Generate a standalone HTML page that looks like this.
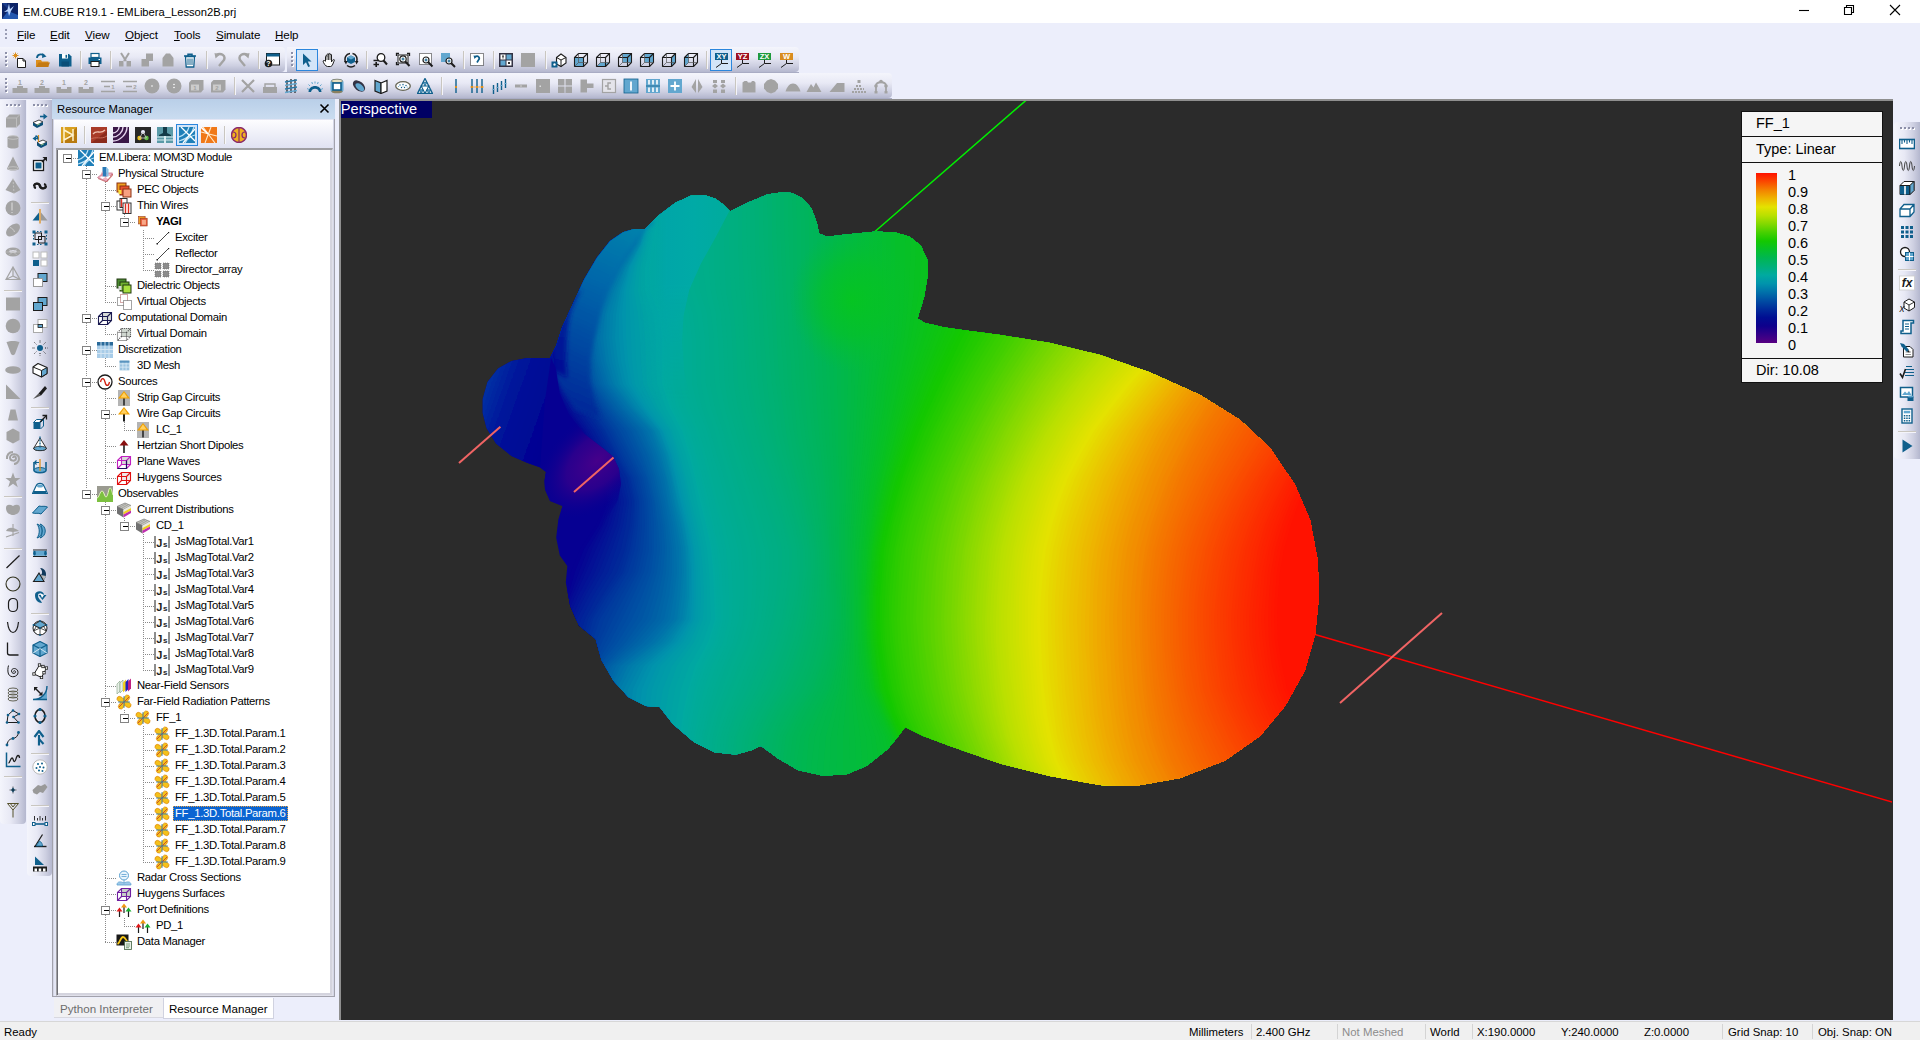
<!DOCTYPE html><html><head><meta charset="utf-8"><title>EM.CUBE</title><style>
html,body{margin:0;padding:0;}
body{width:1920px;height:1040px;overflow:hidden;background:#eceefb;font-family:"Liberation Sans",sans-serif;font-size:11px;color:#000;position:relative;}
.abs{position:absolute;}
.t{position:absolute;white-space:nowrap;line-height:1;}
#title{left:0;top:0;width:1920px;height:23px;background:#fff;}
#menubar{left:0;top:23px;width:1920px;height:23px;background:#eceefb;}
.tb{position:absolute;background:linear-gradient(#f4f5fc 0%,#e8e9f5 40%,#cdcfe1 75%,#b4b7ce 100%);border-radius:0 4px 4px 0;}
.vtb{position:absolute;background:linear-gradient(90deg,#f4f5fc 0%,#e8e9f5 40%,#cdcfe1 75%,#b4b7ce 100%);border-radius:0 0 4px 4px;}
#viewport{left:339px;top:99px;width:1554px;height:921px;background:#2b2b2b;border-top:2px solid #8f8f8f;border-left:2px solid #8f8f8f;box-sizing:border-box;}
#status{left:0;top:1021px;width:1920px;height:19px;background:#f0f0f0;border-top:1px solid #d7d7d7;box-sizing:border-box;}
</style></head><body>
<div id="title" class="abs"></div>
<div class="t " style="left:23px;top:6.6px;font-size:11.2px;color:#000;">EM.CUBE R19.1 - EMLibera_Lesson2B.prj</div>
<div id="menubar" class="abs"></div>
<div id="status" class="abs"></div>
<div id="viewport" class="abs"></div>
<svg class="abs" style="left:341px;top:101px" width="1551" height="919" viewBox="341 101 1551 919">
<line x1="874.7" y1="231.7" x2="1027" y2="99.5" stroke="#00f000" stroke-width="1.5"/>
<line x1="1315" y1="634.5" x2="1893" y2="802.3" stroke="#ff0000" stroke-width="1.5"/>
<defs><clipPath id="cl"><path d="M550.0 358.0L527.0 358.0L511.5 361.0L498.0 368.5L487.5 382.0L482.7 399.0L482.7 413.0L486.5 428.0L496.0 443.5L511.5 456.0L527.0 462.7L540.4 467.5L546.0 472.0L544.5 481.0L545.0 489.6L550.0 501.0L562.5 506.0L558.3 519.8L556.2 537.7L559.8 555.6L567.3 566.0L565.8 582.4L570.2 606.0L579.0 625.6L595.6 639.0L601.5 660.0L613.5 680.8L628.4 697.0L646.0 706.0L659.7 707.0L673.0 724.0L694.0 742.0L714.8 752.3L735.7 754.4L752.0 750.0L761.0 745.7L777.4 758.0L798.0 770.0L822.0 775.5L846.0 774.6L866.8 765.7L887.7 749.0L899.6 734.4L905.0 727.0L923.4 736.0L950.0 746.0L1000.0 763.5L1050.0 776.0L1100.0 785.0L1135.0 786.0L1180.0 778.0L1225.0 760.5L1260.0 736.0L1285.0 706.0L1305.0 670.0L1315.0 635.0L1319.0 595.0L1317.5 560.0L1310.0 520.0L1295.0 485.0L1270.0 448.0L1240.0 420.0L1200.0 395.0L1150.0 372.5L1100.0 355.0L1050.0 343.0L1000.0 335.0L960.0 329.7L944.7 327.5L925.0 323.0L917.4 318.8L924.0 296.9L927.7 275.0L927.2 259.7L920.6 245.5L909.7 236.7L894.4 232.3L874.7 231.7L846.3 234.5L826.6 236.7L819.0 233.4L816.7 222.5L811.3 208.3L802.5 198.4L791.6 193.0L780.6 192.5L767.5 194.5L750.0 201.7L730.0 211.5L723.8 205.0L715.0 198.4L704.0 195.0L691.0 195.8L675.6 202.8L658.0 216.0L645.0 229.0L634.0 229.0L623.0 232.3L610.0 241.0L597.0 257.5L584.0 279.4L573.0 303.5L562.0 327.5L556.4 345.0Z"/></clipPath>
<linearGradient id="gbl" gradientUnits="userSpaceOnUse" x1="642" y1="228" x2="566" y2="395"><stop offset="0" stop-color="#0082ac"/><stop offset="0.35" stop-color="#0068aa"/><stop offset="0.7" stop-color="#004aa2"/><stop offset="1" stop-color="#002c9a"/></linearGradient>
<linearGradient id="gbb" gradientUnits="userSpaceOnUse" x1="578" y1="295" x2="560" y2="375"><stop offset="0" stop-color="#002a9c"/><stop offset="1" stop-color="#000c94"/></linearGradient>
<linearGradient id="gsl" gradientUnits="userSpaceOnUse" x1="482" y1="400" x2="552" y2="425"><stop offset="0" stop-color="#0030a4"/><stop offset="0.35" stop-color="#00149a"/><stop offset="1" stop-color="#040092"/></linearGradient>
<radialGradient id="gpu" gradientUnits="userSpaceOnUse" cx="0" cy="0" r="1" gradientTransform="translate(597 461) rotate(-42) scale(72 44)"><stop offset="0" stop-color="#46008a"/><stop offset="0.5" stop-color="#30008c" stop-opacity="0.85"/><stop offset="1" stop-color="#0a0090" stop-opacity="0"/></radialGradient>
<linearGradient id="gfd" x1="0" y1="0" x2="0" y2="1"><stop offset="0" stop-color="#060092"/><stop offset="0.68" stop-color="#060092"/><stop offset="0.93" stop-color="#060092" stop-opacity="0"/></linearGradient>
<linearGradient id="gl2" gradientUnits="userSpaceOnUse" x1="640" y1="0" x2="730" y2="0"><stop offset="0" stop-color="#00a2aa" stop-opacity="0"/><stop offset="0.3" stop-color="#00a6a8"/><stop offset="0.6" stop-color="#00aaa6"/><stop offset="1" stop-color="#00ac9c"/></linearGradient>
<linearGradient id="gl2m" gradientUnits="userSpaceOnUse" x1="0" y1="190" x2="0" y2="400"><stop offset="0" stop-color="#fff"/><stop offset="0.45" stop-color="#fff"/><stop offset="1" stop-color="#000"/></linearGradient>
<mask id="ml2" maskUnits="userSpaceOnUse" x="600" y="180" width="160" height="240"><rect x="600" y="180" width="160" height="240" fill="url(#gl2m)"/></mask>
<radialGradient id="ghs" gradientUnits="userSpaceOnUse" cx="0" cy="0" r="1" gradientTransform="translate(852 300) scale(62 72)"><stop offset="0" stop-color="#06c61c" stop-opacity="0.85"/><stop offset="0.5" stop-color="#06c420" stop-opacity="0.55"/><stop offset="1" stop-color="#06c030" stop-opacity="0"/></radialGradient>
<filter id="bl" x="-20%" y="-20%" width="140%" height="140%"><feGaussianBlur stdDeviation="2"/></filter>
<filter id="bl4" x="-20%" y="-20%" width="140%" height="140%"><feGaussianBlur stdDeviation="5"/></filter>
</defs>
<g clip-path="url(#cl)">
<rect x="470" y="180" width="870" height="620" fill="#060092"/>
<path d="M520 150L520 173L520 197L520 220L520 244L520 267L520 291L523 314L526 338L533 361L542 384L560 408L580 431L592 455L602 478L606 502L596 525L580 549L571 572L566 596L560 619L552 642L543 666L539 689L537 713L535 736L533 760L531 783L530 807L530 830L1400 830L1400 150Z" fill="#060092"/>
<path d="M529 150L529 173L529 197L529 220L529 244L527 267L526 291L527 314L530 338L536 361L545 384L562 408L581 431L593 455L604 478L608 502L599 525L584 549L575 572L568 596L561 619L553 642L546 666L542 689L540 713L538 736L537 760L535 783L533 807L533 830L1400 830L1400 150Z" fill="#050493"/>
<path d="M537 150L537 173L537 197L537 220L537 244L534 267L532 291L531 314L533 338L539 361L548 384L564 408L582 431L595 455L606 478L610 502L602 525L588 549L579 572L570 596L562 619L555 642L549 666L545 689L543 713L542 736L540 760L538 783L536 807L536 830L1400 830L1400 150Z" fill="#050893"/>
<path d="M545 150L545 173L545 197L546 220L545 244L541 267L537 291L535 314L537 338L542 361L550 384L566 408L584 431L596 455L608 478L612 502L604 525L592 549L583 572L572 596L563 619L557 642L551 666L548 689L546 713L545 736L543 760L541 783L540 807L540 830L1400 830L1400 150Z" fill="#040c94"/>
<path d="M553 150L553 173L553 197L554 220L553 244L547 267L542 291L539 314L540 338L545 361L553 384L568 408L585 431L598 455L610 478L614 502L607 525L596 549L586 572L575 596L565 619L559 642L554 666L552 689L550 713L548 736L546 760L544 783L543 807L543 830L1400 830L1400 150Z" fill="#041095"/>
<path d="M560 150L560 173L561 197L562 220L561 244L553 267L547 291L543 314L544 338L548 361L556 384L570 408L587 431L600 455L612 478L617 502L610 525L600 549L591 572L578 596L568 619L561 642L557 666L555 689L553 713L551 736L549 760L547 783L546 807L546 830L1400 830L1400 150Z" fill="#031496"/>
<path d="M568 150L568 173L568 197L569 220L568 244L559 267L552 291L547 314L547 338L552 361L559 384L573 408L589 431L602 455L614 478L619 502L613 525L604 549L595 572L582 596L571 619L564 642L560 666L558 689L556 713L554 736L552 760L551 783L549 807L549 830L1400 830L1400 150Z" fill="#031896"/>
<path d="M575 150L575 173L575 197L576 220L575 244L565 267L557 291L551 314L550 338L555 361L562 384L575 408L591 431L604 455L617 478L621 502L617 525L608 549L599 572L585 596L574 619L568 642L564 666L561 689L559 713L558 736L556 760L554 783L552 807L552 830L1400 830L1400 150Z" fill="#021c97"/>
<path d="M582 150L582 173L582 197L583 220L581 244L570 267L562 291L555 314L554 338L558 361L565 384L578 408L594 431L607 455L619 478L624 502L620 525L612 549L603 572L589 596L577 619L571 642L567 666L564 689L562 713L561 736L559 760L557 783L555 807L555 830L1400 830L1400 150Z" fill="#022098"/>
<path d="M588 150L588 173L588 197L589 220L587 244L575 267L566 291L558 314L557 338L561 361L568 384L580 408L596 431L609 455L621 478L627 502L623 525L616 549L608 572L593 596L581 619L574 642L570 666L568 689L566 713L564 736L562 760L560 783L559 807L559 830L1400 830L1400 150Z" fill="#012499"/>
<path d="M594 150L594 173L594 197L595 220L592 244L580 267L570 291L562 314L560 338L564 361L570 384L583 408L599 431L611 455L624 478L629 502L626 525L621 549L612 572L597 596L585 619L578 642L574 666L571 689L569 713L567 736L565 760L563 783L562 807L562 830L1400 830L1400 150Z" fill="#012899"/>
<path d="M600 150L600 173L600 197L600 220L597 244L584 267L574 291L565 314L563 338L567 361L573 384L586 408L601 431L614 455L627 478L632 502L630 525L625 549L617 572L602 596L588 619L582 642L577 666L574 689L572 713L570 736L568 760L566 783L565 807L565 830L1400 830L1400 150Z" fill="#002c9a"/>
<path d="M603 150L603 173L603 197L603 220L599 244L586 267L576 291L567 314L565 338L569 361L575 384L588 408L603 431L616 455L628 478L634 502L632 525L627 549L620 572L604 596L591 619L584 642L579 666L576 689L574 713L572 736L570 760L568 783L567 807L567 830L1400 830L1400 150Z" fill="#002f9b"/>
<path d="M606 150L606 173L606 197L606 220L602 244L588 267L578 291L569 314L567 338L570 361L577 384L589 408L605 431L617 455L630 478L635 502L634 525L630 549L623 572L607 596L593 619L587 642L581 666L577 689L575 713L574 736L572 760L570 783L568 807L568 830L1400 830L1400 150Z" fill="#00339c"/>
<path d="M609 150L609 173L609 197L608 220L604 244L590 267L580 291L571 314L568 338L572 361L578 384L591 408L606 431L619 455L631 478L637 502L636 525L632 549L625 572L610 596L597 619L589 642L583 666L579 689L577 713L575 736L573 760L571 783L570 807L570 830L1400 830L1400 150Z" fill="#00369d"/>
<path d="M612 150L612 173L612 197L611 220L606 244L592 267L581 291L572 314L570 338L574 361L580 384L593 408L609 431L621 455L633 478L639 502L638 525L635 549L628 572L614 596L600 619L592 642L585 666L581 689L579 713L577 736L575 760L573 783L572 807L572 830L1400 830L1400 150Z" fill="#003a9e"/>
<path d="M615 150L615 173L615 197L614 220L608 244L594 267L583 291L574 314L571 338L575 361L581 384L595 408L611 431L623 455L635 478L640 502L640 525L638 549L632 572L617 596L604 619L596 642L587 666L582 689L580 713L578 736L576 760L575 783L573 807L573 830L1400 830L1400 150Z" fill="#003d9e"/>
<path d="M618 150L618 173L618 197L616 220L611 244L596 267L585 291L575 314L573 338L577 361L583 384L597 408L613 431L625 455L637 478L642 502L642 525L640 549L635 572L621 596L609 619L599 642L589 666L584 689L582 713L580 736L578 760L576 783L575 807L575 830L1400 830L1400 150Z" fill="#00409f"/>
<path d="M621 150L621 173L621 197L619 220L613 244L598 267L587 291L577 314L575 338L578 361L585 384L599 408L615 431L628 455L639 478L644 502L645 525L643 549L638 572L625 596L613 619L602 642L591 666L586 689L583 713L582 736L580 760L578 783L576 807L576 830L1400 830L1400 150Z" fill="#0044a0"/>
<path d="M624 150L624 173L623 197L621 220L615 244L600 267L588 291L579 314L576 338L580 361L586 384L601 408L618 431L630 455L641 478L646 502L647 525L646 549L641 572L629 596L618 619L606 642L593 666L587 689L585 713L583 736L581 760L579 783L578 807L578 830L1400 830L1400 150Z" fill="#0047a1"/>
<path d="M626 150L626 173L626 197L623 220L617 244L601 267L590 291L580 314L578 338L581 361L588 384L603 408L620 431L632 455L643 478L648 502L649 525L649 549L644 572L633 596L622 619L610 642L595 666L589 689L586 713L585 736L583 760L581 783L579 807L579 830L1400 830L1400 150Z" fill="#004ba2"/>
<path d="M629 150L629 173L629 197L626 220L618 244L603 267L591 291L582 314L579 338L583 361L589 384L605 408L623 431L635 455L645 478L650 502L651 525L652 549L648 572L637 596L627 619L614 642L597 666L590 689L588 713L586 736L584 760L582 783L581 807L581 830L1400 830L1400 150Z" fill="#004ea3"/>
<path d="M632 150L632 173L631 197L628 220L620 244L605 267L593 291L583 314L581 338L584 361L591 384L607 408L626 431L637 455L647 478L652 502L654 525L654 549L651 572L642 596L632 619L618 642L599 666L592 689L590 713L588 736L586 760L584 783L582 807L582 830L1400 830L1400 150Z" fill="#0052a4"/>
<path d="M634 150L634 173L634 197L630 220L622 244L606 267L594 291L585 314L582 338L586 361L593 384L609 408L628 431L640 455L648 478L654 502L656 525L657 549L654 572L646 596L637 619L622 642L601 666L594 689L591 713L590 736L587 760L585 783L584 807L584 830L1400 830L1400 150Z" fill="#0055a4"/>
<path d="M637 150L637 173L636 197L632 220L624 244L608 267L596 291L586 314L584 338L588 361L594 384L611 408L631 431L642 455L650 478L655 502L658 525L660 549L657 572L650 596L642 619L626 642L604 666L596 689L593 713L591 736L589 760L587 783L586 807L586 830L1400 830L1400 150Z" fill="#0059a5"/>
<path d="M639 150L639 173L638 197L634 220L625 244L609 267L597 291L588 314L586 338L589 361L596 384L613 408L633 431L644 455L652 478L657 502L661 525L662 549L660 572L654 596L647 619L629 642L606 666L597 689L595 713L593 736L591 760L589 783L588 807L588 830L1400 830L1400 150Z" fill="#005ca6"/>
<path d="M641 150L641 173L640 197L636 220L627 244L611 267L599 291L590 314L587 338L591 361L598 384L615 408L636 431L647 455L654 478L659 502L663 525L665 549L663 572L658 596L651 619L633 642L608 666L599 689L597 713L595 736L593 760L591 783L589 807L589 830L1400 830L1400 150Z" fill="#0060a6"/>
<path d="M643 150L643 173L642 197L637 220L628 244L612 267L601 291L591 314L589 338L593 361L600 384L618 408L638 431L649 455L656 478L661 502L665 525L667 549L666 572L662 596L656 619L637 642L611 666L601 689L599 713L597 736L595 760L593 783L591 807L591 830L1400 830L1400 150Z" fill="#0064a7"/>
<path d="M645 150L645 173L644 197L639 220L630 244L614 267L602 291L593 314L591 338L595 361L602 384L620 408L641 431L651 455L658 478L663 502L667 525L670 549L669 572L665 596L660 619L641 642L613 666L603 689L601 713L599 736L597 760L595 783L593 807L593 830L1400 830L1400 150Z" fill="#0067a8"/>
<path d="M647 150L647 173L646 197L640 220L631 244L615 267L604 291L595 314L593 338L597 361L604 384L622 408L643 431L653 455L660 478L665 502L669 525L672 549L672 572L669 596L664 619L644 642L616 666L606 689L603 713L601 736L599 760L597 783L595 807L595 830L1400 830L1400 150Z" fill="#006ba9"/>
<path d="M648 150L648 173L647 197L642 220L632 244L617 267L606 291L597 314L595 338L599 361L606 384L624 408L645 431L655 455L662 478L667 502L671 525L674 549L674 572L672 596L667 619L648 642L619 666L608 689L605 713L603 736L601 760L599 783L598 807L598 830L1400 830L1400 150Z" fill="#006ea9"/>
<path d="M650 150L650 173L648 197L643 220L634 244L619 267L608 291L599 314L597 338L601 361L608 384L626 408L647 431L657 455L664 478L668 502L673 525L676 549L677 572L674 596L670 619L651 642L621 666L610 689L607 713L605 736L603 760L601 783L600 807L600 830L1400 830L1400 150Z" fill="#0072aa"/>
<path d="M652 150L652 173L650 197L644 220L635 244L620 267L610 291L602 314L600 338L604 361L610 384L629 408L650 431L659 455L666 478L670 502L675 525L679 549L679 572L677 596L674 619L655 642L625 666L613 689L611 713L608 736L606 760L604 783L603 807L603 830L1400 830L1400 150Z" fill="#0076aa"/>
<path d="M653 150L653 173L651 197L645 220L636 244L622 267L612 291L605 314L603 338L606 361L613 384L631 408L652 431L661 455L667 478L672 502L677 525L681 549L682 572L680 596L677 619L658 642L628 666L617 689L614 713L612 736L610 760L608 783L607 807L607 830L1400 830L1400 150Z" fill="#007baa"/>
<path d="M654 150L654 173L652 197L646 220L637 244L624 267L614 291L607 314L606 338L609 361L615 384L633 408L654 431L663 455L669 478L674 502L679 525L683 549L684 572L682 596L679 619L662 642L632 666L620 689L617 713L615 736L613 760L612 783L610 807L610 830L1400 830L1400 150Z" fill="#007fab"/>
<path d="M655 150L655 173L653 197L647 220L638 244L625 267L616 291L610 314L609 338L612 361L618 384L635 408L655 431L665 455L671 478L675 502L681 525L685 549L686 572L685 596L682 619L665 642L636 666L624 689L621 713L619 736L617 760L615 783L614 807L614 830L1400 830L1400 150Z" fill="#0083ab"/>
<path d="M656 150L656 173L653 197L647 220L639 244L626 267L618 291L613 314L612 338L615 361L620 384L637 408L657 431L666 455L672 478L677 502L682 525L686 549L687 572L687 596L684 619L668 642L640 666L628 689L625 713L623 736L621 760L620 783L619 807L619 830L1400 830L1400 150Z" fill="#0087ab"/>
<path d="M657 150L657 173L654 197L648 220L640 244L628 267L620 291L616 314L615 338L618 361L623 384L640 408L659 431L668 455L673 478L678 502L684 525L688 549L689 572L689 596L686 619L671 642L644 666L633 689L630 713L628 736L626 760L624 783L623 807L623 830L1400 830L1400 150Z" fill="#008cac"/>
<path d="M658 150L658 173L655 197L648 220L641 244L629 267L622 291L619 314L619 338L621 361L626 384L642 408L660 431L669 455L675 478L680 502L685 525L689 549L691 572L690 596L689 619L674 642L648 666L637 689L634 713L632 736L630 760L629 783L628 807L628 830L1400 830L1400 150Z" fill="#0090ac"/>
<path d="M659 150L659 173L655 197L649 220L641 244L630 267L624 291L622 314L623 338L625 361L629 384L644 408L662 431L671 455L676 478L681 502L687 525L691 549L692 572L692 596L691 619L677 642L652 666L642 689L639 713L637 736L635 760L634 783L633 807L633 830L1400 830L1400 150Z" fill="#0094ac"/>
<path d="M660 150L660 173L656 197L650 220L642 244L632 267L626 291L626 314L626 338L628 361L632 384L646 408L663 431L672 455L678 478L683 502L688 525L693 549L694 572L694 596L693 619L680 642L657 666L647 689L644 713L642 736L640 760L639 783L638 807L638 830L1400 830L1400 150Z" fill="#0097aa"/>
<path d="M660 150L660 173L656 197L650 220L643 244L634 267L629 291L630 314L631 338L632 361L635 384L649 408L665 431L674 455L680 478L685 502L690 525L694 549L696 572L696 596L695 619L683 642L661 666L652 689L649 713L647 736L645 760L644 783L643 807L643 830L1400 830L1400 150Z" fill="#009aa9"/>
<path d="M662 150L662 173L657 197L651 220L644 244L635 267L631 291L634 314L635 338L636 361L639 384L652 408L667 431L676 455L682 478L687 502L692 525L696 549L698 572L698 596L698 619L686 642L666 666L657 689L654 713L652 736L650 760L649 783L649 807L649 830L1400 830L1400 150Z" fill="#009ca8"/>
<path d="M663 150L663 173L658 197L652 220L645 244L637 267L634 291L638 314L640 338L641 361L643 384L655 408L670 431L678 455L684 478L689 502L694 525L699 549L700 572L701 596L700 619L690 642L672 666L663 689L659 713L657 736L656 760L655 783L654 807L654 830L1400 830L1400 150Z" fill="#009fa6"/>
<path d="M664 150L664 173L659 197L653 220L647 244L640 267L638 291L643 314L645 338L646 361L647 384L658 408L672 431L680 455L686 478L691 502L697 525L701 549L703 572L704 596L703 619L694 642L677 666L669 689L665 713L663 736L661 760L661 783L660 807L660 830L1400 830L1400 150Z" fill="#00a2a4"/>
<path d="M666 150L666 173L661 197L654 220L648 244L642 267L641 291L647 314L650 338L651 361L652 384L662 408L675 431L683 455L689 478L694 502L699 525L704 549L706 572L707 596L707 619L698 642L683 666L675 689L671 713L668 736L667 760L666 783L666 807L666 830L1400 830L1400 150Z" fill="#00a4a3"/>
<path d="M668 150L668 173L662 197L655 220L650 244L645 267L645 291L653 314L656 338L656 361L657 384L666 408L678 431L686 455L692 478L697 502L702 525L707 549L709 572L710 596L711 619L703 642L689 666L681 689L677 713L674 736L673 760L672 783L672 807L672 830L1400 830L1400 150Z" fill="#00a7a2"/>
<path d="M670 150L670 173L664 197L657 220L652 244L649 267L650 291L659 314L662 338L662 361L662 384L670 408L682 431L689 455L695 478L700 502L706 525L711 549L713 572L714 596L715 619L708 642L695 666L688 689L683 713L680 736L679 760L678 783L678 807L678 830L1400 830L1400 150Z" fill="#00aaa0"/>
<path d="M671 150L671 173L665 197L658 220L653 244L650 267L651 291L661 314L664 338L664 361L664 384L672 408L683 431L691 455L696 478L702 502L707 525L712 549L715 572L716 596L717 619L710 642L698 666L690 689L685 713L682 736L681 760L680 783L680 807L680 830L1400 830L1400 150Z" fill="#00aa9e"/>
<path d="M672 150L672 173L666 197L659 220L655 244L652 267L654 291L663 314L667 338L667 361L667 384L674 408L685 431L692 455L698 478L704 502L709 525L714 549L717 572L718 596L719 619L713 642L700 666L693 689L688 713L684 736L683 760L682 783L682 807L682 830L1400 830L1400 150Z" fill="#00aa9d"/>
<path d="M674 150L674 173L668 197L661 220L657 244L655 267L657 291L666 314L670 338L670 361L670 384L677 408L687 431L695 455L701 478L706 502L712 525L717 549L719 572L720 596L721 619L715 642L703 666L695 689L690 713L687 736L685 760L685 783L684 807L684 830L1400 830L1400 150Z" fill="#00ab9b"/>
<path d="M676 150L676 173L670 197L664 220L660 244L658 267L660 291L669 314L673 338L673 361L673 384L680 408L690 431L697 455L703 478L709 502L714 525L719 549L722 572L723 596L723 619L718 642L706 666L698 689L693 713L689 736L688 760L687 783L687 807L687 830L1400 830L1400 150Z" fill="#00ab99"/>
<path d="M679 150L679 173L673 197L667 220L663 244L661 267L663 291L673 314L676 338L676 361L676 384L683 408L693 431L700 455L706 478L712 502L718 525L723 549L725 572L726 596L726 619L720 642L709 666L701 689L695 713L691 736L690 760L689 783L689 807L689 830L1400 830L1400 150Z" fill="#00ab98"/>
<path d="M682 150L682 173L676 197L670 220L666 244L665 267L667 291L676 314L680 338L680 361L680 384L686 408L696 431L703 455L709 478L715 502L721 525L726 549L728 572L729 596L729 619L723 642L712 666L704 689L698 713L694 736L693 760L692 783L691 807L691 830L1400 830L1400 150Z" fill="#00ac96"/>
<path d="M685 150L685 173L679 197L673 220L670 244L669 267L671 291L680 314L684 338L684 361L684 384L690 408L699 431L706 455L712 478L718 502L725 525L730 549L732 572L733 596L732 619L727 642L716 666L708 689L701 713L696 736L695 760L694 783L694 807L694 830L1400 830L1400 150Z" fill="#00ac94"/>
<path d="M688 150L688 173L683 197L677 220L674 244L673 267L676 291L684 314L688 338L688 361L688 384L694 408L703 431L710 455L716 478L722 502L728 525L734 549L736 572L736 596L736 619L730 642L719 666L711 689L704 713L699 736L698 760L697 783L696 807L696 830L1400 830L1400 150Z" fill="#00ac93"/>
<path d="M691 150L691 173L686 197L681 220L679 244L678 267L680 291L689 314L692 338L692 361L692 384L698 408L707 431L713 455L720 478L726 502L732 525L738 549L740 572L740 596L739 619L733 642L723 666L714 689L707 713L702 736L700 760L699 783L699 807L699 830L1400 830L1400 150Z" fill="#00ac91"/>
<path d="M695 150L695 173L690 197L686 220L683 244L683 267L685 291L693 314L696 338L696 361L697 384L702 408L710 431L717 455L724 478L730 502L737 525L742 549L744 572L744 596L743 619L737 642L726 666L718 689L710 713L704 736L703 760L702 783L702 807L702 830L1400 830L1400 150Z" fill="#00ac8f"/>
<path d="M699 150L699 173L695 197L690 220L688 244L688 267L690 291L697 314L700 338L701 361L701 384L706 408L715 431L721 455L728 478L734 502L741 525L747 549L748 572L748 596L746 619L740 642L730 666L722 689L713 713L707 736L705 760L704 783L704 807L704 830L1400 830L1400 150Z" fill="#00ad8e"/>
<path d="M703 150L703 173L699 197L695 220L693 244L693 267L695 291L702 314L705 338L705 361L706 384L711 408L719 431L725 455L732 478L739 502L746 525L751 549L753 572L752 596L750 619L744 642L734 666L725 689L716 713L710 736L708 760L707 783L707 807L707 830L1400 830L1400 150Z" fill="#00ad8c"/>
<path d="M707 150L707 173L703 197L700 220L698 244L698 267L700 291L707 314L709 338L710 361L710 384L715 408L723 431L729 455L736 478L743 502L750 525L756 549L757 572L756 596L754 619L748 642L738 666L729 689L719 713L713 736L711 760L710 783L709 807L709 830L1400 830L1400 150Z" fill="#00ad8a"/>
<path d="M711 150L711 173L708 197L705 220L703 244L703 267L706 291L711 314L714 338L714 361L715 384L720 408L727 431L734 455L741 478L748 502L754 525L760 549L761 572L760 596L757 619L751 642L741 666L732 689L722 713L716 736L713 760L712 783L712 807L712 830L1400 830L1400 150Z" fill="#00ae89"/>
<path d="M715 150L715 173L712 197L710 220L708 244L709 267L711 291L716 314L718 338L719 361L720 384L725 408L731 431L738 455L745 478L752 502L759 525L765 549L766 572L764 596L761 619L755 642L745 666L736 689L726 713L718 736L716 760L715 783L715 807L715 830L1400 830L1400 150Z" fill="#00ae87"/>
<path d="M719 150L719 173L717 197L715 220L714 244L714 267L716 291L721 314L723 338L724 361L725 384L729 408L736 431L742 455L749 478L756 502L763 525L769 549L770 572L768 596L765 619L759 642L749 666L740 689L729 713L721 736L719 760L718 783L717 807L717 830L1400 830L1400 150Z" fill="#00ae85"/>
<path d="M723 150L723 173L722 197L720 220L719 244L719 267L721 291L725 314L727 338L728 361L729 384L734 408L740 431L746 455L754 478L761 502L768 525L773 549L774 572L772 596L768 619L762 642L753 666L743 689L732 713L724 736L722 760L720 783L720 807L720 830L1400 830L1400 150Z" fill="#00ae84"/>
<path d="M728 150L728 173L726 197L724 220L724 244L725 267L726 291L730 314L732 338L733 361L734 384L738 408L744 431L750 455L758 478L765 502L772 525L778 549L778 572L776 596L772 619L766 642L756 666L747 689L735 713L727 736L724 760L723 783L723 807L723 830L1400 830L1400 150Z" fill="#00ae82"/>
<path d="M732 150L732 173L730 197L729 220L729 244L730 267L731 291L734 314L736 338L737 361L738 384L742 408L748 431L754 455L762 478L769 502L776 525L782 549L782 572L779 596L775 619L769 642L760 666L750 689L738 713L729 736L727 760L726 783L725 807L725 830L1400 830L1400 150Z" fill="#00af80"/>
<path d="M736 150L736 173L735 197L734 220L734 244L734 267L736 291L738 314L740 338L741 361L743 384L747 408L752 431L758 455L766 478L773 502L780 525L785 549L786 572L783 596L779 619L772 642L763 666L753 689L741 713L732 736L730 760L728 783L728 807L728 830L1400 830L1400 150Z" fill="#00af7f"/>
<path d="M739 150L739 173L739 197L738 220L738 244L739 267L740 291L743 314L744 338L745 361L747 384L751 408L756 431L762 455L769 478L776 502L783 525L789 549L789 572L786 596L782 619L776 642L767 666L757 689L744 713L735 736L732 760L731 783L730 807L730 830L1400 830L1400 150Z" fill="#00af7d"/>
<path d="M743 150L743 173L743 197L742 220L742 244L743 267L745 291L747 314L748 338L749 361L751 384L755 408L760 431L765 455L773 478L780 502L786 525L792 549L792 572L789 596L785 619L779 642L770 666L760 689L747 713L737 736L735 760L733 783L733 807L733 830L1400 830L1400 150Z" fill="#00b07b"/>
<path d="M747 150L747 173L747 197L746 220L747 244L748 267L749 291L750 314L752 338L753 361L755 384L758 408L763 431L769 455L776 478L783 502L789 525L795 549L795 572L792 596L788 619L781 642L773 666L763 689L750 713L740 736L737 760L736 783L736 807L736 830L1400 830L1400 150Z" fill="#00b07a"/>
<path d="M750 150L750 173L750 197L750 220L750 244L751 267L753 291L754 314L755 338L757 361L758 384L762 408L766 431L772 455L779 478L785 502L792 525L797 549L798 572L795 596L790 619L784 642L776 666L766 689L752 713L743 736L740 760L738 783L738 807L738 830L1400 830L1400 150Z" fill="#00b078"/>
<path d="M754 150L754 173L754 197L755 220L755 244L756 267L757 291L759 314L760 338L761 361L763 384L766 408L770 431L776 455L782 478L789 502L795 525L800 549L800 572L798 596L793 619L787 642L779 666L769 689L756 713L746 736L743 760L742 783L741 807L741 830L1400 830L1400 150Z" fill="#00b076"/>
<path d="M759 150L759 173L759 197L759 220L759 244L761 267L762 291L763 314L764 338L766 361L767 384L770 408L774 431L779 455L786 478L792 502L798 525L803 549L803 572L801 596L797 619L791 642L783 666L773 689L759 713L749 736L746 760L745 783L744 807L744 830L1400 830L1400 150Z" fill="#00b174"/>
<path d="M763 150L763 173L763 197L763 220L764 244L765 267L766 291L767 314L769 338L770 361L772 384L775 408L778 431L783 455L790 478L795 502L801 525L805 549L806 572L803 596L800 619L794 642L786 666L777 689L763 713L752 736L749 760L748 783L747 807L747 830L1400 830L1400 150Z" fill="#00b172"/>
<path d="M767 150L767 173L767 197L768 220L768 244L769 267L770 291L772 314L773 338L774 361L776 384L779 408L782 431L787 455L793 478L799 502L804 525L808 549L808 572L806 596L803 619L798 642L790 666L780 689L766 713L755 736L752 760L751 783L750 807L750 830L1400 830L1400 150Z" fill="#00b170"/>
<path d="M771 150L771 173L772 197L772 220L772 244L774 267L775 291L776 314L777 338L778 361L780 384L783 408L786 431L790 455L796 478L802 502L807 525L810 549L811 572L809 596L806 619L801 642L793 666L784 689L769 713L758 736L755 760L754 783L753 807L753 830L1400 830L1400 150Z" fill="#00b26d"/>
<path d="M775 150L775 173L776 197L776 220L777 244L778 267L779 291L780 314L781 338L783 361L784 384L787 408L790 431L794 455L800 478L805 502L809 525L813 549L813 572L812 596L809 619L804 642L797 666L787 689L773 713L761 736L758 760L756 783L756 807L756 830L1400 830L1400 150Z" fill="#00b26b"/>
<path d="M779 150L779 173L780 197L780 220L781 244L782 267L783 291L784 314L785 338L787 361L788 384L791 408L794 431L798 455L803 478L807 502L812 525L815 549L815 572L814 596L812 619L807 642L800 666L791 689L776 713L764 736L761 760L759 783L759 807L759 830L1400 830L1400 150Z" fill="#00b269"/>
<path d="M783 150L783 173L784 197L784 220L785 244L786 267L786 291L788 314L789 338L791 361L792 384L795 408L797 431L801 455L806 478L810 502L814 525L817 549L818 572L817 596L815 619L810 642L803 666L794 689L779 713L767 736L764 760L762 783L762 807L762 830L1400 830L1400 150Z" fill="#00b367"/>
<path d="M788 150L788 173L788 197L788 220L789 244L790 267L790 291L792 314L793 338L795 361L796 384L799 408L801 431L805 455L809 478L813 502L816 525L819 549L820 572L819 596L817 619L813 642L807 666L797 689L782 713L771 736L767 760L765 783L765 807L765 830L1400 830L1400 150Z" fill="#00b365"/>
<path d="M792 150L792 173L792 197L793 220L793 244L793 267L794 291L796 314L797 338L799 361L800 384L802 408L805 431L808 455L812 478L816 502L819 525L821 549L822 572L821 596L820 619L816 642L810 666L801 689L785 713L774 736L770 760L768 783L768 807L768 830L1400 830L1400 150Z" fill="#00b363"/>
<path d="M796 150L796 173L796 197L797 220L797 244L797 267L798 291L800 314L801 338L803 361L804 384L806 408L808 431L811 455L815 478L818 502L821 525L823 549L824 572L824 596L823 619L819 642L813 666L804 689L789 713L777 736L773 760L771 783L771 807L771 830L1400 830L1400 150Z" fill="#00b461"/>
<path d="M800 150L800 173L800 197L801 220L801 244L801 267L802 291L803 314L805 338L806 361L808 384L810 408L812 431L814 455L818 478L821 502L823 525L825 549L826 572L826 596L825 619L822 642L816 666L807 689L792 713L780 736L776 760L774 783L774 807L774 830L1400 830L1400 150Z" fill="#00b45f"/>
<path d="M804 150L804 173L804 197L805 220L805 244L805 267L806 291L807 314L809 338L810 361L812 384L813 408L815 431L818 455L821 478L823 502L825 525L827 549L827 572L828 596L828 619L825 642L819 666L810 689L795 713L783 736L780 760L777 783L777 807L777 830L1400 830L1400 150Z" fill="#00b45d"/>
<path d="M808 150L808 173L808 197L809 220L809 244L809 267L809 291L811 314L813 338L814 361L816 384L817 408L819 431L821 455L824 478L826 502L827 525L829 549L829 572L830 596L830 619L827 642L821 666L813 689L798 713L786 736L783 760L781 783L780 807L780 830L1400 830L1400 150Z" fill="#00b55a"/>
<path d="M812 150L812 173L812 197L813 220L813 244L813 267L813 291L815 314L817 338L818 361L819 384L821 408L822 431L824 455L826 478L828 502L829 525L830 549L831 572L832 596L832 619L830 642L824 666L816 689L801 713L790 736L786 760L784 783L784 807L784 830L1400 830L1400 150Z" fill="#00b558"/>
<path d="M816 150L816 173L817 197L817 220L817 244L817 267L817 291L819 314L821 338L822 361L823 384L824 408L825 431L827 455L829 478L830 502L831 525L832 549L833 572L834 596L834 619L832 642L827 666L819 689L805 713L793 736L790 760L788 783L787 807L787 830L1400 830L1400 150Z" fill="#00b556"/>
<path d="M821 150L821 173L821 197L821 220L821 244L821 267L821 291L823 314L824 338L826 361L827 384L828 408L829 431L830 455L832 478L833 502L833 525L834 549L835 572L836 596L836 619L834 642L829 666L822 689L808 713L797 736L794 760L792 783L791 807L791 830L1400 830L1400 150Z" fill="#00b654"/>
<path d="M825 150L825 173L825 197L825 220L825 244L825 267L825 291L827 314L828 338L829 361L830 384L831 408L832 431L833 455L834 478L835 502L835 525L836 549L836 572L837 596L838 619L836 642L831 666L825 689L812 713L801 736L797 760L795 783L795 807L795 830L1400 830L1400 150Z" fill="#00b652"/>
<path d="M829 150L829 173L829 197L829 220L829 244L829 267L829 291L831 314L832 338L833 361L834 384L834 408L835 431L836 455L837 478L837 502L837 525L838 549L838 572L839 596L840 619L838 642L834 666L828 689L815 713L805 736L802 760L800 783L799 807L799 830L1400 830L1400 150Z" fill="#00b750"/>
<path d="M833 150L833 173L833 197L833 220L833 244L833 267L833 291L835 314L836 338L837 361L837 384L838 408L838 431L838 455L839 478L840 502L839 525L839 549L840 572L841 596L841 619L840 642L836 666L830 689L819 713L809 736L807 760L805 783L804 807L804 830L1400 830L1400 150Z" fill="#01b74d"/>
<path d="M838 150L838 173L837 197L837 220L837 244L837 267L837 291L839 314L840 338L841 361L841 384L841 408L841 431L841 455L842 478L842 502L841 525L841 549L842 572L842 596L843 619L842 642L838 666L833 689L823 713L815 736L812 760L810 783L810 807L810 830L1400 830L1400 150Z" fill="#01b84b"/>
<path d="M842 150L842 173L841 197L841 220L841 244L841 267L842 291L843 314L844 338L844 361L844 384L844 408L844 431L844 455L844 478L844 502L843 525L843 549L843 572L844 596L845 619L843 642L840 666L836 689L827 713L820 736L818 760L816 783L816 807L816 830L1400 830L1400 150Z" fill="#01b849"/>
<path d="M846 150L846 173L845 197L845 220L845 244L845 267L846 291L847 314L848 338L848 361L848 384L847 408L847 431L847 455L846 478L846 502L845 525L845 549L845 572L846 596L846 619L845 642L842 666L839 689L832 713L826 736L824 760L823 783L822 807L822 830L1400 830L1400 150Z" fill="#02b946"/>
<path d="M850 150L850 173L849 197L849 220L849 244L849 267L850 291L851 314L852 338L852 361L851 384L851 408L850 431L849 455L849 478L848 502L847 525L847 549L847 572L847 596L848 619L847 642L844 666L841 689L836 713L831 736L830 760L829 783L829 807L829 830L1400 830L1400 150Z" fill="#02b944"/>
<path d="M854 150L854 173L853 197L853 220L853 244L853 267L854 291L855 314L856 338L855 361L855 384L854 408L853 431L852 455L851 478L850 502L849 525L848 549L848 572L849 596L849 619L848 642L846 666L844 689L840 713L837 736L837 760L836 783L836 807L836 830L1400 830L1400 150Z" fill="#02ba42"/>
<path d="M858 150L858 173L857 197L857 220L857 244L857 267L858 291L859 314L860 338L859 361L858 384L857 408L856 431L854 455L853 478L852 502L851 525L850 549L850 572L850 596L850 619L850 642L848 666L847 689L845 713L843 736L843 760L843 783L843 807L843 830L1400 830L1400 150Z" fill="#03ba3f"/>
<path d="M862 150L862 173L862 197L861 220L861 244L861 267L862 291L863 314L864 338L863 361L861 384L860 408L859 431L857 455L855 478L854 502L853 525L852 549L851 572L851 596L852 619L851 642L850 666L849 689L849 713L849 736L850 760L850 783L849 807L849 830L1400 830L1400 150Z" fill="#03bb3d"/>
<path d="M867 150L867 173L866 197L865 220L865 244L865 267L866 291L867 314L867 338L866 361L865 384L863 408L861 431L860 455L858 478L856 502L854 525L853 549L853 572L853 596L853 619L853 642L852 666L852 689L853 713L855 736L856 760L856 783L856 807L856 830L1400 830L1400 150Z" fill="#03bc3b"/>
<path d="M871 150L871 173L870 197L869 220L869 244L869 267L870 291L871 314L871 338L870 361L868 384L866 408L864 431L862 455L860 478L858 502L856 525L855 549L854 572L854 596L854 619L854 642L854 666L854 689L857 713L860 736L862 760L863 783L863 807L863 830L1400 830L1400 150Z" fill="#04bc38"/>
<path d="M876 150L876 173L874 197L873 220L873 244L874 267L874 291L875 314L875 338L873 361L871 384L869 408L867 431L864 455L862 478L860 502L858 525L856 549L856 572L855 596L855 619L855 642L856 666L857 689L861 713L866 736L868 760L869 783L870 807L870 830L1400 830L1400 150Z" fill="#04bd36"/>
<path d="M880 150L880 173L879 197L877 220L877 244L878 267L878 291L879 314L879 338L877 361L874 384L872 408L869 431L867 455L864 478L862 502L860 525L858 549L857 572L857 596L856 619L857 642L857 666L859 689L864 713L871 736L874 760L875 783L876 807L876 830L1400 830L1400 150Z" fill="#04bd34"/>
<path d="M885 150L885 173L883 197L881 220L882 244L882 267L883 291L883 314L883 338L880 361L877 384L875 408L872 431L869 455L866 478L863 502L861 525L859 549L858 572L858 596L858 619L858 642L859 666L861 689L868 713L875 736L879 760L881 783L882 807L882 830L1400 830L1400 150Z" fill="#05be31"/>
<path d="M890 150L890 173L888 197L886 220L886 244L886 267L887 291L887 314L886 338L884 361L880 384L877 408L874 431L871 455L868 478L865 502L863 525L861 549L860 572L859 596L859 619L859 642L860 666L863 689L871 713L879 736L883 760L886 783L887 807L887 830L1400 830L1400 150Z" fill="#05be2f"/>
<path d="M895 150L895 173L892 197L891 220L891 244L891 267L891 291L891 314L890 338L887 361L883 384L880 408L877 431L873 455L870 478L867 502L864 525L862 549L861 572L860 596L860 619L860 642L862 666L865 689L873 713L882 736L887 760L891 783L892 807L892 830L1400 830L1400 150Z" fill="#05bf2d"/>
<path d="M900 150L900 173L897 197L895 220L895 244L895 267L895 291L895 314L894 338L890 361L886 384L883 408L879 431L875 455L871 478L868 502L866 525L863 549L862 572L861 596L861 619L862 642L863 666L866 689L875 713L885 736L890 760L894 783L896 807L896 830L1400 830L1400 150Z" fill="#06bf2a"/>
<path d="M905 150L905 173L903 197L900 220L900 244L900 267L900 291L899 314L897 338L893 361L889 384L885 408L881 431L877 455L873 478L870 502L867 525L865 549L863 572L862 596L862 619L863 642L865 666L868 689L877 713L887 736L893 760L898 783L900 807L900 830L1400 830L1400 150Z" fill="#06c028"/>
<path d="M911 150L911 173L908 197L906 220L905 244L905 267L904 291L903 314L901 338L897 361L892 384L888 408L884 431L879 455L875 478L871 502L868 525L866 549L865 572L863 596L863 619L864 642L866 666L869 689L879 713L888 736L895 760L900 783L903 807L903 830L1400 830L1400 150Z" fill="#07c026"/>
<path d="M917 150L917 173L914 197L911 220L911 244L910 267L909 291L907 314L904 338L900 361L895 384L890 408L886 431L881 455L877 478L873 502L870 525L867 549L866 572L864 596L864 619L865 642L867 666L870 689L880 713L890 736L896 760L902 783L906 807L906 830L1400 830L1400 150Z" fill="#08c124"/>
<path d="M924 150L924 173L921 197L918 220L916 244L915 267L914 291L911 314L908 338L903 361L898 384L893 408L888 431L883 455L878 478L874 502L871 525L868 549L867 572L865 596L865 619L866 642L868 666L872 689L881 713L891 736L898 760L905 783L909 807L909 830L1400 830L1400 150Z" fill="#08c121"/>
<path d="M931 150L931 173L928 197L924 220L922 244L921 267L919 291L915 314L911 338L906 361L900 384L895 408L890 431L885 455L880 478L875 502L872 525L869 549L867 572L866 596L866 619L867 642L869 666L873 689L882 713L892 736L899 760L907 783L911 807L911 830L1400 830L1400 150Z" fill="#09c21f"/>
<path d="M939 150L939 173L935 197L931 220L929 244L927 267L924 291L920 314L915 338L909 361L903 384L897 408L892 431L886 455L881 478L876 502L873 525L870 549L868 572L867 596L867 619L867 642L870 666L874 689L883 713L893 736L901 760L909 783L914 807L914 830L1400 830L1400 150Z" fill="#0ac21d"/>
<path d="M946 150L946 173L942 197L938 220L935 244L932 267L929 291L924 314L918 338L912 361L906 384L900 408L894 431L888 455L882 478L878 502L874 525L871 549L869 572L868 596L867 619L868 642L871 666L875 689L884 713L894 736L902 760L910 783L916 807L916 830L1400 830L1400 150Z" fill="#0bc31b"/>
<path d="M954 150L954 173L950 197L945 220L942 244L938 267L934 291L928 314L922 338L915 361L908 384L902 408L896 431L890 455L884 478L879 502L875 525L872 549L870 572L869 596L868 619L869 642L872 666L875 689L884 713L894 736L903 760L912 783L918 807L918 830L1400 830L1400 150Z" fill="#0bc318"/>
<path d="M962 150L962 173L958 197L952 220L948 244L944 267L939 291L932 314L925 338L918 361L911 384L904 408L897 431L891 455L885 478L880 502L876 525L872 549L871 572L869 596L869 619L870 642L872 666L876 689L885 713L895 736L904 760L913 783L921 807L921 830L1400 830L1400 150Z" fill="#0cc416"/>
<path d="M970 150L970 173L966 197L960 220L955 244L950 267L944 291L936 314L929 338L921 361L913 384L906 408L899 431L893 455L886 478L881 502L877 525L873 549L872 572L870 596L870 619L871 642L873 666L877 689L886 713L896 736L905 760L915 783L923 807L923 830L1400 830L1400 150Z" fill="#0dc414"/>
<path d="M978 150L978 173L973 197L967 220L961 244L956 267L949 291L940 314L932 338L924 361L916 384L908 408L901 431L894 455L888 478L882 502L878 525L874 549L872 572L871 596L870 619L871 642L874 666L878 689L887 713L897 736L906 760L916 783L925 807L925 830L1400 830L1400 150Z" fill="#0ec412"/>
<path d="M986 150L986 173L981 197L974 220L968 244L962 267L954 291L944 314L935 338L927 361L918 384L910 408L903 431L896 455L889 478L883 502L879 525L875 549L873 572L872 596L871 619L872 642L875 666L879 689L887 713L897 736L907 760L918 783L927 807L927 830L1400 830L1400 150Z" fill="#0fc510"/>
<path d="M994 150L994 173L988 197L981 220L974 244L967 267L959 291L948 314L939 338L930 361L921 384L912 408L905 431L897 455L890 478L884 502L880 525L876 549L874 572L873 596L872 619L873 642L876 666L880 689L888 713L898 736L908 760L919 783L928 807L928 830L1400 830L1400 150Z" fill="#0fc50d"/>
<path d="M1001 150L1001 173L995 197L987 220L980 244L973 267L964 291L952 314L942 338L932 361L923 384L915 408L906 431L899 455L892 478L886 502L881 525L877 549L875 572L873 596L873 619L874 642L877 666L880 689L889 713L899 736L909 760L921 783L930 807L930 830L1400 830L1400 150Z" fill="#10c60b"/>
<path d="M1008 150L1008 173L1002 197L994 220L986 244L978 267L968 291L956 314L945 338L935 361L926 384L917 408L908 431L900 455L893 478L887 502L882 525L878 549L876 572L874 596L874 619L875 642L877 666L881 689L889 713L899 736L910 760L922 783L932 807L932 830L1400 830L1400 150Z" fill="#11c609"/>
<path d="M1014 150L1014 173L1008 197L999 220L991 244L983 267L973 291L960 314L949 338L938 361L928 384L919 408L910 431L902 455L894 478L888 502L883 525L879 549L877 572L875 596L875 619L876 642L878 666L882 689L890 713L900 736L911 760L924 783L934 807L934 830L1400 830L1400 150Z" fill="#12c707"/>
<path d="M1020 150L1020 173L1014 197L1005 220L996 244L987 267L977 291L964 314L952 338L941 361L931 384L921 408L912 431L904 455L896 478L890 502L884 525L880 549L878 572L876 596L876 619L877 642L880 666L883 689L891 713L901 736L912 760L925 783L936 807L936 830L1400 830L1400 150Z" fill="#12c704"/>
<path d="M1025 150L1025 173L1019 197L1010 220L1001 244L992 267L981 291L967 314L955 338L944 361L933 384L923 408L914 431L906 455L898 478L891 502L885 525L881 549L879 572L877 596L877 619L878 642L881 666L885 689L892 713L902 736L913 760L927 783L938 807L938 830L1400 830L1400 150Z" fill="#13c802"/>
<path d="M1030 150L1030 173L1023 197L1014 220L1005 244L996 267L985 291L971 314L958 338L947 361L936 384L926 408L916 431L908 455L899 478L893 502L887 525L882 549L880 572L879 596L878 619L879 642L882 666L886 689L893 713L903 736L915 760L929 783L940 807L940 830L1400 830L1400 150Z" fill="#14c800"/>
<path d="M1036 150L1036 173L1029 197L1019 220L1010 244L1000 267L989 291L976 314L962 338L951 361L940 384L929 408L919 431L910 455L902 478L895 502L889 525L884 549L882 572L880 596L880 619L881 642L884 666L888 689L895 713L905 736L917 760L931 783L943 807L943 830L1400 830L1400 150Z" fill="#18c900"/>
<path d="M1041 150L1041 173L1034 197L1024 220L1015 244L1005 267L994 291L980 314L967 338L955 361L943 384L932 408L922 431L913 455L904 478L897 502L891 525L886 549L884 572L882 596L882 619L883 642L886 666L890 689L897 713L907 736L919 760L934 783L946 807L946 830L1400 830L1400 150Z" fill="#1cc900"/>
<path d="M1046 150L1046 173L1039 197L1029 220L1019 244L1010 267L998 291L984 314L971 338L959 361L947 384L936 408L925 431L916 455L907 478L900 502L893 525L889 549L886 572L885 596L884 619L885 642L888 666L892 689L899 713L909 736L921 760L936 783L948 807L948 830L1400 830L1400 150Z" fill="#20ca00"/>
<path d="M1050 150L1050 173L1043 197L1033 220L1023 244L1014 267L1003 291L989 314L975 338L963 361L951 384L939 408L929 431L919 455L910 478L902 502L896 525L891 549L889 572L887 596L886 619L887 642L890 666L894 689L902 713L911 736L924 760L939 783L951 807L951 830L1400 830L1400 150Z" fill="#23ca00"/>
<path d="M1055 150L1055 173L1047 197L1037 220L1027 244L1018 267L1007 291L993 314L980 338L966 361L954 384L943 408L932 431L922 455L913 478L905 502L899 525L894 549L891 572L889 596L889 619L890 642L893 666L897 689L904 713L914 736L926 760L941 783L954 807L954 830L1400 830L1400 150Z" fill="#27cb00"/>
<path d="M1059 150L1059 173L1051 197L1041 220L1031 244L1022 267L1011 291L997 314L984 338L970 361L958 384L946 408L935 431L925 455L916 478L908 502L901 525L896 549L894 572L892 596L891 619L893 642L896 666L900 689L906 713L916 736L928 760L944 783L957 807L957 830L1400 830L1400 150Z" fill="#2bcc00"/>
<path d="M1063 150L1063 173L1055 197L1045 220L1035 244L1025 267L1014 291L1001 314L988 338L974 361L962 384L950 408L938 431L928 455L919 478L911 502L904 525L899 549L897 572L895 596L894 619L895 642L898 666L902 689L909 713L919 736L931 760L947 783L959 807L959 830L1400 830L1400 150Z" fill="#2fcc00"/>
<path d="M1067 150L1067 173L1059 197L1049 220L1039 244L1029 267L1018 291L1005 314L992 338L978 361L965 384L953 408L942 431L931 455L922 478L914 502L907 525L902 549L899 572L898 596L897 619L898 642L901 666L905 689L912 713L921 736L934 760L949 783L962 807L962 830L1400 830L1400 150Z" fill="#33cd00"/>
<path d="M1070 150L1070 173L1062 197L1052 220L1042 244L1032 267L1022 291L1009 314L996 338L982 361L969 384L957 408L945 431L935 455L925 478L917 502L910 525L905 549L903 572L901 596L900 619L901 642L904 666L908 689L915 713L924 736L936 760L952 783L964 807L964 830L1400 830L1400 150Z" fill="#37ce00"/>
<path d="M1074 150L1074 173L1066 197L1055 220L1045 244L1036 267L1025 291L1013 314L1000 338L986 361L972 384L960 408L949 431L938 455L928 478L920 502L914 525L908 549L906 572L904 596L903 619L904 642L907 666L911 689L918 713L927 736L939 760L955 783L967 807L967 830L1400 830L1400 150Z" fill="#3ace00"/>
<path d="M1077 150L1077 173L1069 197L1059 220L1049 244L1039 267L1029 291L1017 314L1004 338L990 361L976 384L964 408L952 431L941 455L932 478L924 502L917 525L912 549L909 572L907 596L906 619L908 642L910 666L914 689L921 713L930 736L942 760L957 783L970 807L970 830L1400 830L1400 150Z" fill="#3ecf00"/>
<path d="M1080 150L1080 173L1072 197L1062 220L1052 244L1042 267L1032 291L1021 314L1008 338L994 361L980 384L967 408L955 431L945 455L935 478L927 502L920 525L915 549L912 572L910 596L910 619L911 642L914 666L918 689L924 713L933 736L945 760L960 783L972 807L972 830L1400 830L1400 150Z" fill="#42cf00"/>
<path d="M1083 150L1083 173L1075 197L1065 220L1055 244L1045 267L1035 291L1024 314L1012 338L998 361L984 384L971 408L959 431L948 455L938 478L930 502L924 525L918 549L916 572L914 596L913 619L914 642L917 666L921 689L927 713L936 736L948 760L963 783L975 807L975 830L1400 830L1400 150Z" fill="#46d000"/>
<path d="M1086 150L1086 173L1078 197L1068 220L1058 244L1048 267L1039 291L1028 314L1016 338L1001 361L987 384L974 408L963 431L952 455L942 478L934 502L927 525L922 549L919 572L917 596L916 619L918 642L920 666L924 689L930 713L939 736L951 760L965 783L977 807L977 830L1400 830L1400 150Z" fill="#4bd100"/>
<path d="M1090 150L1090 173L1081 197L1071 220L1061 244L1052 267L1042 291L1032 314L1020 338L1005 361L991 384L978 408L966 431L955 455L945 478L937 502L930 525L925 549L922 572L921 596L920 619L921 642L924 666L927 689L934 713L942 736L953 760L968 783L980 807L980 830L1400 830L1400 150Z" fill="#4fd100"/>
<path d="M1093 150L1093 173L1085 197L1074 220L1064 244L1055 267L1045 291L1035 314L1024 338L1009 361L995 384L982 408L970 431L959 455L949 478L941 502L934 525L929 549L926 572L924 596L923 619L924 642L927 666L931 689L937 713L945 736L956 760L971 783L982 807L982 830L1400 830L1400 150Z" fill="#54d200"/>
<path d="M1096 150L1096 173L1088 197L1077 220L1067 244L1058 267L1049 291L1039 314L1028 338L1013 361L998 384L985 408L973 431L962 455L952 478L944 502L937 525L932 549L929 572L928 596L927 619L928 642L931 666L934 689L940 713L948 736L959 760L973 783L985 807L985 830L1400 830L1400 150Z" fill="#58d200"/>
<path d="M1099 150L1099 173L1091 197L1080 220L1070 244L1061 267L1052 291L1043 314L1032 338L1017 361L1002 384L989 408L977 431L966 455L956 478L948 502L941 525L936 549L933 572L931 596L930 619L931 642L934 666L938 689L943 713L952 736L962 760L976 783L988 807L988 830L1400 830L1400 150Z" fill="#5dd300"/>
<path d="M1102 150L1102 173L1094 197L1083 220L1073 244L1064 267L1055 291L1047 314L1036 338L1021 361L1006 384L992 408L980 431L969 455L959 478L951 502L944 525L939 549L936 572L935 596L934 619L935 642L937 666L941 689L947 713L955 736L965 760L979 783L990 807L990 830L1400 830L1400 150Z" fill="#62d400"/>
<path d="M1106 150L1106 173L1097 197L1086 220L1076 244L1067 267L1059 291L1050 314L1040 338L1024 361L1009 384L996 408L984 431L973 455L963 478L955 502L948 525L943 549L940 572L938 596L937 619L938 642L941 666L944 689L950 713L958 736L968 760L982 783L993 807L993 830L1400 830L1400 150Z" fill="#66d400"/>
<path d="M1109 150L1109 173L1101 197L1090 220L1080 244L1071 267L1062 291L1054 314L1044 338L1028 361L1013 384L999 408L987 431L976 455L966 478L958 502L951 525L946 549L943 572L942 596L941 619L942 642L944 666L948 689L953 713L961 736L971 760L984 783L995 807L995 830L1400 830L1400 150Z" fill="#6bd500"/>
<path d="M1113 150L1113 173L1104 197L1093 220L1083 244L1074 267L1066 291L1058 314L1048 338L1032 361L1017 384L1003 408L991 431L980 455L970 478L961 502L955 525L950 549L947 572L945 596L944 619L945 642L948 666L951 689L956 713L964 736L974 760L987 783L998 807L998 830L1400 830L1400 150Z" fill="#70d600"/>
<path d="M1117 150L1117 173L1108 197L1097 220L1087 244L1078 267L1070 291L1062 314L1052 338L1036 361L1020 384L1007 408L994 431L983 455L973 478L965 502L958 525L953 549L950 572L948 596L947 619L948 642L951 666L954 689L960 713L967 736L977 760L990 783L1000 807L1000 830L1400 830L1400 150Z" fill="#74d600"/>
<path d="M1121 150L1121 173L1112 197L1101 220L1091 244L1082 267L1073 291L1066 314L1056 338L1040 361L1024 384L1010 408L998 431L986 455L976 478L968 502L961 525L956 549L953 572L952 596L951 619L952 642L954 666L957 689L963 713L970 736L980 760L992 783L1003 807L1003 830L1400 830L1400 150Z" fill="#79d700"/>
<path d="M1125 150L1125 173L1116 197L1105 220L1095 244L1086 267L1077 291L1070 314L1060 338L1044 361L1028 384L1014 408L1001 431L990 455L979 478L971 502L965 525L959 549L957 572L955 596L954 619L955 642L957 666L960 689L966 713L973 736L982 760L995 783L1005 807L1005 830L1400 830L1400 150Z" fill="#7dd700"/>
<path d="M1130 150L1130 173L1121 197L1109 220L1099 244L1090 267L1081 291L1074 314L1064 338L1047 361L1031 384L1017 408L1004 431L993 455L983 478L974 502L968 525L963 549L960 572L958 596L957 619L958 642L960 666L963 689L969 713L976 736L985 760L997 783L1008 807L1008 830L1400 830L1400 150Z" fill="#82d800"/>
<path d="M1135 150L1135 173L1125 197L1114 220L1103 244L1094 267L1085 291L1078 314L1068 338L1051 361L1035 384L1020 408L1007 431L996 455L986 478L977 502L971 525L965 549L963 572L961 596L960 619L961 642L963 666L966 689L971 713L978 736L987 760L1000 783L1010 807L1010 830L1400 830L1400 150Z" fill="#86d900"/>
<path d="M1139 150L1139 173L1130 197L1118 220L1108 244L1098 267L1089 291L1082 314L1072 338L1055 361L1038 384L1024 408L1010 431L999 455L989 478L980 502L973 525L968 549L965 572L963 596L963 619L964 642L966 666L969 689L974 713L981 736L990 760L1002 783L1013 807L1013 830L1400 830L1400 150Z" fill="#8ad900"/>
<path d="M1144 150L1144 173L1135 197L1123 220L1112 244L1102 267L1093 291L1086 314L1075 338L1058 361L1041 384L1027 408L1014 431L1002 455L991 478L983 502L976 525L971 549L968 572L966 596L965 619L966 642L969 666L972 689L977 713L983 736L992 760L1005 783L1015 807L1015 830L1400 830L1400 150Z" fill="#8eda00"/>
<path d="M1150 150L1150 173L1140 197L1128 220L1117 244L1107 267L1098 291L1090 314L1079 338L1062 361L1045 384L1030 408L1017 431L1005 455L994 478L986 502L979 525L974 549L971 572L969 596L968 619L969 642L971 666L974 689L979 713L986 736L995 760L1007 783L1017 807L1017 830L1400 830L1400 150Z" fill="#92da00"/>
<path d="M1155 150L1155 173L1145 197L1133 220L1121 244L1111 267L1102 291L1094 314L1083 338L1065 361L1048 384L1033 408L1020 431L1008 455L997 478L989 502L982 525L977 549L974 572L972 596L971 619L972 642L974 666L977 689L982 713L988 736L997 760L1009 783L1020 807L1020 830L1400 830L1400 150Z" fill="#96db00"/>
<path d="M1160 150L1160 173L1151 197L1138 220L1126 244L1116 267L1106 291L1098 314L1087 338L1069 361L1052 384L1036 408L1023 431L1011 455L1000 478L992 502L985 525L979 549L977 572L975 596L974 619L975 642L977 666L980 689L984 713L991 736L999 760L1012 783L1022 807L1022 830L1400 830L1400 150Z" fill="#9adb00"/>
<path d="M1166 150L1166 173L1156 197L1143 220L1131 244L1121 267L1111 291L1102 314L1091 338L1073 361L1055 384L1040 408L1026 431L1014 455L1003 478L994 502L987 525L982 549L979 572L977 596L976 619L977 642L979 666L982 689L987 713L993 736L1002 760L1014 783L1024 807L1024 830L1400 830L1400 150Z" fill="#9edc00"/>
<path d="M1172 150L1172 173L1162 197L1149 220L1137 244L1125 267L1115 291L1106 314L1094 338L1076 361L1058 384L1043 408L1029 431L1016 455L1006 478L997 502L990 525L985 549L982 572L980 596L979 619L980 642L982 666L985 689L989 713L995 736L1004 760L1016 783L1026 807L1026 830L1400 830L1400 150Z" fill="#a1dd00"/>
<path d="M1178 150L1178 173L1168 197L1154 220L1142 244L1130 267L1120 291L1111 314L1098 338L1080 361L1062 384L1046 408L1032 431L1019 455L1008 478L1000 502L993 525L988 549L985 572L983 596L982 619L983 642L985 666L988 689L992 713L998 736L1006 760L1018 783L1029 807L1029 830L1400 830L1400 150Z" fill="#a5dd00"/>
<path d="M1184 150L1184 173L1174 197L1160 220L1147 244L1135 267L1125 291L1115 314L1102 338L1083 361L1065 384L1049 408L1035 431L1022 455L1011 478L1003 502L996 525L990 549L988 572L986 596L985 619L985 642L988 666L990 689L994 713L1000 736L1009 760L1021 783L1031 807L1031 830L1400 830L1400 150Z" fill="#a9de00"/>
<path d="M1190 150L1190 173L1180 197L1166 220L1153 244L1140 267L1129 291L1119 314L1106 338L1087 361L1069 384L1052 408L1038 431L1025 455L1014 478L1005 502L998 525L993 549L990 572L988 596L987 619L988 642L990 666L993 689L997 713L1003 736L1011 760L1023 783L1033 807L1033 830L1400 830L1400 150Z" fill="#adde00"/>
<path d="M1197 150L1197 173L1186 197L1171 220L1158 244L1145 267L1134 291L1123 314L1110 338L1091 361L1072 384L1055 408L1041 431L1028 455L1017 478L1008 502L1001 525L996 549L993 572L991 596L990 619L991 642L993 666L995 689L999 713L1005 736L1013 760L1025 783L1035 807L1035 830L1400 830L1400 150Z" fill="#b1df00"/>
<path d="M1203 150L1203 173L1192 197L1177 220L1163 244L1151 267L1138 291L1127 314L1114 338L1094 361L1075 384L1059 408L1044 431L1031 455L1020 478L1011 502L1004 525L999 549L996 572L994 596L993 619L994 642L996 666L998 689L1002 713L1007 736L1015 760L1027 783L1037 807L1037 830L1400 830L1400 150Z" fill="#b5df00"/>
<path d="M1209 150L1209 173L1198 197L1183 220L1169 244L1156 267L1143 291L1132 314L1117 338L1098 361L1079 384L1062 408L1047 431L1034 455L1023 478L1014 502L1007 525L1001 549L999 572L997 596L996 619L996 642L998 666L1001 689L1005 713L1010 736L1018 760L1030 783L1040 807L1040 830L1400 830L1400 150Z" fill="#b9e000"/>
<path d="M1215 150L1215 173L1204 197L1189 220L1174 244L1161 267L1148 291L1136 314L1121 338L1101 361L1082 384L1065 408L1050 431L1037 455L1025 478L1017 502L1010 525L1004 549L1001 572L999 596L999 619L999 642L1001 666L1003 689L1007 713L1012 736L1020 760L1032 783L1042 807L1042 830L1400 830L1400 150Z" fill="#bce000"/>
<path d="M1222 150L1222 173L1210 197L1195 220L1180 244L1166 267L1152 291L1140 314L1125 338L1105 361L1086 384L1068 408L1053 431L1040 455L1028 478L1019 502L1012 525L1007 549L1004 572L1002 596L1001 619L1002 642L1004 666L1006 689L1010 713L1015 736L1023 760L1034 783L1044 807L1044 830L1400 830L1400 150Z" fill="#bfe000"/>
<path d="M1228 150L1228 173L1216 197L1200 220L1185 244L1171 267L1157 291L1144 314L1129 338L1108 361L1089 384L1071 408L1056 431L1043 455L1031 478L1022 502L1015 525L1010 549L1007 572L1005 596L1004 619L1005 642L1007 666L1009 689L1012 713L1017 736L1025 760L1037 783L1047 807L1047 830L1400 830L1400 150Z" fill="#c2e000"/>
<path d="M1234 150L1234 173L1222 197L1206 220L1191 244L1176 267L1162 291L1148 314L1132 338L1112 361L1092 384L1075 408L1059 431L1046 455L1034 478L1025 502L1018 525L1013 549L1010 572L1008 596L1007 619L1008 642L1009 666L1012 689L1015 713L1020 736L1027 760L1039 783L1049 807L1049 830L1400 830L1400 150Z" fill="#c5e100"/>
<path d="M1240 150L1240 173L1228 197L1212 220L1196 244L1181 267L1166 291L1152 314L1136 338L1115 361L1096 384L1078 408L1062 431L1049 455L1037 478L1028 502L1021 525L1015 549L1013 572L1011 596L1010 619L1010 642L1012 666L1014 689L1018 713L1022 736L1030 760L1041 783L1051 807L1051 830L1400 830L1400 150Z" fill="#c8e100"/>
<path d="M1246 150L1246 173L1234 197L1217 220L1201 244L1186 267L1171 291L1156 314L1140 338L1119 361L1099 384L1081 408L1065 431L1051 455L1040 478L1031 502L1024 525L1018 549L1015 572L1014 596L1013 619L1013 642L1015 666L1017 689L1020 713L1025 736L1032 760L1044 783L1054 807L1054 830L1400 830L1400 150Z" fill="#cbe100"/>
<path d="M1252 150L1252 173L1240 197L1223 220L1207 244L1191 267L1175 291L1161 314L1144 338L1123 361L1103 384L1084 408L1068 431L1055 455L1043 478L1034 502L1027 525L1021 549L1018 572L1016 596L1016 619L1016 642L1018 666L1020 689L1023 713L1028 736L1035 760L1046 783L1056 807L1056 830L1400 830L1400 150Z" fill="#cee100"/>
<path d="M1258 150L1258 173L1246 197L1228 220L1212 244L1195 267L1180 291L1164 314L1147 338L1126 361L1106 384L1088 408L1071 431L1058 455L1046 478L1037 502L1030 525L1024 549L1021 572L1019 596L1019 619L1019 642L1021 666L1023 689L1026 713L1030 736L1037 760L1049 783L1059 807L1059 830L1400 830L1400 150Z" fill="#d2e100"/>
<path d="M1264 150L1264 173L1251 197L1234 220L1217 244L1200 267L1184 291L1168 314L1151 338L1130 361L1109 384L1091 408L1074 431L1061 455L1049 478L1040 502L1033 525L1027 549L1024 572L1022 596L1022 619L1022 642L1024 666L1026 689L1029 713L1033 736L1040 760L1051 783L1061 807L1061 830L1400 830L1400 150Z" fill="#d5e100"/>
<path d="M1270 150L1270 173L1257 197L1239 220L1221 244L1205 267L1188 291L1172 314L1154 338L1133 361L1113 384L1094 408L1077 431L1064 455L1052 478L1043 502L1036 525L1030 549L1027 572L1025 596L1025 619L1025 642L1027 666L1029 689L1031 713L1036 736L1043 760L1054 783L1064 807L1064 830L1400 830L1400 150Z" fill="#d8e100"/>
<path d="M1275 150L1275 173L1262 197L1244 220L1226 244L1209 267L1192 291L1176 314L1158 338L1137 361L1116 384L1097 408L1081 431L1067 455L1055 478L1046 502L1039 525L1033 549L1030 572L1028 596L1028 619L1028 642L1030 666L1032 689L1034 713L1038 736L1045 760L1057 783L1067 807L1067 830L1400 830L1400 150Z" fill="#dbe200"/>
<path d="M1280 150L1280 173L1267 197L1249 220L1231 244L1213 267L1196 291L1180 314L1162 338L1140 361L1120 384L1101 408L1084 431L1070 455L1058 478L1049 502L1042 525L1036 549L1033 572L1032 596L1031 619L1031 642L1033 666L1035 689L1037 713L1041 736L1048 760L1059 783L1069 807L1069 830L1400 830L1400 150Z" fill="#dee200"/>
<path d="M1285 150L1285 173L1272 197L1253 220L1235 244L1218 267L1200 291L1184 314L1165 338L1143 361L1123 384L1104 408L1087 431L1073 455L1061 478L1052 502L1045 525L1039 549L1037 572L1035 596L1034 619L1034 642L1036 666L1038 689L1040 713L1044 736L1051 760L1062 783L1072 807L1072 830L1400 830L1400 150Z" fill="#e1e200"/>
<path d="M1290 150L1290 173L1276 197L1258 220L1239 244L1222 267L1204 291L1187 314L1169 338L1147 361L1126 384L1107 408L1090 431L1077 455L1065 478L1055 502L1048 525L1043 549L1040 572L1038 596L1037 619L1038 642L1039 666L1041 689L1043 713L1047 736L1054 760L1065 783L1075 807L1075 830L1400 830L1400 150Z" fill="#e4e200"/>
<path d="M1295 150L1295 173L1281 197L1262 220L1244 244L1226 267L1208 291L1191 314L1172 338L1151 361L1130 384L1111 408L1094 431L1080 455L1068 478L1059 502L1052 525L1046 549L1043 572L1041 596L1040 619L1041 642L1042 666L1044 689L1047 713L1051 736L1057 760L1068 783L1078 807L1078 830L1400 830L1400 150Z" fill="#e5de00"/>
<path d="M1300 150L1300 173L1286 197L1266 220L1248 244L1230 267L1212 291L1195 314L1176 338L1154 361L1133 384L1114 408L1097 431L1084 455L1072 478L1062 502L1055 525L1050 549L1047 572L1045 596L1044 619L1045 642L1046 666L1048 689L1050 713L1054 736L1060 760L1072 783L1081 807L1081 830L1400 830L1400 150Z" fill="#e6db00"/>
<path d="M1304 150L1304 173L1290 197L1271 220L1252 244L1233 267L1216 291L1198 314L1179 338L1158 361L1137 384L1118 408L1101 431L1087 455L1075 478L1066 502L1059 525L1053 549L1050 572L1048 596L1048 619L1048 642L1049 666L1051 689L1054 713L1057 736L1064 760L1075 783L1085 807L1085 830L1400 830L1400 150Z" fill="#e6d700"/>
<path d="M1308 150L1308 173L1294 197L1275 220L1256 244L1237 267L1219 291L1202 314L1183 338L1161 361L1140 384L1121 408L1104 431L1091 455L1079 478L1070 502L1062 525L1057 549L1054 572L1052 596L1051 619L1052 642L1053 666L1055 689L1057 713L1061 736L1067 760L1078 783L1088 807L1088 830L1400 830L1400 150Z" fill="#e7d400"/>
<path d="M1313 150L1313 173L1298 197L1278 220L1259 244L1241 267L1222 291L1205 314L1186 338L1164 361L1144 384L1125 408L1108 431L1094 455L1082 478L1073 502L1066 525L1060 549L1057 572L1055 596L1055 619L1055 642L1057 666L1058 689L1061 713L1064 736L1071 760L1082 783L1091 807L1091 830L1400 830L1400 150Z" fill="#e8d000"/>
<path d="M1317 150L1317 173L1302 197L1282 220L1263 244L1244 267L1226 291L1208 314L1189 338L1167 361L1147 384L1128 408L1111 431L1098 455L1086 478L1077 502L1069 525L1064 549L1061 572L1059 596L1058 619L1059 642L1060 666L1062 689L1064 713L1068 736L1074 760L1085 783L1095 807L1095 830L1400 830L1400 150Z" fill="#e9cd00"/>
<path d="M1321 150L1321 173L1306 197L1286 220L1266 244L1247 267L1229 291L1211 314L1192 338L1171 361L1150 384L1132 408L1115 431L1101 455L1090 478L1081 502L1073 525L1067 549L1065 572L1063 596L1062 619L1063 642L1064 666L1065 689L1068 713L1071 736L1078 760L1089 783L1098 807L1098 830L1400 830L1400 150Z" fill="#e9c900"/>
<path d="M1324 150L1324 173L1309 197L1289 220L1269 244L1250 267L1232 291L1214 314L1195 338L1174 361L1154 384L1135 408L1118 431L1105 455L1093 478L1084 502L1077 525L1071 549L1068 572L1067 596L1066 619L1066 642L1067 666L1069 689L1071 713L1075 736L1081 760L1092 783L1102 807L1102 830L1400 830L1400 150Z" fill="#eac600"/>
<path d="M1328 150L1328 173L1313 197L1293 220L1273 244L1254 267L1235 291L1217 314L1198 338L1177 361L1157 384L1138 408L1122 431L1108 455L1097 478L1088 502L1081 525L1075 549L1072 572L1070 596L1069 619L1070 642L1071 666L1073 689L1075 713L1079 736L1085 760L1096 783L1105 807L1105 830L1400 830L1400 150Z" fill="#ebc200"/>
<path d="M1332 150L1332 173L1317 197L1296 220L1276 244L1257 267L1238 291L1220 314L1201 338L1180 361L1160 384L1142 408L1125 431L1112 455L1101 478L1092 502L1084 525L1079 549L1076 572L1074 596L1073 619L1074 642L1075 666L1077 689L1079 713L1082 736L1089 760L1100 783L1109 807L1109 830L1400 830L1400 150Z" fill="#ecbf00"/>
<path d="M1336 150L1336 173L1320 197L1299 220L1279 244L1260 267L1241 291L1223 314L1204 338L1183 361L1164 384L1145 408L1129 431L1116 455L1104 478L1096 502L1088 525L1082 549L1080 572L1078 596L1077 619L1078 642L1079 666L1080 689L1083 713L1086 736L1092 760L1103 783L1113 807L1113 830L1400 830L1400 150Z" fill="#ecbb00"/>
<path d="M1339 150L1339 173L1324 197L1303 220L1282 244L1263 267L1244 291L1226 314L1208 338L1187 361L1167 384L1149 408L1132 431L1119 455L1108 478L1100 502L1092 525L1086 549L1083 572L1082 596L1081 619L1081 642L1083 666L1084 689L1086 713L1090 736L1096 760L1107 783L1117 807L1117 830L1400 830L1400 150Z" fill="#edb800"/>
<path d="M1343 150L1343 173L1327 197L1306 220L1286 244L1266 267L1247 291L1229 314L1211 338L1190 361L1170 384L1152 408L1136 431L1123 455L1112 478L1103 502L1096 525L1090 549L1087 572L1086 596L1085 619L1085 642L1087 666L1088 689L1090 713L1094 736L1100 760L1111 783L1121 807L1121 830L1400 830L1400 150Z" fill="#eeb400"/>
<path d="M1347 150L1347 173L1331 197L1309 220L1289 244L1269 267L1250 291L1233 314L1214 338L1193 361L1174 384L1156 408L1140 431L1127 455L1116 478L1107 502L1100 525L1094 549L1091 572L1090 596L1089 619L1089 642L1090 666L1092 689L1094 713L1098 736L1104 760L1115 783L1125 807L1125 830L1400 830L1400 150Z" fill="#eeb000"/>
<path d="M1350 150L1350 173L1334 197L1313 220L1292 244L1272 267L1254 291L1236 314L1217 338L1196 361L1177 384L1159 408L1143 431L1131 455L1120 478L1111 502L1104 525L1098 549L1095 572L1093 596L1093 619L1093 642L1094 666L1096 689L1098 713L1102 736L1108 760L1119 783L1129 807L1129 830L1400 830L1400 150Z" fill="#efac00"/>
<path d="M1354 150L1354 173L1338 197L1316 220L1296 244L1276 267L1257 291L1239 314L1220 338L1200 361L1181 384L1163 408L1147 431L1135 455L1124 478L1115 502L1108 525L1102 549L1099 572L1097 596L1097 619L1097 642L1098 666L1100 689L1102 713L1106 736L1113 760L1123 783L1133 807L1133 830L1400 830L1400 150Z" fill="#efa800"/>
<path d="M1358 150L1358 173L1342 197L1320 220L1299 244L1279 267L1260 291L1242 314L1223 338L1203 361L1184 384L1167 408L1151 431L1139 455L1128 478L1120 502L1112 525L1106 549L1103 572L1102 596L1101 619L1101 642L1103 666L1104 689L1107 713L1110 736L1117 760L1128 783L1137 807L1137 830L1400 830L1400 150Z" fill="#f0a500"/>
<path d="M1362 150L1362 173L1346 197L1324 220L1303 244L1282 267L1263 291L1246 314L1227 338L1207 361L1188 384L1171 408L1155 431L1143 455L1132 478L1124 502L1116 525L1110 549L1107 572L1106 596L1105 619L1105 642L1107 666L1108 689L1111 713L1114 736L1121 760L1132 783L1142 807L1142 830L1400 830L1400 150Z" fill="#f0a100"/>
<path d="M1366 150L1366 173L1350 197L1327 220L1306 244L1286 267L1267 291L1249 314L1230 338L1210 361L1192 384L1175 408L1159 431L1147 455L1137 478L1128 502L1120 525L1114 549L1111 572L1110 596L1109 619L1110 642L1111 666L1112 689L1115 713L1119 736L1125 760L1136 783L1146 807L1146 830L1400 830L1400 150Z" fill="#f09d00"/>
<path d="M1370 150L1370 173L1354 197L1331 220L1310 244L1290 267L1271 291L1253 314L1234 338L1214 361L1196 384L1179 408L1163 431L1151 455L1141 478L1132 502L1125 525L1119 549L1116 572L1114 596L1113 619L1114 642L1115 666L1117 689L1119 713L1123 736L1130 760L1141 783L1151 807L1151 830L1400 830L1400 150Z" fill="#f19900"/>
<path d="M1375 150L1375 173L1358 197L1335 220L1314 244L1294 267L1274 291L1256 314L1238 338L1218 361L1200 384L1183 408L1168 431L1155 455L1145 478L1137 502L1129 525L1123 549L1120 572L1118 596L1117 619L1118 642L1119 666L1121 689L1124 713L1128 736L1134 760L1146 783L1155 807L1155 830L1400 830L1400 150Z" fill="#f19500"/>
<path d="M1379 150L1379 173L1362 197L1340 220L1318 244L1298 267L1278 291L1260 314L1242 338L1222 361L1204 384L1187 408L1172 431L1160 455L1150 478L1141 502L1133 525L1127 549L1124 572L1122 596L1122 619L1122 642L1123 666L1125 689L1128 713L1132 736L1139 760L1150 783L1160 807L1160 830L1400 830L1400 150Z" fill="#f19100"/>
<path d="M1384 150L1384 173L1367 197L1344 220L1323 244L1302 267L1282 291L1264 314L1246 338L1226 361L1208 384L1191 408L1176 431L1164 455L1154 478L1146 502L1138 525L1131 549L1128 572L1127 596L1126 619L1126 642L1128 666L1130 689L1132 713L1137 736L1144 760L1155 783L1165 807L1165 830L1400 830L1400 150Z" fill="#f28e00"/>
<path d="M1389 150L1389 173L1372 197L1349 220L1327 244L1306 267L1287 291L1268 314L1250 338L1230 361L1212 384L1196 408L1181 431L1169 455L1159 478L1150 502L1142 525L1136 549L1133 572L1131 596L1130 619L1131 642L1132 666L1134 689L1137 713L1141 736L1149 760L1160 783L1170 807L1170 830L1400 830L1400 150Z" fill="#f28a00"/>
<path d="M1394 150L1394 173L1377 197L1354 220L1332 244L1311 267L1291 291L1273 314L1254 338L1235 361L1217 384L1201 408L1186 431L1174 455L1163 478L1155 502L1147 525L1140 549L1137 572L1135 596L1135 619L1135 642L1137 666L1138 689L1142 713L1146 736L1154 760L1165 783L1175 807L1175 830L1400 830L1400 150Z" fill="#f38600"/>
<path d="M1400 150L1400 173L1383 197L1359 220L1337 244L1316 267L1296 291L1278 314L1259 338L1240 361L1222 384L1205 408L1191 431L1179 455L1168 478L1159 502L1151 525L1145 549L1142 572L1140 596L1139 619L1140 642L1141 666L1143 689L1146 713L1151 736L1159 760L1170 783L1180 807L1180 830L1400 830L1400 150Z" fill="#f38200"/>
<path d="M1403 150L1403 173L1386 197L1363 220L1340 244L1319 267L1299 291L1280 314L1262 338L1242 361L1225 384L1208 408L1194 431L1182 455L1171 478L1162 502L1154 525L1148 549L1144 572L1142 596L1142 619L1142 642L1144 666L1146 689L1149 713L1154 736L1162 760L1173 783L1183 807L1183 830L1400 830L1400 150Z" fill="#f37f00"/>
<path d="M1407 150L1407 173L1390 197L1366 220L1344 244L1322 267L1302 291L1283 314L1265 338L1246 361L1228 384L1212 408L1197 431L1185 455L1174 478L1165 502L1157 525L1150 549L1147 572L1145 596L1144 619L1145 642L1146 666L1148 689L1152 713L1157 736L1165 760L1176 783L1187 807L1187 830L1400 830L1400 150Z" fill="#f47d00"/>
<path d="M1411 150L1411 173L1393 197L1370 220L1347 244L1326 267L1306 291L1287 314L1268 338L1249 361L1231 384L1215 408L1200 431L1188 455L1177 478L1168 502L1160 525L1153 549L1150 572L1148 596L1147 619L1148 642L1149 666L1151 689L1155 713L1160 736L1168 760L1180 783L1190 807L1190 830L1400 830L1400 150Z" fill="#f47a00"/>
<path d="M1415 150L1415 173L1397 197L1374 220L1351 244L1330 267L1309 291L1290 314L1271 338L1252 361L1235 384L1218 408L1204 431L1191 455L1180 478L1171 502L1163 525L1156 549L1153 572L1151 596L1150 619L1150 642L1152 666L1154 689L1158 713L1163 736L1171 760L1183 783L1194 807L1194 830L1400 830L1400 150Z" fill="#f47700"/>
<path d="M1419 150L1419 173L1402 197L1378 220L1355 244L1334 267L1313 291L1294 314L1275 338L1256 361L1238 384L1222 408L1207 431L1195 455L1184 478L1174 502L1166 525L1159 549L1156 572L1153 596L1152 619L1153 642L1155 666L1157 689L1161 713L1167 736L1175 760L1187 783L1198 807L1198 830L1400 830L1400 150Z" fill="#f57500"/>
<path d="M1423 150L1423 173L1406 197L1382 220L1360 244L1338 267L1317 291L1297 314L1278 338L1259 361L1242 384L1226 408L1211 431L1198 455L1187 478L1178 502L1169 525L1162 549L1159 572L1156 596L1155 619L1156 642L1157 666L1160 689L1164 713L1170 736L1179 760L1191 783L1201 807L1201 830L1400 830L1400 150Z" fill="#f57200"/>
<path d="M1428 150L1428 173L1410 197L1387 220L1364 244L1342 267L1321 291L1301 314L1282 338L1263 361L1246 384L1230 408L1215 431L1202 455L1191 478L1181 502L1172 525L1165 549L1161 572L1159 596L1158 619L1159 642L1160 666L1163 689L1167 713L1173 736L1182 760L1195 783L1205 807L1205 830L1400 830L1400 150Z" fill="#f57000"/>
<path d="M1432 150L1432 173L1415 197L1391 220L1369 244L1347 267L1325 291L1305 314L1286 338L1267 361L1250 384L1234 408L1219 431L1206 455L1194 478L1184 502L1175 525L1168 549L1164 572L1162 596L1161 619L1162 642L1163 666L1166 689L1170 713L1177 736L1186 760L1199 783L1210 807L1210 830L1400 830L1400 150Z" fill="#f66d00"/>
<path d="M1437 150L1437 173L1420 197L1396 220L1373 244L1351 267L1330 291L1309 314L1289 338L1271 361L1254 384L1238 408L1223 431L1210 455L1198 478L1187 502L1178 525L1171 549L1167 572L1165 596L1164 619L1164 642L1166 666L1169 689L1174 713L1180 736L1190 760L1203 783L1214 807L1214 830L1400 830L1400 150Z" fill="#f66a00"/>
<path d="M1442 150L1442 173L1424 197L1401 220L1378 244L1356 267L1334 291L1313 314L1293 338L1275 361L1258 384L1242 408L1227 431L1213 455L1201 478L1191 502L1182 525L1174 549L1170 572L1168 596L1167 619L1167 642L1169 666L1172 689L1177 713L1184 736L1194 760L1207 783L1218 807L1218 830L1400 830L1400 150Z" fill="#f66800"/>
<path d="M1447 150L1447 173L1429 197L1406 220L1383 244L1360 267L1339 291L1317 314L1297 338L1279 361L1262 384L1246 408L1231 431L1217 455L1205 478L1194 502L1185 525L1177 549L1173 572L1171 596L1170 619L1170 642L1172 666L1175 689L1180 713L1188 736L1197 760L1211 783L1222 807L1222 830L1400 830L1400 150Z" fill="#f66500"/>
<path d="M1452 150L1452 173L1434 197L1411 220L1388 244L1365 267L1343 291L1321 314L1301 338L1283 361L1266 384L1250 408L1235 431L1221 455L1208 478L1198 502L1188 525L1181 549L1177 572L1174 596L1173 619L1173 642L1175 666L1178 689L1183 713L1191 736L1201 760L1215 783L1227 807L1227 830L1400 830L1400 150Z" fill="#f76200"/>
<path d="M1456 150L1456 173L1439 197L1416 220L1393 244L1370 267L1348 291L1326 314L1306 338L1287 361L1270 384L1254 408L1239 431L1225 455L1212 478L1201 502L1191 525L1184 549L1180 572L1177 596L1176 619L1176 642L1178 666L1181 689L1187 713L1195 736L1205 760L1219 783L1231 807L1231 830L1400 830L1400 150Z" fill="#f76000"/>
<path d="M1461 150L1461 173L1444 197L1421 220L1397 244L1375 267L1352 291L1330 314L1310 338L1291 361L1274 384L1258 408L1243 431L1229 455L1216 478L1205 502L1195 525L1187 549L1183 572L1180 596L1178 619L1179 642L1181 666L1184 689L1190 713L1199 736L1209 760L1224 783L1235 807L1235 830L1400 830L1400 150Z" fill="#f75d00"/>
<path d="M1466 150L1466 173L1449 197L1426 220L1402 244L1380 267L1357 291L1334 314L1314 338L1296 361L1279 384L1262 408L1247 431L1233 455L1219 478L1208 502L1198 525L1190 549L1186 572L1183 596L1182 619L1182 642L1184 666L1187 689L1194 713L1202 736L1213 760L1228 783L1240 807L1240 830L1400 830L1400 150Z" fill="#f85a00"/>
<path d="M1471 150L1471 173L1454 197L1431 220L1407 244L1384 267L1362 291L1339 314L1318 338L1300 361L1283 384L1267 408L1251 431L1237 455L1223 478L1211 502L1201 525L1193 549L1189 572L1186 596L1185 619L1185 642L1187 666L1190 689L1197 713L1206 736L1217 760L1232 783L1244 807L1244 830L1400 830L1400 150Z" fill="#f85800"/>
<path d="M1476 150L1476 173L1459 197L1436 220L1412 244L1389 267L1366 291L1343 314L1322 338L1304 361L1287 384L1271 408L1255 431L1241 455L1227 478L1215 502L1205 525L1197 549L1192 572L1189 596L1188 619L1188 642L1190 666L1194 689L1200 713L1210 736L1221 760L1236 783L1249 807L1249 830L1400 830L1400 150Z" fill="#f85500"/>
<path d="M1481 150L1481 173L1464 197L1441 220L1417 244L1394 267L1371 291L1348 314L1327 338L1308 361L1291 384L1275 408L1259 431L1244 455L1230 478L1218 502L1208 525L1200 549L1195 572L1192 596L1191 619L1191 642L1194 666L1197 689L1204 713L1214 736L1225 760L1240 783L1253 807L1253 830L1400 830L1400 150Z" fill="#f95300"/>
<path d="M1486 150L1486 173L1469 197L1445 220L1422 244L1399 267L1376 291L1352 314L1331 338L1312 361L1295 384L1279 408L1263 431L1248 455L1234 478L1221 502L1211 525L1203 549L1198 572L1195 596L1194 619L1194 642L1197 666L1200 689L1207 713L1217 736L1229 760L1245 783L1257 807L1257 830L1400 830L1400 150Z" fill="#f95000"/>
<path d="M1491 150L1491 173L1474 197L1450 220L1427 244L1404 267L1380 291L1356 314L1335 338L1316 361L1299 384L1282 408L1267 431L1251 455L1237 478L1225 502L1214 525L1206 549L1202 572L1198 596L1197 619L1198 642L1200 666L1203 689L1211 713L1221 736L1233 760L1249 783L1262 807L1262 830L1400 830L1400 150Z" fill="#f94d00"/>
<path d="M1495 150L1495 173L1478 197L1455 220L1432 244L1408 267L1385 291L1361 314L1339 338L1320 361L1303 384L1286 408L1270 431L1255 455L1240 478L1228 502L1218 525L1209 549L1205 572L1201 596L1200 619L1201 642L1203 666L1206 689L1214 713L1225 736L1237 760L1253 783L1266 807L1266 830L1400 830L1400 150Z" fill="#fa4b00"/>
<path d="M1500 150L1500 173L1483 197L1460 220L1436 244L1413 267L1389 291L1365 314L1343 338L1324 361L1307 384L1290 408L1274 431L1258 455L1244 478L1231 502L1221 525L1213 549L1208 572L1204 596L1203 619L1204 642L1206 666L1210 689L1218 713L1228 736L1241 760L1257 783L1270 807L1270 830L1400 830L1400 150Z" fill="#fa4800"/>
<path d="M1504 150L1504 173L1487 197L1464 220L1440 244L1417 267L1393 291L1369 314L1347 338L1328 361L1310 384L1293 408L1277 431L1261 455L1246 478L1234 502L1224 525L1215 549L1211 572L1207 596L1206 619L1207 642L1209 666L1213 689L1221 713L1231 736L1244 760L1260 783L1274 807L1274 830L1400 830L1400 150Z" fill="#fa4600"/>
<path d="M1508 150L1508 173L1491 197L1468 220L1444 244L1421 267L1397 291L1373 314L1351 338L1331 361L1313 384L1296 408L1280 431L1264 455L1249 478L1237 502L1226 525L1218 549L1213 572L1210 596L1209 619L1209 642L1212 666L1216 689L1224 713L1235 736L1247 760L1264 783L1277 807L1277 830L1400 830L1400 150Z" fill="#fa4400"/>
<path d="M1512 150L1512 173L1495 197L1472 220L1448 244L1425 267L1401 291L1376 314L1354 338L1335 361L1316 384L1299 408L1283 431L1267 455L1252 478L1240 502L1229 525L1221 549L1216 572L1213 596L1211 619L1212 642L1215 666L1218 689L1227 713L1238 736L1251 760L1267 783L1281 807L1281 830L1400 830L1400 150Z" fill="#fb4200"/>
<path d="M1516 150L1516 173L1499 197L1476 220L1452 244L1429 267L1405 291L1380 314L1358 338L1338 361L1320 384L1302 408L1285 431L1270 455L1255 478L1242 502L1232 525L1224 549L1219 572L1216 596L1214 619L1215 642L1218 666L1221 689L1230 713L1241 736L1254 760L1271 783L1284 807L1284 830L1400 830L1400 150Z" fill="#fb3f00"/>
<path d="M1520 150L1520 173L1503 197L1480 220L1456 244L1432 267L1409 291L1384 314L1362 338L1342 361L1323 384L1305 408L1288 431L1273 455L1258 478L1245 502L1235 525L1227 549L1222 572L1218 596L1217 619L1218 642L1220 666L1224 689L1233 713L1244 736L1257 760L1274 783L1288 807L1288 830L1400 830L1400 150Z" fill="#fb3d00"/>
<path d="M1524 150L1524 173L1507 197L1484 220L1460 244L1436 267L1413 291L1388 314L1366 338L1345 361L1326 384L1308 408L1291 431L1275 455L1260 478L1248 502L1238 525L1229 549L1225 572L1221 596L1220 619L1221 642L1223 666L1227 689L1236 713L1247 736L1261 760L1278 783L1292 807L1292 830L1400 830L1400 150Z" fill="#fb3b00"/>
<path d="M1528 150L1528 173L1511 197L1488 220L1464 244L1440 267L1416 291L1392 314L1369 338L1349 361L1329 384L1311 408L1294 431L1278 455L1263 478L1251 502L1240 525L1232 549L1228 572L1224 596L1223 619L1224 642L1226 666L1230 689L1239 713L1251 736L1264 760L1281 783L1295 807L1295 830L1400 830L1400 150Z" fill="#fb3900"/>
<path d="M1532 150L1532 173L1515 197L1492 220L1468 244L1444 267L1420 291L1396 314L1373 338L1352 361L1332 384L1314 408L1297 431L1281 455L1266 478L1253 502L1243 525L1235 549L1230 572L1227 596L1226 619L1227 642L1229 666L1233 689L1242 713L1254 736L1267 760L1285 783L1299 807L1299 830L1400 830L1400 150Z" fill="#fc3700"/>
<path d="M1536 150L1536 173L1519 197L1496 220L1472 244L1448 267L1424 291L1400 314L1377 338L1356 361L1336 384L1317 408L1300 431L1284 455L1269 478L1256 502L1246 525L1238 549L1233 572L1230 596L1228 619L1229 642L1232 666L1236 689L1245 713L1257 736L1271 760L1288 783L1302 807L1302 830L1400 830L1400 150Z" fill="#fc3500"/>
<path d="M1540 150L1540 173L1523 197L1500 220L1476 244L1452 267L1428 291L1404 314L1381 338L1359 361L1339 384L1320 408L1302 431L1286 455L1271 478L1259 502L1249 525L1241 549L1236 572L1233 596L1231 619L1232 642L1235 666L1239 689L1248 713L1260 736L1274 760L1292 783L1306 807L1306 830L1400 830L1400 150Z" fill="#fc3200"/>
<path d="M1544 150L1544 173L1527 197L1504 220L1480 244L1456 267L1432 291L1408 314L1385 338L1363 361L1342 384L1323 408L1305 431L1289 455L1274 478L1262 502L1252 525L1244 549L1239 572L1236 596L1234 619L1235 642L1238 666L1243 689L1252 713L1264 736L1278 760L1295 783L1310 807L1310 830L1400 830L1400 150Z" fill="#fc3000"/>
<path d="M1548 150L1548 173L1531 197L1508 220L1484 244L1460 267L1436 291L1412 314L1389 338L1366 361L1345 384L1326 408L1308 431L1292 455L1277 478L1264 502L1254 525L1246 549L1242 572L1239 596L1237 619L1238 642L1241 666L1246 689L1255 713L1267 736L1281 760L1299 783L1313 807L1313 830L1400 830L1400 150Z" fill="#fc2e00"/>
<path d="M1552 150L1552 173L1535 197L1512 220L1488 244L1464 267L1440 291L1416 314L1393 338L1370 361L1348 384L1329 408L1311 431L1294 455L1279 478L1267 502L1257 525L1249 549L1245 572L1242 596L1240 619L1241 642L1244 666L1249 689L1258 713L1270 736L1284 760L1302 783L1317 807L1317 830L1400 830L1400 150Z" fill="#fd2c00"/>
<path d="M1556 150L1556 173L1539 197L1516 220L1492 244L1468 267L1444 291L1420 314L1397 338L1373 361L1351 384L1332 408L1313 431L1297 455L1282 478L1270 502L1260 525L1252 549L1248 572L1245 596L1243 619L1244 642L1247 666L1252 689L1261 713L1273 736L1288 760L1306 783L1320 807L1320 830L1400 830L1400 150Z" fill="#fd2a00"/>
<path d="M1560 150L1560 173L1543 197L1520 220L1496 244L1472 267L1448 291L1424 314L1401 338L1377 361L1355 384L1334 408L1316 431L1300 455L1285 478L1273 502L1263 525L1255 549L1251 572L1248 596L1246 619L1247 642L1250 666L1255 689L1264 713L1277 736L1291 760L1309 783L1324 807L1324 830L1400 830L1400 150Z" fill="#fd2800"/>
<path d="M1564 150L1564 173L1547 197L1524 220L1500 244L1476 267L1452 291L1428 314L1404 338L1380 361L1358 384L1337 408L1319 431L1302 455L1287 478L1275 502L1265 525L1258 549L1254 572L1251 596L1249 619L1250 642L1254 666L1258 689L1268 713L1280 736L1294 760L1313 783L1328 807L1328 830L1400 830L1400 150Z" fill="#fd2500"/>
<path d="M1568 150L1568 173L1551 197L1528 220L1504 244L1480 267L1457 291L1432 314L1409 338L1384 361L1361 384L1340 408L1321 431L1305 455L1290 478L1278 502L1268 525L1261 549L1257 572L1254 596L1252 619L1253 642L1257 666L1261 689L1271 713L1283 736L1298 760L1316 783L1331 807L1331 830L1400 830L1400 150Z" fill="#fd2300"/>
<path d="M1572 150L1572 173L1555 197L1532 220L1508 244L1484 267L1461 291L1437 314L1413 338L1387 361L1364 384L1343 408L1324 431L1307 455L1292 478L1281 502L1271 525L1264 549L1259 572L1257 596L1255 619L1256 642L1260 666L1265 689L1274 713L1287 736L1301 760L1320 783L1335 807L1335 830L1400 830L1400 150Z" fill="#fe2100"/>
<path d="M1576 150L1576 173L1559 197L1536 220L1512 244L1488 267L1465 291L1441 314L1417 338L1391 361L1367 384L1346 408L1327 431L1310 455L1295 478L1283 502L1274 525L1267 549L1262 572L1260 596L1258 619L1260 642L1263 666L1268 689L1277 713L1290 736L1305 760L1323 783L1338 807L1338 830L1400 830L1400 150Z" fill="#fe1f00"/>
<path d="M1580 150L1580 173L1563 197L1540 220L1516 244L1492 267L1469 291L1445 314L1421 338L1394 361L1370 384L1348 408L1329 431L1313 455L1298 478L1286 502L1277 525L1269 549L1265 572L1263 596L1261 619L1263 642L1266 666L1271 689L1281 713L1293 736L1308 760L1327 783L1342 807L1342 830L1400 830L1400 150Z" fill="#fe1d00"/>
<path d="M1584 150L1584 173L1567 197L1544 220L1520 244L1497 267L1473 291L1449 314L1425 338L1398 361L1373 384L1351 408L1332 431L1315 455L1300 478L1289 502L1279 525L1272 549L1268 572L1266 596L1264 619L1266 642L1269 666L1274 689L1284 713L1296 736L1311 760L1330 783L1346 807L1346 830L1400 830L1400 150Z" fill="#fe1b00"/>
<path d="M1588 150L1588 173L1571 197L1548 220L1524 244L1501 267L1477 291L1454 314L1429 338L1401 361L1376 384L1354 408L1334 431L1317 455L1303 478L1291 502L1282 525L1275 549L1271 572L1269 596L1268 619L1269 642L1272 666L1278 689L1287 713L1300 736L1315 760L1334 783L1349 807L1349 830L1400 830L1400 150Z" fill="#fe1800"/>
<path d="M1592 150L1592 173L1575 197L1552 220L1528 244L1505 267L1481 291L1458 314L1433 338L1405 361L1379 384L1357 408L1337 431L1320 455L1305 478L1294 502L1285 525L1278 549L1274 572L1272 596L1271 619L1272 642L1276 666L1281 689L1290 713L1303 736L1318 760L1337 783L1353 807L1353 830L1400 830L1400 150Z" fill="#ff1600"/>
<path d="M1596 150L1596 173L1579 197L1556 220L1532 244L1509 267L1485 291L1462 314L1437 338L1409 361L1382 384L1359 408L1339 431L1322 455L1308 478L1297 502L1288 525L1281 549L1277 572L1275 596L1274 619L1275 642L1279 666L1284 689L1294 713L1306 736L1322 760L1341 783L1356 807L1356 830L1400 830L1400 150Z" fill="#ff1400"/>
<path d="M1600 150L1600 173L1583 197L1560 220L1536 244L1513 267L1489 291L1467 314L1441 338L1412 361L1385 384L1362 408L1341 431L1325 455L1310 478L1299 502L1291 525L1284 549L1280 572L1278 596L1277 619L1278 642L1282 666L1287 689L1297 713L1310 736L1325 760L1344 783L1360 807L1360 830L1400 830L1400 150Z" fill="#ff1200"/>
<g mask="url(#ml2)"><path d="M640.0 180.0L735.0 180.0L729.8 210.3L715.4 237.7L701.0 263.6L689.4 289.6L683.6 315.6L682.0 341.5L684.0 370.0L690.0 400.0L640.0 400.0Z" fill="url(#gl2)"/></g>
<ellipse cx="852" cy="300" rx="62" ry="72" fill="url(#ghs)"/>
<path d="M540.0 372.0L540.0 330.0L560.0 290.0L590.0 240.0L620.0 215.0L655.0 222.0L645.3 228.8L635.0 243.0L625.0 257.6L616.4 273.5L607.8 290.8L602.0 308.0L597.7 325.4L593.4 342.7L590.5 360.0L590.0 380.0L594.0 400.0L600.0 418.0L575.0 410.0L556.0 380.0Z" fill="url(#gbl)" filter="url(#bl)"/>
<path d="M540.0 372.0L540.0 330.0L560.0 300.0L582.0 290.0L577.5 296.5L571.0 311.0L568.0 325.0L566.7 340.0L566.0 360.0L567.0 378.0L556.0 372.0Z" fill="url(#gbb)" filter="url(#bl)"/>
<path d="M470.0 350.0L553.0 350.0L556.0 380.0L560.0 400.0L575.0 430.0L560.0 470.0L540.0 480.0L470.0 480.0Z" fill="url(#gsl)" filter="url(#bl)"/>
<clipPath id="cd"><path d="M551.0 358.0L555.8 368.0L559.6 393.0L569.0 414.6L584.6 434.0L604.0 449.0L613.5 457.0L619.0 469.0L621.0 484.0L618.0 500.0L606.0 520.0L585.0 530.0L560.0 525.0L540.0 500.0L540.0 470.0L545.0 400.0Z"/></clipPath>
<g clip-path="url(#cd)"><rect x="530" y="350" width="100" height="190" fill="url(#gfd)"/><ellipse cx="597" cy="461" rx="80" ry="76" fill="url(#gpu)"/>
</g>
</g>
<line x1="459" y1="463" x2="500.4" y2="426.7" stroke="#f06464" stroke-width="2"/>
<line x1="574" y1="492" x2="613.5" y2="457.5" stroke="#f06464" stroke-width="2"/>
<line x1="1340" y1="703" x2="1442" y2="613" stroke="#f06464" stroke-width="2"/>
</svg>
<div class="abs" style="left:341px;top:101px;width:91px;height:17px;background:#000064"></div>
<div class="t " style="left:340.8px;top:101.5px;font-size:14.6px;color:#fff;">Perspective</div>
<div class="abs" style="left:1741px;top:111px;width:142px;height:272px;background:#f5f5f5;border:1px solid #111;box-sizing:border-box"></div>
<div class="abs" style="left:1741px;top:136px;width:142px;height:1px;background:#111"></div>
<div class="abs" style="left:1741px;top:162px;width:142px;height:1px;background:#111"></div>
<div class="abs" style="left:1741px;top:358px;width:142px;height:1px;background:#111"></div>
<div class="abs" style="left:1756px;top:173px;width:21px;height:170px;background:linear-gradient(#ff1200 0.0%,#fa4800 5.0%,#f38200 10.0%,#eeb400 15.0%,#e4e200 20.0%,#b9e000 25.0%,#82d800 30.0%,#46d000 35.0%,#14c800 40.0%,#06c028 45.0%,#00b652 50.0%,#00b078 55.0%,#00aaa0 60.0%,#0094ac 65.0%,#0072aa 70.0%,#004ea3 75.0%,#002c9a 80.0%,#000e92 85.0%,#0e008c 90.0%,#320088 95.0%,#580082 100.0%)"></div>
<div class="t " style="left:1756px;top:116px;font-size:14.5px;color:#000;">FF_1</div>
<div class="t " style="left:1756px;top:142px;font-size:14.5px;color:#000;">Type: Linear</div>
<div class="t " style="left:1756px;top:363px;font-size:14.5px;color:#000;">Dir: 10.08</div>
<div class="t " style="left:1788px;top:168px;font-size:14.5px;color:#000;">1</div>
<div class="t " style="left:1788px;top:185px;font-size:14.5px;color:#000;">0.9</div>
<div class="t " style="left:1788px;top:202px;font-size:14.5px;color:#000;">0.8</div>
<div class="t " style="left:1788px;top:219px;font-size:14.5px;color:#000;">0.7</div>
<div class="t " style="left:1788px;top:236px;font-size:14.5px;color:#000;">0.6</div>
<div class="t " style="left:1788px;top:253px;font-size:14.5px;color:#000;">0.5</div>
<div class="t " style="left:1788px;top:270px;font-size:14.5px;color:#000;">0.4</div>
<div class="t " style="left:1788px;top:287px;font-size:14.5px;color:#000;">0.3</div>
<div class="t " style="left:1788px;top:304px;font-size:14.5px;color:#000;">0.2</div>
<div class="t " style="left:1788px;top:321px;font-size:14.5px;color:#000;">0.1</div>
<div class="t " style="left:1788px;top:338px;font-size:14.5px;color:#000;">0</div>
<div class="abs" style="left:5px;top:29px;width:2px;height:2px;background:#9a9db4;"></div><div class="abs" style="left:5px;top:33px;width:2px;height:2px;background:#9a9db4;"></div><div class="abs" style="left:5px;top:37px;width:2px;height:2px;background:#9a9db4;"></div>
<div class="t " style="left:17px;top:29px;font-size:11.6px;color:#000;letter-spacing:-0.1px"><u>F</u>ile</div>
<div class="t " style="left:50px;top:29px;font-size:11.6px;color:#000;letter-spacing:-0.1px"><u>E</u>dit</div>
<div class="t " style="left:85px;top:29px;font-size:11.6px;color:#000;letter-spacing:-0.1px"><u>V</u>iew</div>
<div class="t " style="left:125px;top:29px;font-size:11.6px;color:#000;letter-spacing:-0.1px"><u>O</u>bject</div>
<div class="t " style="left:174px;top:29px;font-size:11.6px;color:#000;letter-spacing:-0.1px"><u>T</u>ools</div>
<div class="t " style="left:216px;top:29px;font-size:11.6px;color:#000;letter-spacing:-0.1px"><u>S</u>imulate</div>
<div class="t " style="left:275px;top:29px;font-size:11.6px;color:#000;letter-spacing:-0.1px"><u>H</u>elp</div>
<svg class="abs" style="left:1790px;top:0" width="130" height="23"><path d="M9 10.5H19" stroke="#000" stroke-width="1.1" fill="none"/><path d="M54.5 7.5h7v7h-7zM56.5 7.5v-2h7v7h-2" stroke="#000" stroke-width="1.1" fill="none"/><path d="M100 5L110 15M110 5L100 15" stroke="#000" stroke-width="1.1" fill="none"/></svg>
<svg class="abs" style="left:2px;top:3px" width="16" height="16"><rect width="16" height="16" fill="#0c2468"/><path d="M0 16L6 8L16 12V16Z" fill="#2458b0"/><path d="M0 0H5L7 7Z" fill="#1a3c8c"/><path d="M7 0.5L8 6L12 3L9 8L7 13L6 8.5L2 9L5.5 6.5Z" fill="#b8d4ff"/></svg>
<div class="tb" style="left:0;top:47px;width:285px;height:25px"></div>
<div class="tb" style="left:287px;top:47px;width:512px;height:25px"></div>
<div class="tb" style="left:0;top:73px;width:892px;height:25px"></div>
<div class="abs" style="left:0px;top:72px;width:287px;height:1px;background:#a9acc4;"></div><div class="abs" style="left:287px;top:72px;width:512px;height:1px;background:#a9acc4;"></div><div class="abs" style="left:0px;top:98px;width:892px;height:1px;background:#a9acc4;"></div>
<div class="vtb" style="left:0;top:100px;width:26px;height:724px"></div>
<div class="vtb" style="left:27px;top:100px;width:25px;height:776px"></div>
<div class="vtb" style="left:1894px;top:122px;width:26px;height:337px;border-radius:4px 0 0 4px"></div>
<div class="abs" style="left:5px;top:52px;width:2px;height:2px;background:#8d90a8;box-shadow:1px 1px 0 #fff"></div><div class="abs" style="left:5px;top:56px;width:2px;height:2px;background:#8d90a8;box-shadow:1px 1px 0 #fff"></div><div class="abs" style="left:5px;top:60px;width:2px;height:2px;background:#8d90a8;box-shadow:1px 1px 0 #fff"></div><div class="abs" style="left:5px;top:64px;width:2px;height:2px;background:#8d90a8;box-shadow:1px 1px 0 #fff"></div>
<div class="abs" style="left:291px;top:52px;width:2px;height:2px;background:#8d90a8;box-shadow:1px 1px 0 #fff"></div><div class="abs" style="left:291px;top:56px;width:2px;height:2px;background:#8d90a8;box-shadow:1px 1px 0 #fff"></div><div class="abs" style="left:291px;top:60px;width:2px;height:2px;background:#8d90a8;box-shadow:1px 1px 0 #fff"></div><div class="abs" style="left:291px;top:64px;width:2px;height:2px;background:#8d90a8;box-shadow:1px 1px 0 #fff"></div>
<div class="abs" style="left:5px;top:78px;width:2px;height:2px;background:#8d90a8;box-shadow:1px 1px 0 #fff"></div><div class="abs" style="left:5px;top:82px;width:2px;height:2px;background:#8d90a8;box-shadow:1px 1px 0 #fff"></div><div class="abs" style="left:5px;top:86px;width:2px;height:2px;background:#8d90a8;box-shadow:1px 1px 0 #fff"></div><div class="abs" style="left:5px;top:90px;width:2px;height:2px;background:#8d90a8;box-shadow:1px 1px 0 #fff"></div>
<div class="abs" style="left:296px;top:49px;width:22px;height:22px;background:#d3e5f8;border:1px solid #2b86dd;box-sizing:border-box"></div>
<div class="abs" style="left:710px;top:49px;width:22px;height:22px;background:#d3e5f8;border:1px solid #2b86dd;box-sizing:border-box"></div>
<svg class="abs" style="left:12px;top:51.5px" width="16" height="16" viewBox="0 0 16 16"><path d="M5.5 6.5H11L13.5 9V15.5H5.5Z" fill="#fff" stroke="#1c1c1c" stroke-width="1" /><path d="M11 6.5V9H13.5" fill="none" stroke="#1c1c1c" stroke-width="1" /><path d="M3.5 0.5V6.5M0.5 3.5H6.5M1.5 1.5L5.5 5.5M5.5 1.5L1.5 5.5" fill="none" stroke="#dd8f1c" stroke-width="1" /></svg>
<svg class="abs" style="left:34px;top:51.5px" width="16" height="16" viewBox="0 0 16 16"><path d="M2 8H7L8 9.5H14.5V15H2Z" fill="#dd8f1c" /><path d="M2 15L4.5 10.5H16L14 15Z" fill="#c47a12" /><path d="M3 6C3 2.5 7 1.5 10 3.5" fill="none" stroke="#0f5f8c" stroke-width="1.8" /><path d="M8.5 1L12.5 4.5L8 6Z" fill="#0f5f8c" /></svg>
<svg class="abs" style="left:57px;top:51.5px" width="16" height="16" viewBox="0 0 16 16"><path d="M2 2H12L14.5 4.5V14.5H2Z" fill="#0f5f8c" /><rect x="5" y="2" width="6" height="4.5" fill="#fff" /><rect x="8.5" y="2.8" width="1.6" height="3" fill="#0f5f8c" /><rect x="4.5" y="9.5" width="7.5" height="5" fill="#0b4f78" /></svg>
<svg class="abs" style="left:87px;top:51.5px" width="16" height="16" viewBox="0 0 16 16"><rect x="4" y="1.5" width="8" height="4" fill="#fff" stroke="#0f5f8c" stroke-width="1.2" /><path d="M1.5 5.5H14.5V12H1.5Z" fill="#0f5f8c" /><rect x="4" y="9.5" width="8" height="5" fill="#fff" stroke="#1c1c1c" stroke-width="1" /><rect x="11.5" y="7" width="1.5" height="1" fill="#fff" /></svg>
<svg class="abs" style="left:117px;top:51.5px" width="16" height="16" viewBox="0 0 16 16"><path d="M4 1L9 9M12 1L7 9" fill="none" stroke="#a3a3a3" stroke-width="2" /><rect x="2" y="9" width="4.5" height="5.5" fill="#a3a3a3" /><rect x="9.5" y="9" width="4.5" height="5.5" fill="#a3a3a3" /></svg>
<svg class="abs" style="left:139px;top:51.5px" width="16" height="16" viewBox="0 0 16 16"><path d="M7 1.5H14V9H10V14.5H2.5V7H7Z" fill="#a3a3a3" /></svg>
<svg class="abs" style="left:160px;top:51.5px" width="16" height="16" viewBox="0 0 16 16"><path d="M6 1.5H10L13.5 6V14.5H2.5V6Z" fill="#a3a3a3" /></svg>
<svg class="abs" style="left:182px;top:51.5px" width="16" height="16" viewBox="0 0 16 16"><path d="M3.5 4.5H12.5L11.8 15H4.2Z" fill="#fff" stroke="#0f5f8c" stroke-width="1.3" /><path d="M2 4H14M6 4V2.2H10V4" fill="none" stroke="#0f5f8c" stroke-width="1.5" /><path d="M6 6.5V13M8 6.5V13M10 6.5V13" fill="none" stroke="#0f5f8c" stroke-width="1" /></svg>
<svg class="abs" style="left:213px;top:51.5px" width="16" height="16" viewBox="0 0 16 16"><path d="M3 3C8 0.5 13 3 11 8L6 14" fill="none" stroke="#a3a3a3" stroke-width="2.4" /><path d="M1.5 1L7 2.5L2.5 6.5Z" fill="#a3a3a3" /></svg>
<svg class="abs" style="left:235px;top:51.5px" width="16" height="16" viewBox="0 0 16 16"><path d="M13 3C8 0.5 3 3 5 8L10 14" fill="none" stroke="#a3a3a3" stroke-width="2.4" /><path d="M14.5 1L9 2.5L13.5 6.5Z" fill="#a3a3a3" /></svg>
<svg class="abs" style="left:264px;top:51.5px" width="16" height="16" viewBox="0 0 16 16"><rect x="2.5" y="1.5" width="13" height="11.5" fill="#fff" stroke="#1c1c1c" stroke-width="1" /><rect x="2.5" y="1.5" width="13" height="3" fill="#0f5f8c" /><circle cx="4.5" cy="11.5" r="3.8" fill="#1c1c1c"/><text x="4.5" y="14" font-size="7" fill="#fff" font-family="Liberation Sans,sans-serif" text-anchor="middle" font-weight="bold">?</text></svg>
<svg class="abs" style="left:299px;top:51.5px" width="16" height="16" viewBox="0 0 16 16"><path d="M4 1.5V13L7 10.3L9.2 15L11 14.2L8.8 9.6H12.5Z" fill="#0f5f8c" /></svg>
<svg class="abs" style="left:321px;top:51.5px" width="16" height="16" viewBox="0 0 16 16"><path d="M4.5 9V4.5C4.5 3.3 6 3.3 6 4.5V2.8C6 1.6 7.5 1.6 7.5 2.8V2.3C7.5 1.1 9 1.1 9 2.3V3C9 1.9 10.5 1.9 10.5 3V10C11 8 13 7 13.5 8C12.5 10 11.5 14.5 9.5 14.5H6.5C4.5 14.5 2.5 11 2 9C2.8 8 4 8.5 4.5 9.5" fill="#fff" stroke="#1c1c1c" stroke-width="1" /><path d="M6 4.5V8M7.5 2.8V8M9 3V8" fill="none" stroke="#1c1c1c" stroke-width="0.8" /></svg>
<svg class="abs" style="left:343px;top:51.5px" width="16" height="16" viewBox="0 0 16 16"><path d="M8 3.5L12 5.5V10L8 12L4 10V5.5Z" fill="#0f5f8c" /><path d="M8 3.5L12 5.5L8 7.5L4 5.5Z" fill="#62a7cf" /><path d="M2.5 10C1 6 3 2 7 1.5M13.5 10C15 6 13 2 9.5 1.5M4 13.5C6.5 15.5 9.5 15.5 12 13.5" fill="none" stroke="#1c1c1c" stroke-width="1.5" /><path d="M1 9L3 12.5L4.5 9ZM12 9L13.5 12.5L15.5 9Z" fill="#1c1c1c" /></svg>
<svg class="abs" style="left:372px;top:51.5px" width="16" height="16" viewBox="0 0 16 16"><circle cx="9" cy="5.5" r="3.8" fill="#fff" stroke="#1c1c1c" stroke-width="1.3"/><path d="M11.5 8.5L15 12.5" fill="none" stroke="#1c1c1c" stroke-width="2" /><path d="M1.5 8.5H7M1.5 12.5H7M4.2 10V15" fill="none" stroke="#1c1c1c" stroke-width="1.6" /></svg>
<svg class="abs" style="left:395px;top:51.5px" width="16" height="16" viewBox="0 0 16 16"><path d="M1.5 4V1.5H4M12 1.5H14.5V4M1.5 10V12.5H4" fill="none" stroke="#1c1c1c" stroke-width="1.3" /><rect x="3" y="3" width="10" height="8" fill="#fff" stroke="#1c1c1c" stroke-width="1" /><circle cx="8" cy="7" r="3.2" fill="#fff" stroke="#1c1c1c" stroke-width="1.2"/><path d="M6.5 7H9.5M8 5.5V8.5" fill="none" stroke="#0f5f8c" stroke-width="1.1" /><path d="M10.3 9.5L14.5 14" fill="none" stroke="#1c1c1c" stroke-width="2" /></svg>
<svg class="abs" style="left:418px;top:51.5px" width="16" height="16" viewBox="0 0 16 16"><rect x="1.5" y="1.5" width="12" height="11" fill="#fff" stroke="#1c1c1c" stroke-width="1" stroke-dasharray="1 1"/><circle cx="8" cy="8" r="3" fill="#fff" stroke="#1c1c1c" stroke-width="1.2"/><path d="M6.5 8H9.5M8 6.5V9.5" fill="none" stroke="#0f5f8c" stroke-width="1.1" /><path d="M10.3 10.3L14.5 14.5" fill="none" stroke="#1c1c1c" stroke-width="2" /></svg>
<svg class="abs" style="left:440px;top:51.5px" width="16" height="16" viewBox="0 0 16 16"><rect x="1" y="1" width="9" height="9" fill="#62a7cf" /><circle cx="9" cy="9" r="3" fill="#fff" stroke="#1c1c1c" stroke-width="1.2"/><path d="M7.5 9H10.5M9 7.5V10.5" fill="none" stroke="#0f5f8c" stroke-width="1.1" /><path d="M11.3 11.3L15 15" fill="none" stroke="#1c1c1c" stroke-width="2" /></svg>
<svg class="abs" style="left:469px;top:51.5px" width="16" height="16" viewBox="0 0 16 16"><rect x="1.5" y="1.5" width="13" height="12" fill="#fff" stroke="#1c1c1c" stroke-width="1" stroke-dasharray="1 1"/><path d="M6 5C9 3 11.5 5.5 9.5 8L8 10.5" fill="none" stroke="#0f5f8c" stroke-width="1.7" /><path d="M4.5 3.5L8 4L5.5 7Z" fill="#0f5f8c" /></svg>
<svg class="abs" style="left:498px;top:51.5px" width="16" height="16" viewBox="0 0 16 16"><rect x="1" y="1" width="14" height="14" fill="#334" /><rect x="2.5" y="2.5" width="5" height="5" fill="#fff" /><rect x="8.5" y="2.5" width="5" height="5" fill="#62a7cf" /><rect x="2.5" y="8.5" width="5" height="5" fill="#62a7cf" /><rect x="8.5" y="8.5" width="5" height="5" fill="#fff" /><path d="M4 4H6M5 4V6.5M10 10L12 12M12 10L10 12" fill="none" stroke="#1c1c1c" stroke-width="0.9" /></svg>
<svg class="abs" style="left:520px;top:51.5px" width="16" height="16" viewBox="0 0 16 16"><rect x="1" y="1" width="14" height="14" fill="#a3a3a3" /></svg>
<svg class="abs" style="left:551px;top:51.5px" width="16" height="16" viewBox="0 0 16 16"><path d="M5.5 5.5L10 2L15 5.5V11L10 14.5L5.5 12Z" fill="#fff" stroke="#1c1c1c" stroke-width="1.1" /><path d="M5.5 5.5L10 8L15 5.5M10 8V14.5" fill="none" stroke="#1c1c1c" stroke-width="1" /><rect x="0.5" y="9.5" width="6" height="6" fill="#0f5f8c" /><circle cx="3.5" cy="12.5" r="1.5" fill="#fff" stroke="#0f5f8c" stroke-width="0.6"/></svg>
<svg class="abs" style="left:573px;top:51.5px" width="16" height="16" viewBox="0 0 16 16"><rect x="1.5" y="5.5" width="9" height="9" fill="#62a7cf" /><path d="M1.5 5.5H10.5V14.5H1.5ZM1.5 5.5L5.5 1.5H14.5V10.5L10.5 14.5M10.5 5.5L14.5 1.5" fill="none" stroke="#1c1c1c" stroke-width="1.1" /><path d="M5.5 1.5V10.5H14.5M5.5 10.5L1.5 14.5" fill="none" stroke="#555" stroke-width="0.7" /></svg>
<svg class="abs" style="left:595px;top:51.5px" width="16" height="16" viewBox="0 0 16 16"><path d="M1.5 14.5L5.5 10.5H14.5L10.5 14.5Z" fill="#62a7cf" /><path d="M1.5 5.5H10.5V14.5H1.5ZM1.5 5.5L5.5 1.5H14.5V10.5L10.5 14.5M10.5 5.5L14.5 1.5" fill="none" stroke="#1c1c1c" stroke-width="1.1" /><path d="M5.5 1.5V10.5H14.5M5.5 10.5L1.5 14.5" fill="none" stroke="#555" stroke-width="0.7" /></svg>
<svg class="abs" style="left:617px;top:51.5px" width="16" height="16" viewBox="0 0 16 16"><rect x="5.5" y="1.5" width="9" height="9" fill="#62a7cf" /><path d="M1.5 5.5H10.5V14.5H1.5ZM1.5 5.5L5.5 1.5H14.5V10.5L10.5 14.5M10.5 5.5L14.5 1.5" fill="none" stroke="#1c1c1c" stroke-width="1.1" /><path d="M5.5 1.5V10.5H14.5M5.5 10.5L1.5 14.5" fill="none" stroke="#555" stroke-width="0.7" /></svg>
<svg class="abs" style="left:639px;top:51.5px" width="16" height="16" viewBox="0 0 16 16"><rect x="5.5" y="1.5" width="9" height="9" fill="#62a7cf" /><path d="M1.5 5.5H10.5V14.5H1.5ZM1.5 5.5L5.5 1.5H14.5V10.5L10.5 14.5M10.5 5.5L14.5 1.5" fill="none" stroke="#1c1c1c" stroke-width="1.1" /><path d="M5.5 1.5V10.5H14.5M5.5 10.5L1.5 14.5" fill="none" stroke="#555" stroke-width="0.7" /></svg>
<svg class="abs" style="left:661px;top:51.5px" width="16" height="16" viewBox="0 0 16 16"><path d="M10.5 5.5L14.5 1.5V10.5L10.5 14.5Z" fill="#62a7cf" /><path d="M1.5 5.5H10.5V14.5H1.5ZM1.5 5.5L5.5 1.5H14.5V10.5L10.5 14.5M10.5 5.5L14.5 1.5" fill="none" stroke="#1c1c1c" stroke-width="1.1" /><path d="M5.5 1.5V10.5H14.5M5.5 10.5L1.5 14.5" fill="none" stroke="#555" stroke-width="0.7" /></svg>
<svg class="abs" style="left:683px;top:51.5px" width="16" height="16" viewBox="0 0 16 16"><path d="M1.5 5.5L5.5 1.5V10.5L1.5 14.5Z" fill="#62a7cf" /><path d="M1.5 5.5H10.5V14.5H1.5ZM1.5 5.5L5.5 1.5H14.5V10.5L10.5 14.5M10.5 5.5L14.5 1.5" fill="none" stroke="#1c1c1c" stroke-width="1.1" /><path d="M5.5 1.5V10.5H14.5M5.5 10.5L1.5 14.5" fill="none" stroke="#555" stroke-width="0.7" /></svg>
<svg class="abs" style="left:712.5px;top:51.5px" width="16" height="16" viewBox="0 0 16 16"><rect x="2" y="1" width="13" height="7" fill="#0f5f8c" /><text x="8.5" y="7.2" font-size="7.5" fill="#fff" font-family="Liberation Sans,sans-serif" text-anchor="middle" font-weight="bold">XY</text><path d="M8.5 8V11.5L3 15.5M8.5 11.5H15" fill="none" stroke="#1c1c1c" stroke-width="1" /></svg>
<svg class="abs" style="left:734px;top:51.5px" width="16" height="16" viewBox="0 0 16 16"><rect x="2" y="1" width="13" height="7" fill="#a01020" /><text x="8.5" y="7.2" font-size="7.5" fill="#fff" font-family="Liberation Sans,sans-serif" text-anchor="middle" font-weight="bold">YZ</text><path d="M8.5 8V11.5L3 15.5M8.5 11.5H15" fill="none" stroke="#1c1c1c" stroke-width="1" /></svg>
<svg class="abs" style="left:756px;top:51.5px" width="16" height="16" viewBox="0 0 16 16"><rect x="2" y="1" width="13" height="7" fill="#1e9a3c" /><text x="8.5" y="7.2" font-size="7.5" fill="#fff" font-family="Liberation Sans,sans-serif" text-anchor="middle" font-weight="bold">ZX</text><path d="M8.5 8V11.5L3 15.5M8.5 11.5H15" fill="none" stroke="#1c1c1c" stroke-width="1" /></svg>
<svg class="abs" style="left:778px;top:51.5px" width="16" height="16" viewBox="0 0 16 16"><rect x="2" y="1" width="13" height="7" fill="#d98c1e" /><text x="8.5" y="7.2" font-size="7.5" fill="#fff" font-family="Liberation Sans,sans-serif" text-anchor="middle" font-weight="bold">W</text><path d="M8.5 8V11.5L3 15.5M8.5 11.5H15" fill="none" stroke="#1c1c1c" stroke-width="1" /></svg>
<div class="abs" style="left:80px;top:51px;width:1px;height:18px;background:#c9c6c0;box-shadow:1px 0 0 #f4f4fa"></div>
<div class="abs" style="left:110px;top:51px;width:1px;height:18px;background:#c9c6c0;box-shadow:1px 0 0 #f4f4fa"></div>
<div class="abs" style="left:206px;top:51px;width:1px;height:18px;background:#c9c6c0;box-shadow:1px 0 0 #f4f4fa"></div>
<div class="abs" style="left:258px;top:51px;width:1px;height:18px;background:#c9c6c0;box-shadow:1px 0 0 #f4f4fa"></div>
<div class="abs" style="left:366px;top:51px;width:1px;height:18px;background:#c9c6c0;box-shadow:1px 0 0 #f4f4fa"></div>
<div class="abs" style="left:462.5px;top:51px;width:1px;height:18px;background:#c9c6c0;box-shadow:1px 0 0 #f4f4fa"></div>
<div class="abs" style="left:492.5px;top:51px;width:1px;height:18px;background:#c9c6c0;box-shadow:1px 0 0 #f4f4fa"></div>
<div class="abs" style="left:544.5px;top:51px;width:1px;height:18px;background:#c9c6c0;box-shadow:1px 0 0 #f4f4fa"></div>
<div class="abs" style="left:706px;top:51px;width:1px;height:18px;background:#c9c6c0;box-shadow:1px 0 0 #f4f4fa"></div>
<svg class="abs" style="left:12px;top:77.5px" width="16" height="16" viewBox="0 0 16 16"><path d="M0.5 15V10H5V8H11V10H15.5V15Z" fill="#a3a3a3" /><text x="8" y="6.5" font-size="7" fill="#a3a3a3" font-family="Liberation Sans,sans-serif" text-anchor="middle" font-weight="bold">1</text></svg>
<svg class="abs" style="left:34px;top:77.5px" width="16" height="16" viewBox="0 0 16 16"><path d="M0.5 15V10H5V8H11V10H15.5V15Z" fill="#a3a3a3" /><text x="8" y="6.5" font-size="7" fill="#a3a3a3" font-family="Liberation Sans,sans-serif" text-anchor="middle" font-weight="bold">2</text></svg>
<svg class="abs" style="left:56px;top:77.5px" width="16" height="16" viewBox="0 0 16 16"><path d="M0.5 15V9H5V11H11V9H15.5V15Z" fill="#a3a3a3" /><text x="8" y="6.5" font-size="7" fill="#a3a3a3" font-family="Liberation Sans,sans-serif" text-anchor="middle" font-weight="bold">1</text></svg>
<svg class="abs" style="left:78px;top:77.5px" width="16" height="16" viewBox="0 0 16 16"><path d="M0.5 15V9H5V11H11V9H15.5V15Z" fill="#a3a3a3" /><text x="8" y="6.5" font-size="7" fill="#a3a3a3" font-family="Liberation Sans,sans-serif" text-anchor="middle" font-weight="bold">2</text></svg>
<svg class="abs" style="left:100px;top:77.5px" width="16" height="16" viewBox="0 0 16 16"><path d="M1 3.5H15M1 13.5H15M4 8.5H10" fill="none" stroke="#a3a3a3" stroke-width="1.6" /><text x="13" y="11" font-size="6" fill="#a3a3a3" font-family="Liberation Sans,sans-serif" text-anchor="middle" font-weight="bold">1</text></svg>
<svg class="abs" style="left:122px;top:77.5px" width="16" height="16" viewBox="0 0 16 16"><path d="M1 3.5H15M1 13.5H15M4 8.5H10" fill="none" stroke="#a3a3a3" stroke-width="1.6" /><text x="13" y="11" font-size="6" fill="#a3a3a3" font-family="Liberation Sans,sans-serif" text-anchor="middle" font-weight="bold">2</text></svg>
<svg class="abs" style="left:144px;top:77.5px" width="16" height="16" viewBox="0 0 16 16"><circle cx="8" cy="8" r="7.5" fill="#a3a3a3"/><circle cx="8" cy="8" r="0.8" fill="#fff"/></svg>
<svg class="abs" style="left:166px;top:77.5px" width="16" height="16" viewBox="0 0 16 16"><circle cx="8" cy="8" r="7.5" fill="#a3a3a3"/><circle cx="8" cy="6.5" r="0.8" fill="#fff"/><circle cx="8" cy="9.5" r="0.8" fill="#fff"/></svg>
<svg class="abs" style="left:188px;top:77.5px" width="16" height="16" viewBox="0 0 16 16"><path d="M1 4.5L3.5 2H15.5V11.5L13 14.5H1Z" fill="#a3a3a3" /><rect x="3" y="6.5" width="8" height="6" fill="#ccc" /><text x="7" y="12" font-size="6" fill="#a3a3a3" font-family="Liberation Sans,sans-serif" text-anchor="middle" font-weight="bold">1</text></svg>
<svg class="abs" style="left:210px;top:77.5px" width="16" height="16" viewBox="0 0 16 16"><path d="M1 4.5L3.5 2H15.5V11.5L13 14.5H1Z" fill="#a3a3a3" /><rect x="3" y="6.5" width="8" height="6" fill="#ccc" /><text x="7" y="12" font-size="6" fill="#a3a3a3" font-family="Liberation Sans,sans-serif" text-anchor="middle" font-weight="bold">2</text></svg>
<svg class="abs" style="left:240px;top:77.5px" width="16" height="16" viewBox="0 0 16 16"><path d="M2 2L14 14M14 2L2 14" fill="none" stroke="#a3a3a3" stroke-width="2.2" /></svg>
<svg class="abs" style="left:262px;top:77.5px" width="16" height="16" viewBox="0 0 16 16"><path d="M1 9H15V15H1Z" fill="#a3a3a3" /><path d="M3 9V6H13V9" fill="none" stroke="#a3a3a3" stroke-width="1.4" /></svg>
<svg class="abs" style="left:284px;top:77.5px" width="16" height="16" viewBox="0 0 16 16"><path d="M3 2V15M7 1V15M11 1V15" fill="none" stroke="#1c1c1c" stroke-width="1.2" /><path d="M1 4L13 2M1 7.5L13 5.5M1 11L13 9M1 14.5L13 12.5" fill="none" stroke="#62a7cf" stroke-width="1.5" /><path d="M1 4L13 2M1 11L13 9" fill="none" stroke="#0f5f8c" stroke-width="0.8" /></svg>
<svg class="abs" style="left:307px;top:77.5px" width="16" height="16" viewBox="0 0 16 16"><path d="M1.5 14C2 6 14 6 14.5 14L12 14C11.5 9.5 4.5 9.5 4 14Z" fill="#0f5f8c" /><path d="M1.5 12L0.5 10M3 8L1.5 6.5M5.5 6L4.8 4M8 5.5V3.5M10.5 6L11.2 4M13 8L14.5 6.5M14.5 12L15.5 10" fill="none" stroke="#62a7cf" stroke-width="1" /></svg>
<svg class="abs" style="left:329px;top:77.5px" width="16" height="16" viewBox="0 0 16 16"><rect x="1.5" y="1.5" width="13" height="13" fill="#62a7cf" rx="3"/><ellipse cx="8" cy="3" rx="5.5" ry="1.8" fill="#e8e0c0" stroke="#776" stroke-width="0.8" /><ellipse cx="8" cy="13.5" rx="5.5" ry="1.8" fill="#8a8060" /><rect x="4" y="5" width="8" height="7" fill="#fff" stroke="#0f5f8c" stroke-width="1.6" /></svg>
<svg class="abs" style="left:351px;top:77.5px" width="16" height="16" viewBox="0 0 16 16"><ellipse cx="8" cy="8" rx="7" ry="4.5" fill="#334" transform="rotate(40 8 8)"/><ellipse cx="8.8" cy="9.2" rx="5.2" ry="2.8" fill="#62a7cf" transform="rotate(40 8.8 9.2)"/></svg>
<svg class="abs" style="left:373px;top:77.5px" width="16" height="16" viewBox="0 0 16 16"><path d="M2 2.5L8 5V15.5L2 13Z" fill="#62a7cf" stroke="#1c1c1c" stroke-width="1.2" /><path d="M8 5L14 2.5V13L8 15.5Z" fill="#fff" stroke="#1c1c1c" stroke-width="1.2" /></svg>
<svg class="abs" style="left:395px;top:77.5px" width="16" height="16" viewBox="0 0 16 16"><ellipse cx="8" cy="8" rx="7.3" ry="4.3" fill="#fff" stroke="#665" stroke-width="1.3" /><circle cx="5" cy="7" r="0.7" fill="#0f5f8c"/><circle cx="8" cy="6.5" r="0.7" fill="#0f5f8c"/><circle cx="11" cy="7.5" r="0.7" fill="#0f5f8c"/><circle cx="6.5" cy="9.5" r="0.7" fill="#0f5f8c"/><circle cx="9.5" cy="9.5" r="0.7" fill="#0f5f8c"/><circle cx="8" cy="8" r="0.6" fill="#62a7cf"/><circle cx="3.5" cy="8.5" r="0.6" fill="#62a7cf"/><circle cx="12.2" cy="9" r="0.6" fill="#62a7cf"/></svg>
<svg class="abs" style="left:417px;top:77.5px" width="16" height="16" viewBox="0 0 16 16"><path d="M8 0.5L15.5 15.5H0.5Z" fill="#fff" stroke="#0f5f8c" stroke-width="1.3" /><path d="M4.2 8H11.8L8 15.5Z" fill="#fff" stroke="#0f5f8c" stroke-width="1.1" /><path d="M6.1 4.3H9.9L8 8ZM2.3 11.8H6.1L4.2 15.5ZM9.9 11.8H13.7L11.8 15.5Z" fill="#62a7cf" stroke="#0f5f8c" stroke-width="0.8" /></svg>
<svg class="abs" style="left:447.5px;top:77.5px" width="16" height="16" viewBox="0 0 16 16"><path d="M8 1V15" fill="none" stroke="#0f5f8c" stroke-width="1.4" /><rect x="7" y="8" width="2" height="2" fill="#dd8f1c" /></svg>
<svg class="abs" style="left:469px;top:77.5px" width="16" height="16" viewBox="0 0 16 16"><path d="M3 1V15M8 1V15M13 1V15" fill="none" stroke="#0f5f8c" stroke-width="1.4" /><rect x="2" y="8" width="2" height="2" fill="#dd8f1c" /><rect x="7" y="8" width="2" height="2" fill="#dd8f1c" /><rect x="12" y="8" width="2" height="2" fill="#dd8f1c" /><path d="M1 9H15" fill="none" stroke="#dd8f1c" stroke-width="0.6" /></svg>
<svg class="abs" style="left:491px;top:77.5px" width="16" height="16" viewBox="0 0 16 16"><path d="M2.5 7V16M6.5 5V14M10.5 3V12M14.5 1V10" fill="none" stroke="#0f5f8c" stroke-width="1.4" /><path d="M1.5 11.5H3.5M5.5 9.5H7.5M9.5 7.5H11.5M13.5 5.5H15.5" fill="none" stroke="#62a7cf" stroke-width="1.2" /></svg>
<svg class="abs" style="left:513px;top:77.5px" width="16" height="16" viewBox="0 0 16 16"><rect x="2" y="6.5" width="12" height="3" fill="#a3a3a3" /><rect x="7.5" y="7.5" width="1" height="1" fill="#fff" /></svg>
<svg class="abs" style="left:535px;top:77.5px" width="16" height="16" viewBox="0 0 16 16"><rect x="1" y="1" width="14" height="14" fill="#a3a3a3" /><rect x="4.5" y="7.5" width="1.5" height="1.5" fill="#ddd" /></svg>
<svg class="abs" style="left:557px;top:77.5px" width="16" height="16" viewBox="0 0 16 16"><rect x="1" y="1" width="6.5" height="6.5" fill="#a3a3a3" /><rect x="8.5" y="1" width="6.5" height="6.5" fill="#a3a3a3" /><rect x="1" y="8.5" width="6.5" height="6.5" fill="#a3a3a3" /><rect x="8.5" y="8.5" width="6.5" height="6.5" fill="#a3a3a3" /></svg>
<svg class="abs" style="left:579px;top:77.5px" width="16" height="16" viewBox="0 0 16 16"><path d="M1.5 1.5H8V5.5H14.5V10H8V14.5H1.5Z" fill="#a3a3a3" /></svg>
<svg class="abs" style="left:601px;top:77.5px" width="16" height="16" viewBox="0 0 16 16"><rect x="1.5" y="1.5" width="13" height="13" fill="#e4e4ea" stroke="#a3a3a3" stroke-width="1.2" /><path d="M10 5H7V8H4M7 8V11H10" fill="none" stroke="#a3a3a3" stroke-width="1.4" /></svg>
<svg class="abs" style="left:623px;top:77.5px" width="16" height="16" viewBox="0 0 16 16"><rect x="1" y="1" width="14" height="14" fill="#62a7cf" /><rect x="1" y="1" width="14" height="14" fill="none" stroke="#0f5f8c" stroke-width="0.8" /><path d="M8 3.5V12.5" fill="none" stroke="#fff" stroke-width="1.8" /></svg>
<svg class="abs" style="left:645px;top:77.5px" width="16" height="16" viewBox="0 0 16 16"><rect x="1" y="1" width="14" height="14" fill="#62a7cf" /><path d="M4 2V6.5M8 2V6.5M12 2V6.5M4 9.5V14M8 9.5V14M12 9.5V14" fill="none" stroke="#fff" stroke-width="1.6" /><path d="M1 8H15" fill="none" stroke="#0f5f8c" stroke-width="0.8" /></svg>
<svg class="abs" style="left:667px;top:77.5px" width="16" height="16" viewBox="0 0 16 16"><rect x="1" y="1" width="14" height="14" fill="#62a7cf" /><path d="M8 3.5V12.5M3.5 8H12.5" fill="none" stroke="#fff" stroke-width="1.8" /></svg>
<svg class="abs" style="left:689px;top:77.5px" width="16" height="16" viewBox="0 0 16 16"><path d="M7 1L2.5 9L7 15ZM9 1L13.5 9L9 15Z" fill="#a3a3a3" /></svg>
<svg class="abs" style="left:711px;top:77.5px" width="16" height="16" viewBox="0 0 16 16"><path d="M2 2H6V5H2ZM10 2H14V5H10ZM1 8L4 5.5L7 8L4 10.5ZM9 8L12 5.5L15 8L12 10.5ZM2 11.5H6V15H2ZM10 11.5H14V15H10Z" fill="#a3a3a3" /></svg>
<svg class="abs" style="left:741px;top:77.5px" width="16" height="16" viewBox="0 0 16 16"><path d="M1.5 14.5V4.5L3.5 3H6L7 4.5H10L11 3H13L14.5 4.5V14.5Z" fill="#a3a3a3" /></svg>
<svg class="abs" style="left:762.5px;top:77.5px" width="16" height="16" viewBox="0 0 16 16"><path d="M8 1L12 2.5L15 6V10.5L12 14L8 15.5L4 14L1 10.5V6L4 2.5Z" fill="#a3a3a3" /></svg>
<svg class="abs" style="left:784.5px;top:77.5px" width="16" height="16" viewBox="0 0 16 16"><path d="M0.5 13.5C2 9 4.5 5.5 8 5.5C11.5 5.5 14 9 15.5 13.5Z" fill="#a3a3a3" /></svg>
<svg class="abs" style="left:806px;top:77.5px" width="16" height="16" viewBox="0 0 16 16"><path d="M0.5 14L5 6L7.5 9.5L10 4.5L15.5 14Z" fill="#a3a3a3" /></svg>
<svg class="abs" style="left:829px;top:77.5px" width="16" height="16" viewBox="0 0 16 16"><path d="M0.5 14L8 5H15.5V14Z" fill="#a3a3a3" /></svg>
<svg class="abs" style="left:851px;top:77.5px" width="16" height="16" viewBox="0 0 16 16"><rect x="6.5" y="2" width="3" height="3" fill="#a3a3a3" /><path d="M5 8H11M3 11H13M1 14H15" fill="none" stroke="#a3a3a3" stroke-width="2" stroke-dasharray="2 1"/></svg>
<svg class="abs" style="left:873px;top:77.5px" width="16" height="16" viewBox="0 0 16 16"><path d="M3 15V8C3 3 13 3 13 8V15" fill="none" stroke="#a3a3a3" stroke-width="1.8" /><circle cx="3" cy="8" r="1.8" fill="#a3a3a3"/><circle cx="13" cy="8" r="1.8" fill="#a3a3a3"/><circle cx="8" cy="3.5" r="1.8" fill="#a3a3a3"/><rect x="1.5" y="13" width="3" height="2.5" fill="#a3a3a3" /><rect x="11.5" y="13" width="3" height="2.5" fill="#a3a3a3" /></svg>
<div class="abs" style="left:234px;top:77px;width:1px;height:18px;background:#c9c6c0;box-shadow:1px 0 0 #f4f4fa"></div>
<div class="abs" style="left:441px;top:77px;width:1px;height:18px;background:#c9c6c0;box-shadow:1px 0 0 #f4f4fa"></div>
<div class="abs" style="left:734.5px;top:77px;width:1px;height:18px;background:#c9c6c0;box-shadow:1px 0 0 #f4f4fa"></div>
<div class="abs" style="left:6px;top:104px;width:2px;height:2px;background:#8d90a8;box-shadow:1px 1px 0 #fff"></div><div class="abs" style="left:10px;top:104px;width:2px;height:2px;background:#8d90a8;box-shadow:1px 1px 0 #fff"></div><div class="abs" style="left:14px;top:104px;width:2px;height:2px;background:#8d90a8;box-shadow:1px 1px 0 #fff"></div><div class="abs" style="left:18px;top:104px;width:2px;height:2px;background:#8d90a8;box-shadow:1px 1px 0 #fff"></div>
<div class="abs" style="left:33px;top:104px;width:2px;height:2px;background:#8d90a8;box-shadow:1px 1px 0 #fff"></div><div class="abs" style="left:37px;top:104px;width:2px;height:2px;background:#8d90a8;box-shadow:1px 1px 0 #fff"></div><div class="abs" style="left:41px;top:104px;width:2px;height:2px;background:#8d90a8;box-shadow:1px 1px 0 #fff"></div><div class="abs" style="left:45px;top:104px;width:2px;height:2px;background:#8d90a8;box-shadow:1px 1px 0 #fff"></div>
<div class="abs" style="left:1900px;top:127px;width:2px;height:2px;background:#8d90a8;box-shadow:1px 1px 0 #fff"></div><div class="abs" style="left:1904px;top:127px;width:2px;height:2px;background:#8d90a8;box-shadow:1px 1px 0 #fff"></div><div class="abs" style="left:1908px;top:127px;width:2px;height:2px;background:#8d90a8;box-shadow:1px 1px 0 #fff"></div><div class="abs" style="left:1912px;top:127px;width:2px;height:2px;background:#8d90a8;box-shadow:1px 1px 0 #fff"></div>
<svg class="abs" style="left:5px;top:113px" width="16" height="16" viewBox="0 0 16 16"><path d="M1 5L4.5 1.5H15V11L11.5 14.5H1Z" fill="#a3a3a3" /><path d="M1 5H11.5V14.5M11.5 5L15 1.5" fill="none" stroke="#c4c4c4" stroke-width="0.8" /></svg>
<svg class="abs" style="left:5px;top:134px" width="16" height="16" viewBox="0 0 16 16"><path d="M2.5 3.5C2.5 0.8 13.5 0.8 13.5 3.5V12.5C13.5 15.2 2.5 15.2 2.5 12.5Z" fill="#a3a3a3" /><ellipse cx="8" cy="3.5" rx="5.5" ry="1.8" fill="none" stroke="#c8c8c8" stroke-width="0.8" /></svg>
<svg class="abs" style="left:5px;top:156px" width="16" height="16" viewBox="0 0 16 16"><path d="M8 0.5L14 12.5C14 15.3 2 15.3 2 12.5Z" fill="#a3a3a3" /><ellipse cx="8" cy="12.3" rx="5.2" ry="1.6" fill="none" stroke="#c8c8c8" stroke-width="0.8" /></svg>
<svg class="abs" style="left:5px;top:178px" width="16" height="16" viewBox="0 0 16 16"><path d="M8 0.5L15.5 12L9 15.5L0.5 12Z" fill="#a3a3a3" /><path d="M8 0.5L9 15.5" fill="none" stroke="#c8c8c8" stroke-width="0.8" stroke-dasharray="2 1.5"/></svg>
<svg class="abs" style="left:5px;top:200px" width="16" height="16" viewBox="0 0 16 16"><circle cx="8" cy="8" r="7.5" fill="#a3a3a3"/><path d="M7 2.5V10.5M7 12V13" fill="none" stroke="#d6d6d6" stroke-width="1.2" /></svg>
<svg class="abs" style="left:5px;top:222px" width="16" height="16" viewBox="0 0 16 16"><ellipse cx="8" cy="8" rx="8" ry="5" fill="#a3a3a3" transform="rotate(-40 8 8)"/><path d="M5 5.5C7 6 9 8 9.5 10" fill="none" stroke="#d0d0d0" stroke-width="0.9" /></svg>
<svg class="abs" style="left:5px;top:244px" width="16" height="16" viewBox="0 0 16 16"><ellipse cx="8" cy="8" rx="7.5" ry="4.5" fill="#a3a3a3" /><ellipse cx="8" cy="7.5" rx="3.8" ry="1.4" fill="#dcdce6" /><path d="M1 8H15M4 5L12 11M12 5L4 11" fill="none" stroke="#c2c2c2" stroke-width="0.6" /></svg>
<svg class="abs" style="left:5px;top:266px" width="16" height="16" viewBox="0 0 16 16"><path d="M8 1L15 13.5H1ZM8 1V10L1 13.5M8 10L15 13.5" fill="none" stroke="#a3a3a3" stroke-width="1.2" /></svg>
<svg class="abs" style="left:5px;top:295.5px" width="16" height="16" viewBox="0 0 16 16"><rect x="1" y="1.5" width="14" height="13" fill="#a3a3a3" /></svg>
<svg class="abs" style="left:5px;top:317.5px" width="16" height="16" viewBox="0 0 16 16"><circle cx="8" cy="8" r="7.3" fill="#a3a3a3"/></svg>
<svg class="abs" style="left:5px;top:339.5px" width="16" height="16" viewBox="0 0 16 16"><path d="M1.5 2C5 0.5 11 0.5 14.5 2L10 14C9 15.5 7 15.5 6 14Z" fill="#a3a3a3" /></svg>
<svg class="abs" style="left:5px;top:362px" width="16" height="16" viewBox="0 0 16 16"><ellipse cx="8" cy="8" rx="7.8" ry="3.8" fill="#a3a3a3" /></svg>
<svg class="abs" style="left:5px;top:384px" width="16" height="16" viewBox="0 0 16 16"><path d="M1 0.5L15.5 15H1Z" fill="#a3a3a3" /></svg>
<svg class="abs" style="left:5px;top:407px" width="16" height="16" viewBox="0 0 16 16"><path d="M5.5 2.5H10.5L13 13.5H3Z" fill="#a3a3a3" /></svg>
<svg class="abs" style="left:5px;top:428px" width="16" height="16" viewBox="0 0 16 16"><path d="M8 0.5L14.5 4V12L8 15.5L1.5 12V4Z" fill="#a3a3a3" /></svg>
<svg class="abs" style="left:5px;top:450px" width="16" height="16" viewBox="0 0 16 16"><path d="M8 8C8 6 11 6 11 8.5C11 11.5 5 11.5 5 7.5C5 3 14 3 14 9C14 12 11 14 9 14M2 9C1.5 5 4 2 8 2" fill="none" stroke="#a3a3a3" stroke-width="2" /></svg>
<svg class="abs" style="left:5px;top:472px" width="16" height="16" viewBox="0 0 16 16"><path d="M8 0.5L10 6H15.5L11 9.5L12.8 15.2L8 11.8L3.2 15.2L5 9.5L0.5 6H6Z" fill="#a3a3a3" /></svg>
<svg class="abs" style="left:5px;top:502px" width="16" height="16" viewBox="0 0 16 16"><path d="M1 6C1 2 5 2 8 4C11 2 15 2 15 6C15 11 11 13 8 13C5 13 1 11 1 6Z" fill="#a3a3a3" /></svg>
<svg class="abs" style="left:5px;top:523px" width="16" height="16" viewBox="0 0 16 16"><path d="M1 8C3 4 8 3.5 14 8L8 9Z" fill="#a3a3a3" /><path d="M8 1V13M1 14L14 9.5" fill="none" stroke="#a3a3a3" stroke-width="1.1" /></svg>
<svg class="abs" style="left:5px;top:553.5px" width="16" height="16" viewBox="0 0 16 16"><path d="M1.5 14L14.5 1.5" fill="none" stroke="#1c1c1c" stroke-width="1.2" /></svg>
<svg class="abs" style="left:5px;top:576px" width="16" height="16" viewBox="0 0 16 16"><circle cx="8" cy="8" r="7" fill="none" stroke="#333320" stroke-width="1.1"/></svg>
<svg class="abs" style="left:5px;top:597px" width="16" height="16" viewBox="0 0 16 16"><rect x="3.5" y="1.5" width="9" height="13" fill="none" stroke="#1c1c1c" stroke-width="1.2" rx="4.2"/></svg>
<svg class="abs" style="left:5px;top:620px" width="16" height="16" viewBox="0 0 16 16"><path d="M2.5 2C4 16 12 16 13.5 2" fill="none" stroke="#1c1c1c" stroke-width="1.2" /></svg>
<svg class="abs" style="left:5px;top:641px" width="16" height="16" viewBox="0 0 16 16"><path d="M2.5 1.5V12C2.5 13.5 3.5 14 5 14H13.5" fill="none" stroke="#1c1c1c" stroke-width="1.3" /></svg>
<svg class="abs" style="left:5px;top:663px" width="16" height="16" viewBox="0 0 16 16"><path d="M8.5 8.5C8.5 7.3 10.5 7.5 10.5 9C10.5 11 6.5 11 6.5 8C6.5 4.5 13 4.5 13 9.5C13 14 5.5 15.5 3.5 11C2.5 8.5 2.8 5 3.5 2.5" fill="none" stroke="#1c1c1c" stroke-width="1" /></svg>
<svg class="abs" style="left:5px;top:686px" width="16" height="16" viewBox="0 0 16 16"><ellipse cx="8" cy="4" rx="5" ry="2" fill="none" stroke="#554" stroke-width="0.9" /><ellipse cx="8" cy="7" rx="5" ry="2" fill="none" stroke="#554" stroke-width="0.9" /><ellipse cx="8" cy="10" rx="5" ry="2" fill="none" stroke="#554" stroke-width="0.9" /><ellipse cx="8" cy="13" rx="5" ry="2" fill="none" stroke="#554" stroke-width="0.9" /></svg>
<svg class="abs" style="left:5px;top:708.5px" width="16" height="16" viewBox="0 0 16 16"><path d="M2 13.5L3 6L8 1.5L14 5L8.5 8L13.5 13.5Z" fill="none" stroke="#1c1c1c" stroke-width="1" /><circle cx="2" cy="13.5" r="1.3" fill="#0f5f8c"/><circle cx="3" cy="6" r="1.3" fill="#0f5f8c"/><circle cx="8" cy="1.5" r="1.3" fill="#0f5f8c"/><circle cx="14" cy="5" r="1.3" fill="#0f5f8c"/><circle cx="8.5" cy="8" r="1.3" fill="#0f5f8c"/><circle cx="13.5" cy="13.5" r="1.3" fill="#0f5f8c"/></svg>
<svg class="abs" style="left:5px;top:730.5px" width="16" height="16" viewBox="0 0 16 16"><path d="M2 14C3 8 6 8 8 7.5C11 7 13 5 13.5 1.5" fill="none" stroke="#1c1c1c" stroke-width="1" /><circle cx="2" cy="14" r="1.4" fill="#0f5f8c"/><circle cx="8" cy="7.5" r="1.4" fill="#0f5f8c"/><circle cx="13.5" cy="1.5" r="1.4" fill="#0f5f8c"/></svg>
<svg class="abs" style="left:5px;top:752px" width="16" height="16" viewBox="0 0 16 16"><path d="M1.5 0.5V14.5H15.5" fill="none" stroke="#0f5f8c" stroke-width="1.5" /><path d="M3.5 11C5 11 5.5 6 7 6C8.5 6 8 9.5 9.5 9.5C11 9.5 11 3.5 13 3.5C14 3.5 14.5 5 14.5 6" fill="none" stroke="#1c1c1c" stroke-width="1.3" /></svg>
<svg class="abs" style="left:5px;top:781.5px" width="16" height="16" viewBox="0 0 16 16"><path d="M8 5.5L10 8L8 10.5L6 8Z" fill="#0f5f8c" /><path d="M8 4.5V11.5M4.5 8H11.5" fill="none" stroke="#1c1c1c" stroke-width="0.6" /></svg>
<svg class="abs" style="left:5px;top:802px" width="16" height="16" viewBox="0 0 16 16"><path d="M8 15.5V8L2.5 1.5M8 8L13.5 1.5M2.5 1.5H13.5M5.3 1.5L8 5M10.7 1.5L8 5" fill="none" stroke="#55502a" stroke-width="1" /></svg>
<div class="abs" style="left:4px;top:290px;width:18px;height:1px;background:#c9c6c0;box-shadow:0 1px 0 #f4f4fa"></div>
<div class="abs" style="left:4px;top:495.5px;width:18px;height:1px;background:#c9c6c0;box-shadow:0 1px 0 #f4f4fa"></div>
<div class="abs" style="left:4px;top:547.5px;width:18px;height:1px;background:#c9c6c0;box-shadow:0 1px 0 #f4f4fa"></div>
<div class="abs" style="left:4px;top:775.5px;width:18px;height:1px;background:#c9c6c0;box-shadow:0 1px 0 #f4f4fa"></div>
<svg class="abs" style="left:32px;top:113px" width="16" height="16" viewBox="0 0 16 16"><path d="M1 9.5L7 7L11 9L5 12Z" fill="#fff" stroke="#1c1c1c" stroke-width="0.8" /><path d="M1 9.5V12.5L5 15V12ZM5 12L11 9V12L5 15Z" fill="#0b4f78" /><path d="M5 12.2L8 10.8" fill="none" stroke="#7fc08a" stroke-width="1" /><path d="M8 3.5H13" fill="none" stroke="#0f5f8c" stroke-width="1.6" /><path d="M11.5 0.5L15.5 3.5L11.5 6.5Z" fill="#0f5f8c" /></svg>
<svg class="abs" style="left:32px;top:134px" width="16" height="16" viewBox="0 0 16 16"><path d="M5 8.5L11 6L15 8L9 11Z" fill="#fff" stroke="#1c1c1c" stroke-width="0.8" /><path d="M5 8.5V11.5L9 14V11ZM9 11L15 8V11L9 14Z" fill="#0b4f78" /><path d="M9 11.2L12 9.8" fill="none" stroke="#7fc08a" stroke-width="1" /><path d="M6.5 1V8" fill="none" stroke="#dd8f1c" stroke-width="1.2" /><path d="M2.5 4.5H5.5M3.5 2C5.5 2 6 3.5 5.5 5.5" fill="none" stroke="#0f5f8c" stroke-width="1.5" /><path d="M0.5 4.5L4 2V7Z" fill="#0f5f8c" /></svg>
<svg class="abs" style="left:32px;top:156px" width="16" height="16" viewBox="0 0 16 16"><rect x="1.5" y="4.5" width="10" height="10" fill="#fff" stroke="#1c1c1c" stroke-width="1.3" /><rect x="3.5" y="6.5" width="6" height="6" fill="#0f5f8c" /><path d="M10 6L14.5 1.5" fill="none" stroke="#1c1c1c" stroke-width="1.6" /><path d="M10.5 1H15V5.5Z" fill="#1c1c1c" /></svg>
<svg class="abs" style="left:32px;top:178px" width="16" height="16" viewBox="0 0 16 16"><path d="M2 8C2 5 7 5 7.5 7.5C8 10 9 10.5 11 10.5C14 10.5 14.5 6.5 12 6" fill="none" stroke="#1c1c1c" stroke-width="2" /><path d="M14 8C14 11 9 11 8.5 8.5C8 6 7 5.5 5 5.5C2 5.5 1.5 9.5 4 10" fill="none" stroke="#1c1c1c" stroke-width="2" /></svg>
<svg class="abs" style="left:32px;top:208px" width="16" height="16" viewBox="0 0 16 16"><path d="M0.5 12.5L7 4.5V12.5Z" fill="#0f5f8c" /><path d="M15.5 12.5L9 4.5V12.5Z" fill="#9a9a9a" /><path d="M8 1V15.5" fill="none" stroke="#dd8f1c" stroke-width="1.3" /></svg>
<svg class="abs" style="left:32px;top:229.5px" width="16" height="16" viewBox="0 0 16 16"><rect x="3" y="3" width="6.5" height="6.5" fill="none" stroke="#1c1c1c" stroke-width="1" /><rect x="6.5" y="6.5" width="6.5" height="6.5" fill="none" stroke="#1c1c1c" stroke-width="1" /><rect x="0.5" y="0.5" width="3" height="3" fill="#0f5f8c" /><rect x="12.5" y="0.5" width="3" height="3" fill="#0f5f8c" /><rect x="0.5" y="12.5" width="3" height="3" fill="#0f5f8c" /><rect x="12.5" y="12.5" width="3" height="3" fill="#0f5f8c" /><path d="M5 1.5H11M5 14.5H11M1.5 5V11M14.5 5V11" fill="none" stroke="#0f5f8c" stroke-width="1" stroke-dasharray="1.5 1.5"/></svg>
<svg class="abs" style="left:32px;top:251px" width="16" height="16" viewBox="0 0 16 16"><rect x="1" y="1" width="6" height="6" fill="#fff" stroke="#bbb" stroke-width="1" /><rect x="9" y="1" width="6" height="6" fill="#fff" stroke="#bbb" stroke-width="1" /><rect x="1" y="9" width="6" height="6" fill="#0f5f8c" /><rect x="9" y="9" width="6" height="6" fill="#fff" stroke="#bbb" stroke-width="1" /></svg>
<svg class="abs" style="left:32px;top:272px" width="16" height="16" viewBox="0 0 16 16"><rect x="6" y="1.5" width="9" height="8" fill="#62a7cf" stroke="#1c1c1c" stroke-width="1" /><rect x="1.5" y="6.5" width="9" height="8" fill="#fff" stroke="#999" stroke-width="1" /></svg>
<svg class="abs" style="left:32px;top:295.5px" width="16" height="16" viewBox="0 0 16 16"><rect x="6" y="1.5" width="9" height="8" fill="#62a7cf" stroke="#1c1c1c" stroke-width="1" /><rect x="1.5" y="6.5" width="9" height="8" fill="#62a7cf" stroke="#1c1c1c" stroke-width="1" /></svg>
<svg class="abs" style="left:32px;top:317.5px" width="16" height="16" viewBox="0 0 16 16"><rect x="6" y="1.5" width="9" height="8" fill="#fff" stroke="#aaa" stroke-width="1" /><rect x="1.5" y="6.5" width="9" height="8" fill="#fff" stroke="#aaa" stroke-width="1" /><rect x="6" y="6.5" width="4.5" height="3" fill="#62a7cf" stroke="#1c1c1c" stroke-width="0.8" /></svg>
<svg class="abs" style="left:32px;top:339.5px" width="16" height="16" viewBox="0 0 16 16"><circle cx="8" cy="8" r="3" fill="#0f5f8c"/><path d="M8 0.5V3M8 13V15.5M0.5 8H3M13 8H15.5M2.5 2.5L4.3 4.3M11.7 11.7L13.5 13.5M2.5 13.5L4.3 11.7M11.7 4.3L13.5 2.5" fill="none" stroke="#1c1c1c" stroke-width="1" stroke-dasharray="1 1"/></svg>
<svg class="abs" style="left:32px;top:362px" width="16" height="16" viewBox="0 0 16 16"><path d="M1 5L6 1.5L15 5.5V11.5L9.5 15L1 11Z" fill="#fff" stroke="#1c1c1c" stroke-width="1.1" stroke-linejoin="round"/><path d="M9.5 8.5L15 5.5V11.5L9.5 15Z" fill="#62a7cf" stroke="#1c1c1c" stroke-width="1" /><path d="M1 5L9.5 8.5" fill="none" stroke="#1c1c1c" stroke-width="1" /></svg>
<svg class="abs" style="left:32px;top:384px" width="16" height="16" viewBox="0 0 16 16"><path d="M1 15L6.5 9.5L9 11.5Z" fill="#555" /><path d="M6.5 9.5L13 2L15 4.5L9 11.5Z" fill="#1c1c1c" /></svg>
<svg class="abs" style="left:32px;top:413.5px" width="16" height="16" viewBox="0 0 16 16"><path d="M1.5 8.5H8.5V15H1.5Z" fill="#0f5f8c" /><path d="M1.5 8.5L4.5 5.5H11.5L8.5 8.5Z" fill="#fff" stroke="#0f5f8c" stroke-width="1" /><path d="M11.5 5.5V12L8.5 15" fill="none" stroke="#0f5f8c" stroke-width="1" /><path d="M8 8L14 2" fill="none" stroke="#1c1c1c" stroke-width="1.3" /><path d="M10.5 1.5H14.5V5.5" fill="none" stroke="#1c1c1c" stroke-width="1.3" /></svg>
<svg class="abs" style="left:32px;top:436px" width="16" height="16" viewBox="0 0 16 16"><path d="M8 2L14.5 12.5C14.5 15 1.5 15 1.5 12.5Z" fill="#fff" stroke="#1c1c1c" stroke-width="0.9" /><ellipse cx="8" cy="12.5" rx="6.2" ry="2.2" fill="#62a7cf" stroke="#1c1c1c" stroke-width="0.8" /><path d="M8 0.5V12.5" fill="none" stroke="#0f5f8c" stroke-width="1.3" stroke-dasharray="2 1"/></svg>
<svg class="abs" style="left:32px;top:458px" width="16" height="16" viewBox="0 0 16 16"><path d="M2 4V12C2 15.5 14 15.5 14 12V4" fill="none" stroke="#0f5f8c" stroke-width="1.6" /><ellipse cx="8" cy="12" rx="6" ry="2.5" fill="#62a7cf" stroke="#0f5f8c" stroke-width="1" /><path d="M8 1V13" fill="none" stroke="#dd8f1c" stroke-width="1.3" /><path d="M3 4.5H7M4.5 2.5L2.5 4.5L4.5 6.5" fill="none" stroke="#0f5f8c" stroke-width="1.2" /></svg>
<svg class="abs" style="left:32px;top:480px" width="16" height="16" viewBox="0 0 16 16"><path d="M0.5 13.5L4 6C5.5 2.5 10.5 2.5 12 6L15.5 13.5Z" fill="#fff" stroke="#0f5f8c" stroke-width="1.2" /><path d="M2 11H14V13.5H0.8Z" fill="#0f5f8c" /><ellipse cx="8" cy="6" rx="3" ry="1.5" fill="#62a7cf" /></svg>
<svg class="abs" style="left:32px;top:502px" width="16" height="16" viewBox="0 0 16 16"><path d="M0.5 11L7 4C10 5 12 3.5 15.5 5L9 12C6 10.5 4 12 0.5 11Z" fill="#62a7cf" stroke="#0f5f8c" stroke-width="1" /></svg>
<svg class="abs" style="left:32px;top:523px" width="16" height="16" viewBox="0 0 16 16"><path d="M5 1C12 3 12 13 5 15C8 11 8 5 5 1Z" fill="#62a7cf" stroke="#0f5f8c" stroke-width="1" /><path d="M8 1C15 3 15 13 8 15C11 11 11 5 8 1Z" fill="#62a7cf" stroke="#0f5f8c" stroke-width="1" /></svg>
<svg class="abs" style="left:32px;top:545px" width="16" height="16" viewBox="0 0 16 16"><path d="M1 5H15M1 11.5H15" fill="none" stroke="#1c1c1c" stroke-width="1.2" /><rect x="1.5" y="5.8" width="13" height="5" fill="#62a7cf" /><ellipse cx="2.5" cy="8.2" rx="1.3" ry="2.4" fill="#0f5f8c" /><ellipse cx="13.5" cy="8.2" rx="1.3" ry="2.4" fill="#0f5f8c" /></svg>
<svg class="abs" style="left:32px;top:567px" width="16" height="16" viewBox="0 0 16 16"><path d="M1.5 14.5L7 6L12 14.5Z" fill="#62a7cf" stroke="#1c1c1c" stroke-width="1.1" /><path d="M8 1C14 1 16 8 12 13L9 8C11 6 10 3 8 1Z" fill="#123a5c" /><path d="M9 8L12 13L14 9Z" fill="#bbb" /></svg>
<svg class="abs" style="left:32px;top:589px" width="16" height="16" viewBox="0 0 16 16"><path d="M3 6C3 1 12 1 12 6L14.5 6L10.5 11L6.5 6H9C9 4 6 4 6 6.5C6 10 9 11 10 14C5 14 3 10 3 6Z" fill="#0f5f8c" /><path d="M8 4L12 6L10 9Z" fill="#fff" /></svg>
<svg class="abs" style="left:32px;top:620px" width="16" height="16" viewBox="0 0 16 16"><circle cx="8" cy="8" r="7" fill="#fff" stroke="#1c1c1c" stroke-width="1"/><path d="M8 1V15M1.5 5L14.5 11M14.5 5L1.5 11M1.5 5L8 8M8 1L1.5 11M8 1L14.5 11" fill="none" stroke="#1c1c1c" stroke-width="0.8" /><path d="M8 1L14.5 5L8 8L1.5 5Z" fill="#62a7cf" stroke="#1c1c1c" stroke-width="0.8" /><circle cx="8" cy="1" r="0.9" fill="#0f5f8c"/><circle cx="1.5" cy="5" r="0.9" fill="#0f5f8c"/><circle cx="14.5" cy="5" r="0.9" fill="#0f5f8c"/><circle cx="8" cy="8" r="0.9" fill="#0f5f8c"/><circle cx="8" cy="15" r="0.9" fill="#0f5f8c"/></svg>
<svg class="abs" style="left:32px;top:641px" width="16" height="16" viewBox="0 0 16 16"><path d="M8 0.5L15 4V12L8 15.5L1 12V4Z" fill="#62a7cf" stroke="#0f5f8c" stroke-width="1.2" /><path d="M1 4L8 7.5L15 4M8 7.5V15.5" fill="none" stroke="#0f5f8c" stroke-width="1.2" /><path d="M1 12L8 7.5L15 12" fill="none" stroke="#fff" stroke-width="0.7" /></svg>
<svg class="abs" style="left:32px;top:663px" width="16" height="16" viewBox="0 0 16 16"><path d="M2 11L7.5 2L14.5 5L9.5 14.5Z" fill="#fff" stroke="#1c1c1c" stroke-width="1" /><rect x="0.8" y="9.8" width="2.4" height="2.4" fill="#fff" stroke="#1c1c1c" stroke-width="0.8" /><rect x="6.3" y="0.8" width="2.4" height="2.4" fill="#fff" stroke="#1c1c1c" stroke-width="0.8" /><rect x="13.3" y="3.8" width="2.4" height="2.4" fill="#fff" stroke="#1c1c1c" stroke-width="0.8" /><rect x="8.3" y="13.3" width="2.4" height="2.4" fill="#fff" stroke="#1c1c1c" stroke-width="0.8" /><rect x="9.8" y="2.3" width="2.4" height="2.4" fill="#fff" stroke="#1c1c1c" stroke-width="0.8" /><rect x="10.8" y="8.5" width="2.4" height="2.4" fill="#fff" stroke="#1c1c1c" stroke-width="0.8" /></svg>
<svg class="abs" style="left:32px;top:685px" width="16" height="16" viewBox="0 0 16 16"><path d="M15 1C15 9 9 14.5 1 14.5H15Z" fill="#62a7cf" /><path d="M15 1C15 9 9 14.5 1 14.5H15" fill="none" stroke="#0f5f8c" stroke-width="1.4" /><path d="M3 3L9.5 9.5" fill="none" stroke="#1c1c1c" stroke-width="1.4" /><path d="M2 2H6L2 6ZM10.5 10.5H6.5L10.5 6.5Z" fill="#1c1c1c" /></svg>
<svg class="abs" style="left:32px;top:707.5px" width="16" height="16" viewBox="0 0 16 16"><ellipse cx="8" cy="8" rx="5" ry="6.5" fill="none" stroke="#1c1c1c" stroke-width="1.6" /><circle cx="8" cy="1.5" r="1.6" fill="#0f5f8c"/><circle cx="8" cy="14.5" r="1.6" fill="#0f5f8c"/><circle cx="3" cy="8" r="1.6" fill="#0f5f8c"/><circle cx="13" cy="8" r="1.6" fill="#0f5f8c"/></svg>
<svg class="abs" style="left:32px;top:729.5px" width="16" height="16" viewBox="0 0 16 16"><path d="M7 15.5V5" fill="none" stroke="#0f5f8c" stroke-width="2.2" /><path d="M2.5 7L7 1L11.5 7" fill="none" stroke="#0f5f8c" stroke-width="2.2" /><path d="M7 9L11.5 14" fill="none" stroke="#0f5f8c" stroke-width="2" /></svg>
<svg class="abs" style="left:32px;top:759px" width="16" height="16" viewBox="0 0 16 16"><circle cx="8" cy="8" r="7.2" fill="#fff" stroke="#bbb" stroke-width="1"/><circle cx="6" cy="5" r="1" fill="#0f5f8c"/><circle cx="10" cy="4.5" r="1" fill="#0f5f8c"/><circle cx="4.5" cy="9" r="1" fill="#0f5f8c"/><circle cx="8" cy="8" r="1" fill="#0f5f8c"/><circle cx="11.5" cy="8.5" r="1" fill="#0f5f8c"/><circle cx="7" cy="11.5" r="1" fill="#0f5f8c"/><circle cx="10.5" cy="12" r="1" fill="#0f5f8c"/></svg>
<svg class="abs" style="left:32px;top:781px" width="16" height="16" viewBox="0 0 16 16"><path d="M0.5 9L6 4L9 5L13 3L15.5 6L11 12L8 11L5 13.5L1.5 12Z" fill="#999" /></svg>
<svg class="abs" style="left:32px;top:811.5px" width="16" height="16" viewBox="0 0 16 16"><path d="M0.5 12H15.5" fill="none" stroke="#0f5f8c" stroke-width="1.6" /><rect x="0.5" y="10.5" width="2.5" height="3" fill="#fff" stroke="#0f5f8c" stroke-width="1" /><rect x="13" y="10.5" width="2.5" height="3" fill="#fff" stroke="#0f5f8c" stroke-width="1" /><path d="M2.5 4V8.5M5.5 6V8.5M8 4V8.5M10.5 6V8.5M13.5 4V8.5" fill="none" stroke="#1c1c1c" stroke-width="0.9" /></svg>
<svg class="abs" style="left:32px;top:833px" width="16" height="16" viewBox="0 0 16 16"><path d="M2 13.5H14.5" fill="none" stroke="#1c1c1c" stroke-width="1.4" /><path d="M3 13.5L10.5 1.5" fill="none" stroke="#1c1c1c" stroke-width="1.2" /><path d="M4 13L7.5 8C9.5 9 10.5 11 10.5 13Z" fill="#62a7cf" stroke="#0f5f8c" stroke-width="0.8" /></svg>
<svg class="abs" style="left:32px;top:856px" width="16" height="16" viewBox="0 0 16 16"><path d="M3 0.5V9H12Z" fill="#0f5f8c" /><rect x="1" y="10.5" width="14" height="5" fill="#1c1c1c" /><rect x="2.5" y="12.5" width="2.5" height="3" fill="#fff" /><rect x="6.7" y="12.5" width="2.5" height="3" fill="#fff" /><rect x="11" y="12.5" width="2.5" height="3" fill="#fff" /></svg>
<div class="abs" style="left:31px;top:202px;width:18px;height:1px;background:#c9c6c0;box-shadow:0 1px 0 #f4f4fa"></div>
<div class="abs" style="left:31px;top:407px;width:18px;height:1px;background:#c9c6c0;box-shadow:0 1px 0 #f4f4fa"></div>
<div class="abs" style="left:31px;top:613px;width:18px;height:1px;background:#c9c6c0;box-shadow:0 1px 0 #f4f4fa"></div>
<div class="abs" style="left:31px;top:753px;width:18px;height:1px;background:#c9c6c0;box-shadow:0 1px 0 #f4f4fa"></div>
<div class="abs" style="left:31px;top:805px;width:18px;height:1px;background:#c9c6c0;box-shadow:0 1px 0 #f4f4fa"></div>
<svg class="abs" style="left:1899px;top:135.5px" width="16" height="16" viewBox="0 0 16 16"><rect x="0.5" y="3.5" width="15" height="9" fill="#fff" stroke="#0f5f8c" stroke-width="1.6" /><path d="M3 4V8M5.5 4V6.5M8 4V8M10.5 4V6.5M13 4V8" fill="none" stroke="#0f5f8c" stroke-width="1.1" /></svg>
<svg class="abs" style="left:1899px;top:157.5px" width="16" height="16" viewBox="0 0 16 16"><path d="M0.5 8C1 2 2.5 2 3 8C3.5 14 5 14 5.5 8C6 2 7.5 2 8 8C8.5 14 10 14 10.5 8C11 2 12.5 2 13 8C13.5 14 15 14 15.5 8" fill="none" stroke="#444" stroke-width="1" /></svg>
<svg class="abs" style="left:1899px;top:180px" width="16" height="16" viewBox="0 0 16 16"><path d="M1 5.5L5 1.5H15V10.5L11 14.5H1Z" fill="#fff" stroke="#1c1c1c" stroke-width="1" /><rect x="1" y="5.5" width="10" height="9" fill="#0f5f8c" /><rect x="5.2" y="5.5" width="1.6" height="9" fill="#fff" /><path d="M11 5.5L15 1.5M1 5.5H11V14.5" fill="none" stroke="#1c1c1c" stroke-width="1" /><path d="M11 5.5L15 1.5V10.5L11 14.5Z" fill="#62a7cf" stroke="#1c1c1c" stroke-width="0.8" /></svg>
<svg class="abs" style="left:1899px;top:202px" width="16" height="16" viewBox="0 0 16 16"><path d="M1 7L5 2.5H15V10L11 14.5H1ZM1 7H11V14.5M11 7L15 2.5" fill="#fff" stroke="#0f5f8c" stroke-width="1.3" /></svg>
<svg class="abs" style="left:1899px;top:224px" width="16" height="16" viewBox="0 0 16 16"><rect x="2" y="2" width="3" height="3" fill="#0f5f8c" /><rect x="2" y="6.5" width="3" height="3" fill="#0f5f8c" /><rect x="2" y="11" width="3" height="3" fill="#0f5f8c" /><rect x="6.5" y="2" width="3" height="3" fill="#0f5f8c" /><rect x="6.5" y="6.5" width="3" height="3" fill="#0f5f8c" /><rect x="6.5" y="11" width="3" height="3" fill="#0f5f8c" /><rect x="11" y="2" width="3" height="3" fill="#0f5f8c" /><rect x="11" y="6.5" width="3" height="3" fill="#0f5f8c" /><rect x="11" y="11" width="3" height="3" fill="#0f5f8c" /></svg>
<svg class="abs" style="left:1899px;top:246px" width="16" height="16" viewBox="0 0 16 16"><circle cx="6" cy="6" r="4.5" fill="#fff" stroke="#1c1c1c" stroke-width="1.3"/><rect x="6.5" y="6.5" width="8" height="8" fill="#62a7cf" stroke="#0f5f8c" stroke-width="1" /><path d="M6.5 10.5H14.5M10.5 6.5V14.5" fill="none" stroke="#fff" stroke-width="1" /></svg>
<svg class="abs" style="left:1899px;top:275px" width="16" height="16" viewBox="0 0 16 16"><rect x="0.5" y="1" width="15" height="14" fill="#fff" stroke="#ccc" stroke-width="0.8" /><text x="8" y="12" font-size="12" fill="#1c1c1c" font-family="Liberation Sans,sans-serif" text-anchor="middle" font-style="italic" font-weight="bold" font-family="Liberation Serif,serif">fx</text></svg>
<svg class="abs" style="left:1899px;top:297px" width="16" height="16" viewBox="0 0 16 16"><path d="M5 5L10 2L15.5 5V10.5L10 14L5 11Z" fill="#fff" stroke="#1c1c1c" stroke-width="1" /><path d="M5 5L10 8L15.5 5M10 8V14" fill="none" stroke="#1c1c1c" stroke-width="0.9" /><text x="3" y="14.5" font-size="10" fill="#1c1c1c" font-family="Liberation Sans,sans-serif" text-anchor="middle" font-style="italic" font-family="Liberation Serif,serif">x</text></svg>
<svg class="abs" style="left:1899px;top:319px" width="16" height="16" viewBox="0 0 16 16"><path d="M4 1.5H14.5V4H12V14.5H2V12H4Z" fill="#fff" stroke="#0f5f8c" stroke-width="1.5" /><path d="M6 5H10M6 7.5H10M6 10H10" fill="none" stroke="#0f5f8c" stroke-width="1" /></svg>
<svg class="abs" style="left:1899px;top:341.5px" width="16" height="16" viewBox="0 0 16 16"><path d="M4.5 4.5H11L14 7.5V15H4.5Z" fill="#fff" stroke="#1c1c1c" stroke-width="1" /><path d="M6.5 10H12M6.5 12.5H12" fill="none" stroke="#777" stroke-width="0.8" /><path d="M1 1L5 2L10 8L8 10L2.5 4.5Z" fill="#0f5f8c" /><path d="M8 10L10.5 10.5L10 8Z" fill="#1c1c1c" /></svg>
<svg class="abs" style="left:1899px;top:364px" width="16" height="16" viewBox="0 0 16 16"><path d="M7 2.5H13M6 5.5H15M6 8.5H15M6 11.5H15" fill="none" stroke="#0f5f8c" stroke-width="1.2" /><path d="M1 9.5L3.5 13.5L6.5 5" fill="none" stroke="#1c1c1c" stroke-width="1.6" /></svg>
<svg class="abs" style="left:1899px;top:386px" width="16" height="16" viewBox="0 0 16 16"><rect x="1.5" y="1.5" width="12" height="9.5" fill="#fff" stroke="#0f5f8c" stroke-width="1.5" /><path d="M3 9L6 5.5L8 7.5L10 5L12.5 9Z" fill="#62a7cf" /><rect x="8.5" y="10.5" width="6" height="4.5" fill="#0f5f8c" /><ellipse cx="11.5" cy="10.5" rx="3" ry="1" fill="#62a7cf" /></svg>
<svg class="abs" style="left:1899px;top:408px" width="16" height="16" viewBox="0 0 16 16"><rect x="3" y="1" width="10" height="14" fill="#fff" stroke="#0f5f8c" stroke-width="1.4" /><rect x="4.8" y="2.8" width="6.4" height="2.5" fill="#62a7cf" /><rect x="4.8" y="7" width="1.5" height="1.5" fill="#0f5f8c" /><rect x="4.8" y="9.5" width="1.5" height="1.5" fill="#0f5f8c" /><rect x="4.8" y="12" width="1.5" height="1.5" fill="#0f5f8c" /><rect x="7.2" y="7" width="1.5" height="1.5" fill="#0f5f8c" /><rect x="7.2" y="9.5" width="1.5" height="1.5" fill="#0f5f8c" /><rect x="7.2" y="12" width="1.5" height="1.5" fill="#0f5f8c" /><rect x="9.6" y="7" width="1.5" height="1.5" fill="#0f5f8c" /><rect x="9.6" y="9.5" width="1.5" height="1.5" fill="#0f5f8c" /><rect x="9.6" y="12" width="1.5" height="1.5" fill="#0f5f8c" /></svg>
<svg class="abs" style="left:1899px;top:438px" width="16" height="16" viewBox="0 0 16 16"><path d="M3.5 1.5L13.5 8L3.5 14.5Z" fill="#0f5f8c" /></svg>
<div class="abs" style="left:1898px;top:268.5px;width:18px;height:1px;background:#c9c6c0;box-shadow:0 1px 0 #f4f4fa"></div>
<div class="abs" style="left:1898px;top:431px;width:18px;height:1px;background:#c9c6c0;box-shadow:0 1px 0 #f4f4fa"></div>
<div class="abs" style="left:52px;top:99px;width:283px;height:20px;background:linear-gradient(#b9cfe8,#cadcf0);"></div>
<div class="t " style="left:57px;top:103.5px;font-size:11.3px;color:#000;">Resource Manager</div>
<svg class="abs" style="left:319px;top:103px" width="11" height="11"><path d="M1.5 1.5L9.5 9.5M9.5 1.5L1.5 9.5" stroke="#000" stroke-width="1.6"/></svg>
<div class="abs" style="left:52px;top:119px;width:283px;height:878px;background:#e4e6f4;"></div>
<div class="abs" style="left:54px;top:120px;width:279px;height:29px;background:linear-gradient(#fdfdff,#dfe1f1);"></div>
<div class="abs" style="left:52px;top:119px;width:1px;height:878px;background:#a2a2ac;"></div><div class="abs" style="left:53px;top:119px;width:1px;height:877px;background:#d4d6e6;"></div>
<div class="abs" style="left:334px;top:119px;width:1px;height:878px;background:#a2a2ac;"></div><div class="abs" style="left:333px;top:119px;width:1px;height:877px;background:#d4d6e6;"></div>
<div class="abs" style="left:56px;top:148px;width:277px;height:848px;background:#fff;border:1px solid #a0a0a4;border-top:2px solid #a0a0a4;border-right-color:#e0e0ea;border-bottom-color:#e0e0ea;box-sizing:border-box;box-shadow:inset 1px 0 0 #6e6e74, inset -2px -2px 0 #d4d4de"></div>
<svg class="abs" style="left:59px;top:150px" width="272" height="844" viewBox="59 150 272 844" shape-rendering="crispEdges">
<line x1="72.5" y1="158" x2="79" y2="158" stroke="#8a8a8a" stroke-dasharray="1 1"/>
<rect x="63.5" y="154" width="8" height="8" fill="#fff" stroke="#848484"/>
<line x1="65.5" y1="158" x2="70.5" y2="158" stroke="#000"/>
<line x1="91.5" y1="174" x2="98" y2="174" stroke="#8a8a8a" stroke-dasharray="1 1"/>
<line x1="86.5" y1="165.5" x2="86.5" y2="168.5" stroke="#8a8a8a" stroke-dasharray="1 1"/>
<rect x="82.5" y="170" width="8" height="8" fill="#fff" stroke="#848484"/>
<line x1="84.5" y1="174" x2="89.5" y2="174" stroke="#000"/>
<line x1="105" y1="190" x2="117" y2="190" stroke="#8a8a8a" stroke-dasharray="1 1"/>
<line x1="105.5" y1="181.5" x2="105.5" y2="189.5" stroke="#8a8a8a" stroke-dasharray="1 1"/>
<line x1="110.5" y1="206" x2="117" y2="206" stroke="#8a8a8a" stroke-dasharray="1 1"/>
<line x1="105.5" y1="189.5" x2="105.5" y2="200.5" stroke="#8a8a8a" stroke-dasharray="1 1"/>
<rect x="101.5" y="202" width="8" height="8" fill="#fff" stroke="#848484"/>
<line x1="103.5" y1="206" x2="108.5" y2="206" stroke="#000"/>
<line x1="129.5" y1="222" x2="136" y2="222" stroke="#8a8a8a" stroke-dasharray="1 1"/>
<line x1="124.5" y1="213.5" x2="124.5" y2="216.5" stroke="#8a8a8a" stroke-dasharray="1 1"/>
<rect x="120.5" y="218" width="8" height="8" fill="#fff" stroke="#848484"/>
<line x1="122.5" y1="222" x2="127.5" y2="222" stroke="#000"/>
<line x1="143" y1="238" x2="155" y2="238" stroke="#8a8a8a" stroke-dasharray="1 1"/>
<line x1="143.5" y1="229.5" x2="143.5" y2="237.5" stroke="#8a8a8a" stroke-dasharray="1 1"/>
<line x1="143" y1="254" x2="155" y2="254" stroke="#8a8a8a" stroke-dasharray="1 1"/>
<line x1="143.5" y1="237.5" x2="143.5" y2="253.5" stroke="#8a8a8a" stroke-dasharray="1 1"/>
<line x1="143" y1="270" x2="155" y2="270" stroke="#8a8a8a" stroke-dasharray="1 1"/>
<line x1="143.5" y1="253.5" x2="143.5" y2="269.5" stroke="#8a8a8a" stroke-dasharray="1 1"/>
<line x1="105" y1="286" x2="117" y2="286" stroke="#8a8a8a" stroke-dasharray="1 1"/>
<line x1="105.5" y1="210.5" x2="105.5" y2="285.5" stroke="#8a8a8a" stroke-dasharray="1 1"/>
<line x1="105" y1="302" x2="117" y2="302" stroke="#8a8a8a" stroke-dasharray="1 1"/>
<line x1="105.5" y1="285.5" x2="105.5" y2="301.5" stroke="#8a8a8a" stroke-dasharray="1 1"/>
<line x1="91.5" y1="318" x2="98" y2="318" stroke="#8a8a8a" stroke-dasharray="1 1"/>
<line x1="86.5" y1="178.5" x2="86.5" y2="312.5" stroke="#8a8a8a" stroke-dasharray="1 1"/>
<rect x="82.5" y="314" width="8" height="8" fill="#fff" stroke="#848484"/>
<line x1="84.5" y1="318" x2="89.5" y2="318" stroke="#000"/>
<line x1="105" y1="334" x2="117" y2="334" stroke="#8a8a8a" stroke-dasharray="1 1"/>
<line x1="105.5" y1="325.5" x2="105.5" y2="333.5" stroke="#8a8a8a" stroke-dasharray="1 1"/>
<line x1="91.5" y1="350" x2="98" y2="350" stroke="#8a8a8a" stroke-dasharray="1 1"/>
<line x1="86.5" y1="322.5" x2="86.5" y2="344.5" stroke="#8a8a8a" stroke-dasharray="1 1"/>
<rect x="82.5" y="346" width="8" height="8" fill="#fff" stroke="#848484"/>
<line x1="84.5" y1="350" x2="89.5" y2="350" stroke="#000"/>
<line x1="105" y1="366" x2="117" y2="366" stroke="#8a8a8a" stroke-dasharray="1 1"/>
<line x1="105.5" y1="357.5" x2="105.5" y2="365.5" stroke="#8a8a8a" stroke-dasharray="1 1"/>
<line x1="91.5" y1="382" x2="98" y2="382" stroke="#8a8a8a" stroke-dasharray="1 1"/>
<line x1="86.5" y1="354.5" x2="86.5" y2="376.5" stroke="#8a8a8a" stroke-dasharray="1 1"/>
<rect x="82.5" y="378" width="8" height="8" fill="#fff" stroke="#848484"/>
<line x1="84.5" y1="382" x2="89.5" y2="382" stroke="#000"/>
<line x1="105" y1="398" x2="117" y2="398" stroke="#8a8a8a" stroke-dasharray="1 1"/>
<line x1="105.5" y1="389.5" x2="105.5" y2="397.5" stroke="#8a8a8a" stroke-dasharray="1 1"/>
<line x1="110.5" y1="414" x2="117" y2="414" stroke="#8a8a8a" stroke-dasharray="1 1"/>
<line x1="105.5" y1="397.5" x2="105.5" y2="408.5" stroke="#8a8a8a" stroke-dasharray="1 1"/>
<rect x="101.5" y="410" width="8" height="8" fill="#fff" stroke="#848484"/>
<line x1="103.5" y1="414" x2="108.5" y2="414" stroke="#000"/>
<line x1="124" y1="430" x2="136" y2="430" stroke="#8a8a8a" stroke-dasharray="1 1"/>
<line x1="124.5" y1="421.5" x2="124.5" y2="429.5" stroke="#8a8a8a" stroke-dasharray="1 1"/>
<line x1="105" y1="446" x2="117" y2="446" stroke="#8a8a8a" stroke-dasharray="1 1"/>
<line x1="105.5" y1="418.5" x2="105.5" y2="445.5" stroke="#8a8a8a" stroke-dasharray="1 1"/>
<line x1="105" y1="462" x2="117" y2="462" stroke="#8a8a8a" stroke-dasharray="1 1"/>
<line x1="105.5" y1="445.5" x2="105.5" y2="461.5" stroke="#8a8a8a" stroke-dasharray="1 1"/>
<line x1="105" y1="478" x2="117" y2="478" stroke="#8a8a8a" stroke-dasharray="1 1"/>
<line x1="105.5" y1="461.5" x2="105.5" y2="477.5" stroke="#8a8a8a" stroke-dasharray="1 1"/>
<line x1="91.5" y1="494" x2="98" y2="494" stroke="#8a8a8a" stroke-dasharray="1 1"/>
<line x1="86.5" y1="386.5" x2="86.5" y2="488.5" stroke="#8a8a8a" stroke-dasharray="1 1"/>
<rect x="82.5" y="490" width="8" height="8" fill="#fff" stroke="#848484"/>
<line x1="84.5" y1="494" x2="89.5" y2="494" stroke="#000"/>
<line x1="110.5" y1="510" x2="117" y2="510" stroke="#8a8a8a" stroke-dasharray="1 1"/>
<line x1="105.5" y1="501.5" x2="105.5" y2="504.5" stroke="#8a8a8a" stroke-dasharray="1 1"/>
<rect x="101.5" y="506" width="8" height="8" fill="#fff" stroke="#848484"/>
<line x1="103.5" y1="510" x2="108.5" y2="510" stroke="#000"/>
<line x1="129.5" y1="526" x2="136" y2="526" stroke="#8a8a8a" stroke-dasharray="1 1"/>
<line x1="124.5" y1="517.5" x2="124.5" y2="520.5" stroke="#8a8a8a" stroke-dasharray="1 1"/>
<rect x="120.5" y="522" width="8" height="8" fill="#fff" stroke="#848484"/>
<line x1="122.5" y1="526" x2="127.5" y2="526" stroke="#000"/>
<line x1="143" y1="542" x2="155" y2="542" stroke="#8a8a8a" stroke-dasharray="1 1"/>
<line x1="143.5" y1="533.5" x2="143.5" y2="541.5" stroke="#8a8a8a" stroke-dasharray="1 1"/>
<line x1="143" y1="558" x2="155" y2="558" stroke="#8a8a8a" stroke-dasharray="1 1"/>
<line x1="143.5" y1="541.5" x2="143.5" y2="557.5" stroke="#8a8a8a" stroke-dasharray="1 1"/>
<line x1="143" y1="574" x2="155" y2="574" stroke="#8a8a8a" stroke-dasharray="1 1"/>
<line x1="143.5" y1="557.5" x2="143.5" y2="573.5" stroke="#8a8a8a" stroke-dasharray="1 1"/>
<line x1="143" y1="590" x2="155" y2="590" stroke="#8a8a8a" stroke-dasharray="1 1"/>
<line x1="143.5" y1="573.5" x2="143.5" y2="589.5" stroke="#8a8a8a" stroke-dasharray="1 1"/>
<line x1="143" y1="606" x2="155" y2="606" stroke="#8a8a8a" stroke-dasharray="1 1"/>
<line x1="143.5" y1="589.5" x2="143.5" y2="605.5" stroke="#8a8a8a" stroke-dasharray="1 1"/>
<line x1="143" y1="622" x2="155" y2="622" stroke="#8a8a8a" stroke-dasharray="1 1"/>
<line x1="143.5" y1="605.5" x2="143.5" y2="621.5" stroke="#8a8a8a" stroke-dasharray="1 1"/>
<line x1="143" y1="638" x2="155" y2="638" stroke="#8a8a8a" stroke-dasharray="1 1"/>
<line x1="143.5" y1="621.5" x2="143.5" y2="637.5" stroke="#8a8a8a" stroke-dasharray="1 1"/>
<line x1="143" y1="654" x2="155" y2="654" stroke="#8a8a8a" stroke-dasharray="1 1"/>
<line x1="143.5" y1="637.5" x2="143.5" y2="653.5" stroke="#8a8a8a" stroke-dasharray="1 1"/>
<line x1="143" y1="670" x2="155" y2="670" stroke="#8a8a8a" stroke-dasharray="1 1"/>
<line x1="143.5" y1="653.5" x2="143.5" y2="669.5" stroke="#8a8a8a" stroke-dasharray="1 1"/>
<line x1="105" y1="686" x2="117" y2="686" stroke="#8a8a8a" stroke-dasharray="1 1"/>
<line x1="105.5" y1="514.5" x2="105.5" y2="685.5" stroke="#8a8a8a" stroke-dasharray="1 1"/>
<line x1="110.5" y1="702" x2="117" y2="702" stroke="#8a8a8a" stroke-dasharray="1 1"/>
<line x1="105.5" y1="685.5" x2="105.5" y2="696.5" stroke="#8a8a8a" stroke-dasharray="1 1"/>
<rect x="101.5" y="698" width="8" height="8" fill="#fff" stroke="#848484"/>
<line x1="103.5" y1="702" x2="108.5" y2="702" stroke="#000"/>
<line x1="129.5" y1="718" x2="136" y2="718" stroke="#8a8a8a" stroke-dasharray="1 1"/>
<line x1="124.5" y1="709.5" x2="124.5" y2="712.5" stroke="#8a8a8a" stroke-dasharray="1 1"/>
<rect x="120.5" y="714" width="8" height="8" fill="#fff" stroke="#848484"/>
<line x1="122.5" y1="718" x2="127.5" y2="718" stroke="#000"/>
<line x1="143" y1="734" x2="155" y2="734" stroke="#8a8a8a" stroke-dasharray="1 1"/>
<line x1="143.5" y1="725.5" x2="143.5" y2="733.5" stroke="#8a8a8a" stroke-dasharray="1 1"/>
<line x1="143" y1="750" x2="155" y2="750" stroke="#8a8a8a" stroke-dasharray="1 1"/>
<line x1="143.5" y1="733.5" x2="143.5" y2="749.5" stroke="#8a8a8a" stroke-dasharray="1 1"/>
<line x1="143" y1="766" x2="155" y2="766" stroke="#8a8a8a" stroke-dasharray="1 1"/>
<line x1="143.5" y1="749.5" x2="143.5" y2="765.5" stroke="#8a8a8a" stroke-dasharray="1 1"/>
<line x1="143" y1="782" x2="155" y2="782" stroke="#8a8a8a" stroke-dasharray="1 1"/>
<line x1="143.5" y1="765.5" x2="143.5" y2="781.5" stroke="#8a8a8a" stroke-dasharray="1 1"/>
<line x1="143" y1="798" x2="155" y2="798" stroke="#8a8a8a" stroke-dasharray="1 1"/>
<line x1="143.5" y1="781.5" x2="143.5" y2="797.5" stroke="#8a8a8a" stroke-dasharray="1 1"/>
<line x1="143" y1="814" x2="155" y2="814" stroke="#8a8a8a" stroke-dasharray="1 1"/>
<line x1="143.5" y1="797.5" x2="143.5" y2="813.5" stroke="#8a8a8a" stroke-dasharray="1 1"/>
<line x1="143" y1="830" x2="155" y2="830" stroke="#8a8a8a" stroke-dasharray="1 1"/>
<line x1="143.5" y1="813.5" x2="143.5" y2="829.5" stroke="#8a8a8a" stroke-dasharray="1 1"/>
<line x1="143" y1="846" x2="155" y2="846" stroke="#8a8a8a" stroke-dasharray="1 1"/>
<line x1="143.5" y1="829.5" x2="143.5" y2="845.5" stroke="#8a8a8a" stroke-dasharray="1 1"/>
<line x1="143" y1="862" x2="155" y2="862" stroke="#8a8a8a" stroke-dasharray="1 1"/>
<line x1="143.5" y1="845.5" x2="143.5" y2="861.5" stroke="#8a8a8a" stroke-dasharray="1 1"/>
<line x1="105" y1="878" x2="117" y2="878" stroke="#8a8a8a" stroke-dasharray="1 1"/>
<line x1="105.5" y1="706.5" x2="105.5" y2="877.5" stroke="#8a8a8a" stroke-dasharray="1 1"/>
<line x1="105" y1="894" x2="117" y2="894" stroke="#8a8a8a" stroke-dasharray="1 1"/>
<line x1="105.5" y1="877.5" x2="105.5" y2="893.5" stroke="#8a8a8a" stroke-dasharray="1 1"/>
<line x1="110.5" y1="910" x2="117" y2="910" stroke="#8a8a8a" stroke-dasharray="1 1"/>
<line x1="105.5" y1="893.5" x2="105.5" y2="904.5" stroke="#8a8a8a" stroke-dasharray="1 1"/>
<rect x="101.5" y="906" width="8" height="8" fill="#fff" stroke="#848484"/>
<line x1="103.5" y1="910" x2="108.5" y2="910" stroke="#000"/>
<line x1="124" y1="926" x2="136" y2="926" stroke="#8a8a8a" stroke-dasharray="1 1"/>
<line x1="124.5" y1="917.5" x2="124.5" y2="925.5" stroke="#8a8a8a" stroke-dasharray="1 1"/>
<line x1="105" y1="942" x2="117" y2="942" stroke="#8a8a8a" stroke-dasharray="1 1"/>
<line x1="105.5" y1="914.5" x2="105.5" y2="941.5" stroke="#8a8a8a" stroke-dasharray="1 1"/>
</svg>
<svg class="abs" style="left:78px;top:149.5px" width="16" height="16" viewBox="0 0 16 16"><rect x="0" y="0" width="16" height="16" fill="#1f7fb8" /><path d="M0 10C5 8 9 4 10 0M0 14C8 12 13 7 15 0M6 16C8 12 12 9 16 8" fill="none" stroke="#bfe4f7" stroke-width="1.2" /><path d="M2 0L16 14M16 2L4 16" fill="none" stroke="#fff" stroke-width="1.3" /></svg>
<div class="t " style="left:99px;top:152px;font-size:11.3px;color:#000;letter-spacing:-0.3px">EM.Libera: MOM3D Module</div>
<svg class="abs" style="left:97px;top:165.5px" width="16" height="16" viewBox="0 0 16 16"><path d="M0.5 11.5L6.5 7H15.5L9.5 15.5Z" fill="#eeb0c0" stroke="#c87890" stroke-width="0.8" /><path d="M3 11.5L6 9.5L8.5 11L5.5 13ZM9 11.5L11.5 9.5L14 10.5L11 13Z" fill="#fff" /><path d="M1 12.5L9.5 16L15.5 8V9.5L9.5 16" fill="none" stroke="#c05050" stroke-width="0.7" /><rect x="5.5" y="1" width="4" height="9.5" fill="#2a7ab8" /><path d="M9.5 1L11.5 3.5V10.5L9.5 10.5Z" fill="#86c0e4" /><path d="M3.5 9.5L5.5 4.5V10.5Z" fill="#e090a0" /></svg>
<div class="t " style="left:118px;top:168px;font-size:11.3px;color:#000;letter-spacing:-0.3px">Physical Structure</div>
<svg class="abs" style="left:116px;top:181.5px" width="16" height="16" viewBox="0 0 16 16"><rect x="1" y="1" width="9" height="9" fill="#f0a020" stroke="#8a3010" stroke-width="1" /><rect x="4" y="4" width="9" height="9" fill="#e85030" stroke="#8a3010" stroke-width="1" /><rect x="7" y="7" width="8" height="8" fill="#f8a080" stroke="#8a3010" stroke-width="1" /><rect x="2.5" y="8" width="3" height="4" fill="#f8e040" /></svg>
<div class="t " style="left:137px;top:184px;font-size:11.3px;color:#000;letter-spacing:-0.3px">PEC Objects</div>
<svg class="abs" style="left:116px;top:197.5px" width="16" height="16" viewBox="0 0 16 16"><rect x="1" y="3" width="8" height="9" fill="#fff" stroke="#333" stroke-width="1" /><rect x="4" y="0.5" width="7" height="9" fill="#fff" stroke="#333" stroke-width="1" /><rect x="7" y="5" width="8" height="10.5" fill="#fff" stroke="#333" stroke-width="1" /><path d="M5.5 1V9M9.5 5.5V15M12.5 5.5V15" fill="none" stroke="#e03020" stroke-width="1.4" /></svg>
<div class="t " style="left:137px;top:200px;font-size:11.3px;color:#000;letter-spacing:-0.3px">Thin Wires</div>
<svg class="abs" style="left:136.5px;top:215px" width="13" height="13" viewBox="0 0 16 16"><rect x="2" y="2" width="8" height="9" fill="#f0a020" stroke="#a04020" stroke-width="0.8" /><rect x="4.5" y="4" width="8" height="9.5" fill="#e85838" stroke="#a04020" stroke-width="0.8" /><rect x="6" y="6" width="5" height="6" fill="#f8a888" /></svg>
<div class="t " style="left:156px;top:216px;font-size:11.3px;color:#000;font-weight:bold;letter-spacing:-0.3px">YAGI</div>
<svg class="abs" style="left:154px;top:229.5px" width="16" height="16" viewBox="0 0 16 16"><path d="M3.5 13.5L14.5 2.5" fill="none" stroke="#333" stroke-width="0.9" /><rect x="2.5" y="13" width="1.5" height="1.5" fill="#1c1c1c" /><rect x="14" y="2" width="1.2" height="1.2" fill="#1c1c1c" /></svg>
<div class="t " style="left:175px;top:232px;font-size:11.3px;color:#000;letter-spacing:-0.3px">Exciter</div>
<svg class="abs" style="left:154px;top:245.5px" width="16" height="16" viewBox="0 0 16 16"><path d="M3.5 13.5L14.5 2.5" fill="none" stroke="#333" stroke-width="0.9" /><rect x="2.5" y="13" width="1.5" height="1.5" fill="#1c1c1c" /><rect x="14" y="2" width="1.2" height="1.2" fill="#1c1c1c" /></svg>
<div class="t " style="left:175px;top:248px;font-size:11.3px;color:#000;letter-spacing:-0.3px">Reflector</div>
<svg class="abs" style="left:154px;top:261.5px" width="16" height="16" viewBox="0 0 16 16"><rect x="1" y="1" width="6" height="6" fill="#8c8c8c" stroke="#666" stroke-width="0.6" stroke-dasharray="1 1"/><rect x="9" y="1" width="6" height="6" fill="#8c8c8c" stroke="#666" stroke-width="0.6" stroke-dasharray="1 1"/><rect x="1" y="9" width="6" height="6" fill="#8c8c8c" stroke="#666" stroke-width="0.6" stroke-dasharray="1 1"/><rect x="9" y="9" width="6" height="6" fill="#8c8c8c" stroke="#666" stroke-width="0.6" stroke-dasharray="1 1"/></svg>
<div class="t " style="left:175px;top:264px;font-size:11.3px;color:#000;letter-spacing:-0.3px">Director_array</div>
<svg class="abs" style="left:116px;top:277.5px" width="16" height="16" viewBox="0 0 16 16"><rect x="1" y="1" width="9" height="9" fill="#4a8a30" stroke="#203810" stroke-width="1" /><rect x="4" y="4" width="9" height="9" fill="#70b030" stroke="#203810" stroke-width="1" /><rect x="7" y="7" width="8" height="8" fill="#a8e040" stroke="#203810" stroke-width="1" /><rect x="2.5" y="8" width="3" height="4" fill="#d8d8d8" /></svg>
<div class="t " style="left:137px;top:280px;font-size:11.3px;color:#000;letter-spacing:-0.3px">Dielectric Objects</div>
<svg class="abs" style="left:116px;top:293.5px" width="16" height="16" viewBox="0 0 16 16"><rect x="1.5" y="3.5" width="8" height="8" fill="#fff" stroke="#333" stroke-width="0.9" stroke-dasharray="1 1"/><rect x="4.5" y="0.5" width="7" height="8" fill="#fff" stroke="#a04040" stroke-width="0.9" stroke-dasharray="1 1"/><rect x="7.5" y="6.5" width="8" height="9" fill="#fff" stroke="#333" stroke-width="0.9" stroke-dasharray="1 1"/></svg>
<div class="t " style="left:137px;top:296px;font-size:11.3px;color:#000;letter-spacing:-0.3px">Virtual Objects</div>
<svg class="abs" style="left:97px;top:309.5px" width="16" height="16" viewBox="0 0 16 16"><path d="M5.5 2.5H14.5V10.5H5.5Z" fill="#d8dcd8" /><path d="M1.5 6.5H10.5V14.5H1.5ZM1.5 6.5L5.5 2.5H14.5V10.5L10.5 14.5M10.5 6.5L14.5 2.5M5.5 2.5V10.5H14.5M5.5 10.5L1.5 14.5" fill="none" stroke="#1a1a50" stroke-width="1.1" /></svg>
<div class="t " style="left:118px;top:312px;font-size:11.3px;color:#000;letter-spacing:-0.3px">Computational Domain</div>
<svg class="abs" style="left:116px;top:325.5px" width="16" height="16" viewBox="0 0 16 16"><path d="M5.5 2.5H14.5V10.5H5.5Z" fill="#d0d8d0" /><path d="M1.5 6.5H10.5V14.5H1.5ZM1.5 6.5L5.5 2.5H14.5V10.5L10.5 14.5M10.5 6.5L14.5 2.5M5.5 2.5V10.5H14.5M5.5 10.5L1.5 14.5" fill="none" stroke="#444" stroke-width="1.1" stroke-dasharray="1 1"/></svg>
<div class="t " style="left:137px;top:328px;font-size:11.3px;color:#000;letter-spacing:-0.3px">Virtual Domain</div>
<svg class="abs" style="left:97px;top:341.5px" width="16" height="16" viewBox="0 0 16 16"><rect x="0" y="0" width="16" height="16" fill="#a8cce8" /><rect x="0" y="0" width="16" height="3.5" fill="#2a6a9a" /><path d="M4 0V16M8 0V16M12 0V16M0 7.5H16M0 11.5H16" fill="none" stroke="#d8e8f4" stroke-width="0.9" /></svg>
<div class="t " style="left:118px;top:344px;font-size:11.3px;color:#000;letter-spacing:-0.3px">Discretization</div>
<svg class="abs" style="left:117.5px;top:359px" width="13" height="13" viewBox="0 0 16 16"><rect x="2" y="2" width="12" height="12" fill="#9cc4e0" /><path d="M6 2V14M10 2V14M2 6H14M2 10H14" fill="none" stroke="#dcecf8" stroke-width="1" /><rect x="2" y="2" width="12" height="2.5" fill="#5a94be" /></svg>
<div class="t " style="left:137px;top:360px;font-size:11.3px;color:#000;letter-spacing:-0.3px">3D Mesh</div>
<svg class="abs" style="left:97px;top:373.5px" width="16" height="16" viewBox="0 0 16 16"><circle cx="8" cy="8" r="7" fill="#fff" stroke="#1c1c1c" stroke-width="1.3"/><path d="M3.5 8C4.5 3.5 7 3.5 8 8C9 12.5 11.5 12.5 12.5 8" fill="none" stroke="#d02010" stroke-width="1.3" /></svg>
<div class="t " style="left:118px;top:376px;font-size:11.3px;color:#000;letter-spacing:-0.3px">Sources</div>
<svg class="abs" style="left:116px;top:389.5px" width="16" height="16" viewBox="0 0 16 16"><rect x="2" y="0" width="12" height="16" fill="#b4b4b4" /><path d="M8 8V15.5" fill="none" stroke="#444" stroke-width="2" /><path d="M8 1L14 8.5H2Z" fill="#f0a000" /><path d="M8 2.5L11.5 7.5H4.5Z" fill="#ffd060" /></svg>
<div class="t " style="left:137px;top:392px;font-size:11.3px;color:#000;letter-spacing:-0.3px">Strip Gap Circuits</div>
<svg class="abs" style="left:116px;top:405.5px" width="16" height="16" viewBox="0 0 16 16"><path d="M8 8V15.5" fill="none" stroke="#1c1c1c" stroke-width="2" /><path d="M8 1L14 8.5H2Z" fill="#f0a000" /><path d="M8 2.5L11.5 7.5H4.5Z" fill="#ffd060" /></svg>
<div class="t " style="left:137px;top:408px;font-size:11.3px;color:#000;letter-spacing:-0.3px">Wire Gap Circuits</div>
<svg class="abs" style="left:135px;top:421.5px" width="16" height="16" viewBox="0 0 16 16"><rect x="2" y="0" width="12" height="16" fill="#b4b4b4" /><path d="M8 8V15.5" fill="none" stroke="#444" stroke-width="2" /><path d="M8 1L14 8.5H2Z" fill="#f0a000" /><path d="M8 2.5L11.5 7.5H4.5Z" fill="#ffd060" /></svg>
<div class="t " style="left:156px;top:424px;font-size:11.3px;color:#000;letter-spacing:-0.3px">LC_1</div>
<svg class="abs" style="left:116px;top:437.5px" width="16" height="16" viewBox="0 0 16 16"><path d="M8 7V15" fill="none" stroke="#1c1c1c" stroke-width="1.6" /><path d="M8 2L12.5 7.5H3.5Z" fill="#8a1010" /></svg>
<div class="t " style="left:137px;top:440px;font-size:11.3px;color:#000;letter-spacing:-0.3px">Hertzian Short Dipoles</div>
<svg class="abs" style="left:116px;top:453.5px" width="16" height="16" viewBox="0 0 16 16"><path d="M5.5 2.5H14.5V10.5H5.5Z" fill="#d8d8d8" /><path d="M1.5 6.5H10.5V14.5H1.5ZM1.5 6.5L5.5 2.5H14.5V10.5L10.5 14.5M10.5 6.5L14.5 2.5M5.5 2.5V10.5H14.5M5.5 10.5L1.5 14.5" fill="none" stroke="#c020c0" stroke-width="1.1" /><path d="M1.5 14.5H10.5V6.5" fill="none" stroke="#201060" stroke-width="1.2" /></svg>
<div class="t " style="left:137px;top:456px;font-size:11.3px;color:#000;letter-spacing:-0.3px">Plane Waves</div>
<svg class="abs" style="left:116px;top:469.5px" width="16" height="16" viewBox="0 0 16 16"><path d="M5.5 2.5H14.5V10.5H5.5Z" fill="#f0e8e8" /><path d="M1.5 6.5H10.5V14.5H1.5ZM1.5 6.5L5.5 2.5H14.5V10.5L10.5 14.5M10.5 6.5L14.5 2.5M5.5 2.5V10.5H14.5M5.5 10.5L1.5 14.5" fill="none" stroke="#e01010" stroke-width="1.1" /></svg>
<div class="t " style="left:137px;top:472px;font-size:11.3px;color:#000;letter-spacing:-0.3px">Huygens Sources</div>
<svg class="abs" style="left:97px;top:485.5px" width="16" height="16" viewBox="0 0 16 16"><rect x="0" y="0" width="16" height="16" fill="#9a9a90" /><path d="M0 16V12C2 12 3 5 5 5C7 5 7.5 11 9 11C11 11 11.5 2 13 2C14.5 2 15 6 16 9V16Z" fill="#7cc040" /><path d="M0 12C2 12 3 5 5 5C7 5 7.5 11 9 11C11 11 11.5 2 13 2C14.5 2 15 6 16 9" fill="none" stroke="#e8f8c0" stroke-width="1" /></svg>
<div class="t " style="left:118px;top:488px;font-size:11.3px;color:#000;letter-spacing:-0.3px">Observables</div>
<svg class="abs" style="left:116px;top:501.5px" width="16" height="16" viewBox="0 0 16 16"><path d="M1 4.5L9 1L15 3.5L7.5 7.5Z" fill="#c8c8c0" stroke="#666" stroke-width="0.6" /><path d="M1 4.5L7.5 7.5V15.5L1 11.5Z" fill="#707070" /><path d="M7.5 7.5L15 3.5V6L7.5 10Z" fill="#e8e8e0" /><path d="M7.5 10L15 6V8.5L7.5 12.5Z" fill="#f0d020" /><path d="M7.5 12.5L15 8.5V11L7.5 15.5Z" fill="#c030b0" /><path d="M3 5.5L10 2M5 6.5L12 2.8" fill="none" stroke="#888" stroke-width="0.6" /></svg>
<div class="t " style="left:137px;top:504px;font-size:11.3px;color:#000;letter-spacing:-0.3px">Current Distributions</div>
<svg class="abs" style="left:135px;top:517.5px" width="16" height="16" viewBox="0 0 16 16"><path d="M1 4.5L9 1L15 3.5L7.5 7.5Z" fill="#c8c8c0" stroke="#666" stroke-width="0.6" /><path d="M1 4.5L7.5 7.5V15.5L1 11.5Z" fill="#707070" /><path d="M7.5 7.5L15 3.5V6L7.5 10Z" fill="#e8e8e0" /><path d="M7.5 10L15 6V8.5L7.5 12.5Z" fill="#f0d020" /><path d="M7.5 12.5L15 8.5V11L7.5 15.5Z" fill="#c030b0" /><path d="M3 5.5L10 2M5 6.5L12 2.8" fill="none" stroke="#888" stroke-width="0.6" /></svg>
<div class="t " style="left:156px;top:520px;font-size:11.3px;color:#000;letter-spacing:-0.3px">CD_1</div>
<svg class="abs" style="left:154px;top:533.5px" width="16" height="16" viewBox="0 0 16 16"><path d="M1 2V14M15 2V14" fill="none" stroke="#1c1c1c" stroke-width="1" /><text x="2.2" y="12.5" font-size="11" fill="#1c1c1c" font-family="Liberation Sans,sans-serif" font-weight="bold">J</text><text x="9" y="12.5" font-size="8" fill="#1c1c1c" font-family="Liberation Sans,sans-serif" font-weight="bold">s</text></svg>
<div class="t " style="left:175px;top:536px;font-size:11.3px;color:#000;letter-spacing:-0.3px">JsMagTotal.Var1</div>
<svg class="abs" style="left:154px;top:549.5px" width="16" height="16" viewBox="0 0 16 16"><path d="M1 2V14M15 2V14" fill="none" stroke="#1c1c1c" stroke-width="1" /><text x="2.2" y="12.5" font-size="11" fill="#1c1c1c" font-family="Liberation Sans,sans-serif" font-weight="bold">J</text><text x="9" y="12.5" font-size="8" fill="#1c1c1c" font-family="Liberation Sans,sans-serif" font-weight="bold">s</text></svg>
<div class="t " style="left:175px;top:552px;font-size:11.3px;color:#000;letter-spacing:-0.3px">JsMagTotal.Var2</div>
<svg class="abs" style="left:154px;top:565.5px" width="16" height="16" viewBox="0 0 16 16"><path d="M1 2V14M15 2V14" fill="none" stroke="#1c1c1c" stroke-width="1" /><text x="2.2" y="12.5" font-size="11" fill="#1c1c1c" font-family="Liberation Sans,sans-serif" font-weight="bold">J</text><text x="9" y="12.5" font-size="8" fill="#1c1c1c" font-family="Liberation Sans,sans-serif" font-weight="bold">s</text></svg>
<div class="t " style="left:175px;top:568px;font-size:11.3px;color:#000;letter-spacing:-0.3px">JsMagTotal.Var3</div>
<svg class="abs" style="left:154px;top:581.5px" width="16" height="16" viewBox="0 0 16 16"><path d="M1 2V14M15 2V14" fill="none" stroke="#1c1c1c" stroke-width="1" /><text x="2.2" y="12.5" font-size="11" fill="#1c1c1c" font-family="Liberation Sans,sans-serif" font-weight="bold">J</text><text x="9" y="12.5" font-size="8" fill="#1c1c1c" font-family="Liberation Sans,sans-serif" font-weight="bold">s</text></svg>
<div class="t " style="left:175px;top:584px;font-size:11.3px;color:#000;letter-spacing:-0.3px">JsMagTotal.Var4</div>
<svg class="abs" style="left:154px;top:597.5px" width="16" height="16" viewBox="0 0 16 16"><path d="M1 2V14M15 2V14" fill="none" stroke="#1c1c1c" stroke-width="1" /><text x="2.2" y="12.5" font-size="11" fill="#1c1c1c" font-family="Liberation Sans,sans-serif" font-weight="bold">J</text><text x="9" y="12.5" font-size="8" fill="#1c1c1c" font-family="Liberation Sans,sans-serif" font-weight="bold">s</text></svg>
<div class="t " style="left:175px;top:600px;font-size:11.3px;color:#000;letter-spacing:-0.3px">JsMagTotal.Var5</div>
<svg class="abs" style="left:154px;top:613.5px" width="16" height="16" viewBox="0 0 16 16"><path d="M1 2V14M15 2V14" fill="none" stroke="#1c1c1c" stroke-width="1" /><text x="2.2" y="12.5" font-size="11" fill="#1c1c1c" font-family="Liberation Sans,sans-serif" font-weight="bold">J</text><text x="9" y="12.5" font-size="8" fill="#1c1c1c" font-family="Liberation Sans,sans-serif" font-weight="bold">s</text></svg>
<div class="t " style="left:175px;top:616px;font-size:11.3px;color:#000;letter-spacing:-0.3px">JsMagTotal.Var6</div>
<svg class="abs" style="left:154px;top:629.5px" width="16" height="16" viewBox="0 0 16 16"><path d="M1 2V14M15 2V14" fill="none" stroke="#1c1c1c" stroke-width="1" /><text x="2.2" y="12.5" font-size="11" fill="#1c1c1c" font-family="Liberation Sans,sans-serif" font-weight="bold">J</text><text x="9" y="12.5" font-size="8" fill="#1c1c1c" font-family="Liberation Sans,sans-serif" font-weight="bold">s</text></svg>
<div class="t " style="left:175px;top:632px;font-size:11.3px;color:#000;letter-spacing:-0.3px">JsMagTotal.Var7</div>
<svg class="abs" style="left:154px;top:645.5px" width="16" height="16" viewBox="0 0 16 16"><path d="M1 2V14M15 2V14" fill="none" stroke="#1c1c1c" stroke-width="1" /><text x="2.2" y="12.5" font-size="11" fill="#1c1c1c" font-family="Liberation Sans,sans-serif" font-weight="bold">J</text><text x="9" y="12.5" font-size="8" fill="#1c1c1c" font-family="Liberation Sans,sans-serif" font-weight="bold">s</text></svg>
<div class="t " style="left:175px;top:648px;font-size:11.3px;color:#000;letter-spacing:-0.3px">JsMagTotal.Var8</div>
<svg class="abs" style="left:154px;top:661.5px" width="16" height="16" viewBox="0 0 16 16"><path d="M1 2V14M15 2V14" fill="none" stroke="#1c1c1c" stroke-width="1" /><text x="2.2" y="12.5" font-size="11" fill="#1c1c1c" font-family="Liberation Sans,sans-serif" font-weight="bold">J</text><text x="9" y="12.5" font-size="8" fill="#1c1c1c" font-family="Liberation Sans,sans-serif" font-weight="bold">s</text></svg>
<div class="t " style="left:175px;top:664px;font-size:11.3px;color:#000;letter-spacing:-0.3px">JsMagTotal.Var9</div>
<svg class="abs" style="left:116px;top:677.5px" width="16" height="16" viewBox="0 0 16 16"><path d="M1 6L4 3V13L1 16Z" fill="#e8f0e8" stroke="#80a080" stroke-width="0.6" /><path d="M4 5L7 2V12L4 15Z" fill="#e8f0e8" stroke="#80a080" stroke-width="0.6" /><path d="M7 4.5L10 1.5V11.5L7 14.5Z" fill="#f0d020" /><path d="M9.5 4L12.5 1V11L9.5 14Z" fill="#2020c0" /><path d="M12 3.5L15 0.5V10.5L12 13.5Z" fill="#c02080" /></svg>
<div class="t " style="left:137px;top:680px;font-size:11.3px;color:#000;letter-spacing:-0.3px">Near-Field Sensors</div>
<svg class="abs" style="left:116px;top:693.5px" width="16" height="16" viewBox="0 0 16 16"><ellipse cx="8" cy="3.8" rx="2.6" ry="3.9" fill="#f5c21a" stroke="#e08a10" stroke-width="0.7" transform="rotate(35 8 8)"/><ellipse cx="8" cy="3.8" rx="2.6" ry="3.9" fill="#f5c21a" stroke="#e08a10" stroke-width="0.7" transform="rotate(125 8 8)"/><ellipse cx="8" cy="3.8" rx="2.6" ry="3.9" fill="#f5c21a" stroke="#e08a10" stroke-width="0.7" transform="rotate(215 8 8)"/><ellipse cx="8" cy="3.8" rx="2.6" ry="3.9" fill="#f5c21a" stroke="#e08a10" stroke-width="0.7" transform="rotate(305 8 8)"/><path d="M3 13L13 3" fill="none" stroke="#c03030" stroke-width="0.8" /><path d="M8 2V14M2 8H14" fill="none" stroke="#2080c0" stroke-width="0.8" /></svg>
<div class="t " style="left:137px;top:696px;font-size:11.3px;color:#000;letter-spacing:-0.3px">Far-Field Radiation Patterns</div>
<svg class="abs" style="left:135px;top:709.5px" width="16" height="16" viewBox="0 0 16 16"><ellipse cx="8" cy="3.8" rx="2.6" ry="3.9" fill="#f5c21a" stroke="#e08a10" stroke-width="0.7" transform="rotate(35 8 8)"/><ellipse cx="8" cy="3.8" rx="2.6" ry="3.9" fill="#f5c21a" stroke="#e08a10" stroke-width="0.7" transform="rotate(125 8 8)"/><ellipse cx="8" cy="3.8" rx="2.6" ry="3.9" fill="#f5c21a" stroke="#e08a10" stroke-width="0.7" transform="rotate(215 8 8)"/><ellipse cx="8" cy="3.8" rx="2.6" ry="3.9" fill="#f5c21a" stroke="#e08a10" stroke-width="0.7" transform="rotate(305 8 8)"/><path d="M3 13L13 3" fill="none" stroke="#c03030" stroke-width="0.8" /><path d="M8 2V14M2 8H14" fill="none" stroke="#2080c0" stroke-width="0.8" /></svg>
<div class="t " style="left:156px;top:712px;font-size:11.3px;color:#000;letter-spacing:-0.3px">FF_1</div>
<svg class="abs" style="left:154px;top:725.5px" width="16" height="16" viewBox="0 0 16 16"><ellipse cx="8" cy="3.8" rx="2.6" ry="3.9" fill="#f5c21a" stroke="#e08a10" stroke-width="0.7" transform="rotate(35 8 8)"/><ellipse cx="8" cy="3.8" rx="2.6" ry="3.9" fill="#f5c21a" stroke="#e08a10" stroke-width="0.7" transform="rotate(125 8 8)"/><ellipse cx="8" cy="3.8" rx="2.6" ry="3.9" fill="#f5c21a" stroke="#e08a10" stroke-width="0.7" transform="rotate(215 8 8)"/><ellipse cx="8" cy="3.8" rx="2.6" ry="3.9" fill="#f5c21a" stroke="#e08a10" stroke-width="0.7" transform="rotate(305 8 8)"/><path d="M3 13L13 3" fill="none" stroke="#c03030" stroke-width="0.8" /><path d="M8 2V14M2 8H14" fill="none" stroke="#2080c0" stroke-width="0.8" /></svg>
<div class="t " style="left:175px;top:728px;font-size:11.3px;color:#000;letter-spacing:-0.3px">FF_1.3D.Total.Param.1</div>
<svg class="abs" style="left:154px;top:741.5px" width="16" height="16" viewBox="0 0 16 16"><ellipse cx="8" cy="3.8" rx="2.6" ry="3.9" fill="#f5c21a" stroke="#e08a10" stroke-width="0.7" transform="rotate(35 8 8)"/><ellipse cx="8" cy="3.8" rx="2.6" ry="3.9" fill="#f5c21a" stroke="#e08a10" stroke-width="0.7" transform="rotate(125 8 8)"/><ellipse cx="8" cy="3.8" rx="2.6" ry="3.9" fill="#f5c21a" stroke="#e08a10" stroke-width="0.7" transform="rotate(215 8 8)"/><ellipse cx="8" cy="3.8" rx="2.6" ry="3.9" fill="#f5c21a" stroke="#e08a10" stroke-width="0.7" transform="rotate(305 8 8)"/><path d="M3 13L13 3" fill="none" stroke="#c03030" stroke-width="0.8" /><path d="M8 2V14M2 8H14" fill="none" stroke="#2080c0" stroke-width="0.8" /></svg>
<div class="t " style="left:175px;top:744px;font-size:11.3px;color:#000;letter-spacing:-0.3px">FF_1.3D.Total.Param.2</div>
<svg class="abs" style="left:154px;top:757.5px" width="16" height="16" viewBox="0 0 16 16"><ellipse cx="8" cy="3.8" rx="2.6" ry="3.9" fill="#f5c21a" stroke="#e08a10" stroke-width="0.7" transform="rotate(35 8 8)"/><ellipse cx="8" cy="3.8" rx="2.6" ry="3.9" fill="#f5c21a" stroke="#e08a10" stroke-width="0.7" transform="rotate(125 8 8)"/><ellipse cx="8" cy="3.8" rx="2.6" ry="3.9" fill="#f5c21a" stroke="#e08a10" stroke-width="0.7" transform="rotate(215 8 8)"/><ellipse cx="8" cy="3.8" rx="2.6" ry="3.9" fill="#f5c21a" stroke="#e08a10" stroke-width="0.7" transform="rotate(305 8 8)"/><path d="M3 13L13 3" fill="none" stroke="#c03030" stroke-width="0.8" /><path d="M8 2V14M2 8H14" fill="none" stroke="#2080c0" stroke-width="0.8" /></svg>
<div class="t " style="left:175px;top:760px;font-size:11.3px;color:#000;letter-spacing:-0.3px">FF_1.3D.Total.Param.3</div>
<svg class="abs" style="left:154px;top:773.5px" width="16" height="16" viewBox="0 0 16 16"><ellipse cx="8" cy="3.8" rx="2.6" ry="3.9" fill="#f5c21a" stroke="#e08a10" stroke-width="0.7" transform="rotate(35 8 8)"/><ellipse cx="8" cy="3.8" rx="2.6" ry="3.9" fill="#f5c21a" stroke="#e08a10" stroke-width="0.7" transform="rotate(125 8 8)"/><ellipse cx="8" cy="3.8" rx="2.6" ry="3.9" fill="#f5c21a" stroke="#e08a10" stroke-width="0.7" transform="rotate(215 8 8)"/><ellipse cx="8" cy="3.8" rx="2.6" ry="3.9" fill="#f5c21a" stroke="#e08a10" stroke-width="0.7" transform="rotate(305 8 8)"/><path d="M3 13L13 3" fill="none" stroke="#c03030" stroke-width="0.8" /><path d="M8 2V14M2 8H14" fill="none" stroke="#2080c0" stroke-width="0.8" /></svg>
<div class="t " style="left:175px;top:776px;font-size:11.3px;color:#000;letter-spacing:-0.3px">FF_1.3D.Total.Param.4</div>
<svg class="abs" style="left:154px;top:789.5px" width="16" height="16" viewBox="0 0 16 16"><ellipse cx="8" cy="3.8" rx="2.6" ry="3.9" fill="#f5c21a" stroke="#e08a10" stroke-width="0.7" transform="rotate(35 8 8)"/><ellipse cx="8" cy="3.8" rx="2.6" ry="3.9" fill="#f5c21a" stroke="#e08a10" stroke-width="0.7" transform="rotate(125 8 8)"/><ellipse cx="8" cy="3.8" rx="2.6" ry="3.9" fill="#f5c21a" stroke="#e08a10" stroke-width="0.7" transform="rotate(215 8 8)"/><ellipse cx="8" cy="3.8" rx="2.6" ry="3.9" fill="#f5c21a" stroke="#e08a10" stroke-width="0.7" transform="rotate(305 8 8)"/><path d="M3 13L13 3" fill="none" stroke="#c03030" stroke-width="0.8" /><path d="M8 2V14M2 8H14" fill="none" stroke="#2080c0" stroke-width="0.8" /></svg>
<div class="t " style="left:175px;top:792px;font-size:11.3px;color:#000;letter-spacing:-0.3px">FF_1.3D.Total.Param.5</div>
<svg class="abs" style="left:154px;top:805.5px" width="16" height="16" viewBox="0 0 16 16"><ellipse cx="8" cy="3.8" rx="2.6" ry="3.9" fill="#f5c21a" stroke="#e08a10" stroke-width="0.7" transform="rotate(35 8 8)"/><ellipse cx="8" cy="3.8" rx="2.6" ry="3.9" fill="#f5c21a" stroke="#e08a10" stroke-width="0.7" transform="rotate(125 8 8)"/><ellipse cx="8" cy="3.8" rx="2.6" ry="3.9" fill="#f5c21a" stroke="#e08a10" stroke-width="0.7" transform="rotate(215 8 8)"/><ellipse cx="8" cy="3.8" rx="2.6" ry="3.9" fill="#f5c21a" stroke="#e08a10" stroke-width="0.7" transform="rotate(305 8 8)"/><path d="M3 13L13 3" fill="none" stroke="#c03030" stroke-width="0.8" /><path d="M8 2V14M2 8H14" fill="none" stroke="#2080c0" stroke-width="0.8" /></svg>
<div class="abs" style="left:173px;top:806px;width:115px;height:15px;background:#0a64d2;outline:1px dotted #e8a040;outline-offset:-1px"></div>
<div class="t " style="left:175px;top:808px;font-size:11.3px;color:#fff;letter-spacing:-0.3px">FF_1.3D.Total.Param.6</div>
<svg class="abs" style="left:154px;top:821.5px" width="16" height="16" viewBox="0 0 16 16"><ellipse cx="8" cy="3.8" rx="2.6" ry="3.9" fill="#f5c21a" stroke="#e08a10" stroke-width="0.7" transform="rotate(35 8 8)"/><ellipse cx="8" cy="3.8" rx="2.6" ry="3.9" fill="#f5c21a" stroke="#e08a10" stroke-width="0.7" transform="rotate(125 8 8)"/><ellipse cx="8" cy="3.8" rx="2.6" ry="3.9" fill="#f5c21a" stroke="#e08a10" stroke-width="0.7" transform="rotate(215 8 8)"/><ellipse cx="8" cy="3.8" rx="2.6" ry="3.9" fill="#f5c21a" stroke="#e08a10" stroke-width="0.7" transform="rotate(305 8 8)"/><path d="M3 13L13 3" fill="none" stroke="#c03030" stroke-width="0.8" /><path d="M8 2V14M2 8H14" fill="none" stroke="#2080c0" stroke-width="0.8" /></svg>
<div class="t " style="left:175px;top:824px;font-size:11.3px;color:#000;letter-spacing:-0.3px">FF_1.3D.Total.Param.7</div>
<svg class="abs" style="left:154px;top:837.5px" width="16" height="16" viewBox="0 0 16 16"><ellipse cx="8" cy="3.8" rx="2.6" ry="3.9" fill="#f5c21a" stroke="#e08a10" stroke-width="0.7" transform="rotate(35 8 8)"/><ellipse cx="8" cy="3.8" rx="2.6" ry="3.9" fill="#f5c21a" stroke="#e08a10" stroke-width="0.7" transform="rotate(125 8 8)"/><ellipse cx="8" cy="3.8" rx="2.6" ry="3.9" fill="#f5c21a" stroke="#e08a10" stroke-width="0.7" transform="rotate(215 8 8)"/><ellipse cx="8" cy="3.8" rx="2.6" ry="3.9" fill="#f5c21a" stroke="#e08a10" stroke-width="0.7" transform="rotate(305 8 8)"/><path d="M3 13L13 3" fill="none" stroke="#c03030" stroke-width="0.8" /><path d="M8 2V14M2 8H14" fill="none" stroke="#2080c0" stroke-width="0.8" /></svg>
<div class="t " style="left:175px;top:840px;font-size:11.3px;color:#000;letter-spacing:-0.3px">FF_1.3D.Total.Param.8</div>
<svg class="abs" style="left:154px;top:853.5px" width="16" height="16" viewBox="0 0 16 16"><ellipse cx="8" cy="3.8" rx="2.6" ry="3.9" fill="#f5c21a" stroke="#e08a10" stroke-width="0.7" transform="rotate(35 8 8)"/><ellipse cx="8" cy="3.8" rx="2.6" ry="3.9" fill="#f5c21a" stroke="#e08a10" stroke-width="0.7" transform="rotate(125 8 8)"/><ellipse cx="8" cy="3.8" rx="2.6" ry="3.9" fill="#f5c21a" stroke="#e08a10" stroke-width="0.7" transform="rotate(215 8 8)"/><ellipse cx="8" cy="3.8" rx="2.6" ry="3.9" fill="#f5c21a" stroke="#e08a10" stroke-width="0.7" transform="rotate(305 8 8)"/><path d="M3 13L13 3" fill="none" stroke="#c03030" stroke-width="0.8" /><path d="M8 2V14M2 8H14" fill="none" stroke="#2080c0" stroke-width="0.8" /></svg>
<div class="t " style="left:175px;top:856px;font-size:11.3px;color:#000;letter-spacing:-0.3px">FF_1.3D.Total.Param.9</div>
<svg class="abs" style="left:116px;top:869.5px" width="16" height="16" viewBox="0 0 16 16"><circle cx="8" cy="5.5" r="4.5" fill="#e8f4fc" stroke="#5aa0d0" stroke-width="1"/><path d="M5.5 4.5H10.5M5.5 6.5H10.5" fill="none" stroke="#5aa0d0" stroke-width="0.8" /><path d="M8 10V13M1 15C1 11 5 11.5 8 13C11 11.5 15 11 15 15Z" fill="#9cc8e8" stroke="#5aa0d0" stroke-width="0.8" /></svg>
<div class="t " style="left:137px;top:872px;font-size:11.3px;color:#000;letter-spacing:-0.3px">Radar Cross Sections</div>
<svg class="abs" style="left:116px;top:885.5px" width="16" height="16" viewBox="0 0 16 16"><path d="M5.5 2.5H14.5V10.5H5.5Z" fill="#c8d0c8" /><path d="M1.5 6.5H10.5V14.5H1.5ZM1.5 6.5L5.5 2.5H14.5V10.5L10.5 14.5M10.5 6.5L14.5 2.5M5.5 2.5V10.5H14.5M5.5 10.5L1.5 14.5" fill="none" stroke="#7020a0" stroke-width="1.1" /></svg>
<div class="t " style="left:137px;top:888px;font-size:11.3px;color:#000;letter-spacing:-0.3px">Huygens Surfaces</div>
<svg class="abs" style="left:116px;top:901.5px" width="16" height="16" viewBox="0 0 16 16"><path d="M3.5 9V15M8 5V11M12.5 9V15" fill="none" stroke="#1c1c1c" stroke-width="1.2" /><path d="M3.5 5.5L6.5 9.5H0.5Z" fill="#e01818" /><path d="M8 1.5L11 5.5H5Z" fill="#f09810" /><path d="M12.5 5.5L15.5 9.5H9.5Z" fill="#18b030" /></svg>
<div class="t " style="left:137px;top:904px;font-size:11.3px;color:#000;letter-spacing:-0.3px">Port Definitions</div>
<svg class="abs" style="left:135px;top:917.5px" width="16" height="16" viewBox="0 0 16 16"><path d="M3.5 9V15M8 5V11M12.5 9V15" fill="none" stroke="#1c1c1c" stroke-width="1.2" /><path d="M3.5 5.5L6.5 9.5H0.5Z" fill="#e01818" /><path d="M8 1.5L11 5.5H5Z" fill="#f09810" /><path d="M12.5 5.5L15.5 9.5H9.5Z" fill="#18b030" /></svg>
<div class="t " style="left:156px;top:920px;font-size:11.3px;color:#000;letter-spacing:-0.3px">PD_1</div>
<svg class="abs" style="left:116px;top:933.5px" width="16" height="16" viewBox="0 0 16 16"><rect x="0.5" y="0.5" width="12" height="11" fill="#181818" /><path d="M1.5 10C4 9 4.5 3 7 3C9.5 3 10 7 12 8" fill="none" stroke="#f8c818" stroke-width="1.8" /><rect x="8.5" y="7.5" width="7" height="8" fill="#e8f0e8" stroke="#406040" stroke-width="0.8" /><path d="M10 10H14M10 12H14M10 13.7H13" fill="none" stroke="#508050" stroke-width="0.7" /></svg>
<div class="t " style="left:137px;top:936px;font-size:11.3px;color:#000;letter-spacing:-0.3px">Data Manager</div>
<div class="abs" style="left:176px;top:124px;width:22px;height:22px;background:#d3e5f8;border:1px solid #2b86dd;box-sizing:border-box"></div>
<svg class="abs" style="left:61px;top:127px" width="16" height="16" viewBox="0 0 16 16"><rect x="0" y="0" width="16" height="16" fill="#d8a020" /><path d="M0 16L16 0V16Z" fill="#b87a10" /><path d="M3 0V16M3 3L12 8L3 13M12 2V14" fill="none" stroke="#fff4d0" stroke-width="1.5" /></svg>
<svg class="abs" style="left:91px;top:127px" width="16" height="16" viewBox="0 0 16 16"><rect x="0" y="0" width="16" height="16" fill="#a83a28" /><path d="M0 16L16 4V16Z" fill="#8a2a1c" /><path d="M2 7C6 2 9 8 14 3" fill="none" stroke="#f0c0b0" stroke-width="1.3" /><path d="M0 12C5 9 10 13 16 9" fill="none" stroke="#c86a58" stroke-width="1" /></svg>
<svg class="abs" style="left:113px;top:127px" width="16" height="16" viewBox="0 0 16 16"><rect x="0" y="0" width="16" height="16" fill="#3a1848" /><path d="M0 6C3 6 6 3 6 0M0 10C5 10 10 5 10 0M0 14C7 14 14 7 14 0" fill="none" stroke="#e8d8f0" stroke-width="1.4" /></svg>
<svg class="abs" style="left:135px;top:127px" width="16" height="16" viewBox="0 0 16 16"><rect x="0" y="0" width="16" height="16" fill="#282828" /><circle cx="8" cy="5" r="2" fill="#f0f0ff"/><circle cx="4.5" cy="11" r="2.2" fill="#e8c020"/><circle cx="11.5" cy="11" r="2.2" fill="#60c040"/><path d="M8 5L4.5 11H11.5Z" fill="none" stroke="#c8c8c8" stroke-width="0.8" /></svg>
<svg class="abs" style="left:157px;top:127px" width="16" height="16" viewBox="0 0 16 16"><rect x="0" y="0" width="16" height="16" fill="#5a9aa8" /><path d="M6 0H10V6L14 8V9H2V8L6 6Z" fill="#123a48" /><path d="M0 10H16M0 13H16" fill="none" stroke="#d8ecf0" stroke-width="1.2" /><rect x="7" y="9" width="2" height="7" fill="#d8ecf0" /></svg>
<svg class="abs" style="left:179px;top:127px" width="16" height="16" viewBox="0 0 16 16"><rect x="0" y="0" width="16" height="16" fill="#1f7fb8" /><path d="M0 10C5 8 9 4 10 0M0 14C8 12 13 7 15 0M6 16C8 12 12 9 16 8" fill="none" stroke="#bfe4f7" stroke-width="1.2" /><path d="M2 0L16 14M16 2L4 16" fill="none" stroke="#fff" stroke-width="1.3" /></svg>
<svg class="abs" style="left:201px;top:127px" width="16" height="16" viewBox="0 0 16 16"><rect x="0" y="0" width="16" height="16" fill="#f07818" /><path d="M2 0L14 16M0 5L16 9M10 0L4 16" fill="none" stroke="#ffe8c8" stroke-width="1.1" /><path d="M0 0L7 7" fill="none" stroke="#fff" stroke-width="1.6" /></svg>
<svg class="abs" style="left:231px;top:127px" width="16" height="16" viewBox="0 0 16 16"><circle cx="8" cy="8" r="7.5" fill="#f0b020" stroke="#8a2a6a" stroke-width="1.5"/><path d="M8 0.5V15.5M2 5C6 5 6 11 2 11M14 5C10 5 10 11 14 11" fill="none" stroke="#8a2a6a" stroke-width="1.2" /></svg>
<div class="abs" style="left:84px;top:126px;width:1px;height:18px;background:#c9c6c0;box-shadow:1px 0 0 #f8f8fc"></div>
<div class="abs" style="left:224px;top:126px;width:1px;height:18px;background:#c9c6c0;box-shadow:1px 0 0 #f8f8fc"></div>
<div class="abs" style="left:52px;top:996px;width:283px;height:1px;background:#a2a2ac;"></div>
<div class="abs" style="left:54px;top:998px;width:109px;height:20px;background:#f0f0f3;border-bottom:1px solid #d8d8e0;box-sizing:border-box"></div>
<div class="abs" style="left:163px;top:998px;width:111px;height:21px;background:#fff;border:1px solid #d0d2e0;border-top:none;box-sizing:border-box"></div>
<div class="t " style="left:60px;top:1003px;font-size:11.6px;color:#6d6d6d;">Python Interpreter</div>
<div class="t " style="left:169px;top:1003px;font-size:11.6px;color:#000;">Resource Manager</div>
<div class="t " style="left:4px;top:1027px;font-size:11.4px;color:#000;">Ready</div>
<div class="t " style="left:1189px;top:1027px;font-size:11.4px;color:#000;">Millimeters</div>
<div class="t " style="left:1256px;top:1027px;font-size:11.4px;color:#000;">2.400 GHz</div>
<div class="t " style="left:1342px;top:1027px;font-size:11.4px;color:#8c8c8c;">Not Meshed</div>
<div class="t " style="left:1430px;top:1027px;font-size:11.4px;color:#000;">World</div>
<div class="t " style="left:1477px;top:1027px;font-size:11.4px;color:#000;">X:190.0000</div>
<div class="t " style="left:1561px;top:1027px;font-size:11.4px;color:#000;">Y:240.0000</div>
<div class="t " style="left:1644px;top:1027px;font-size:11.4px;color:#000;">Z:0.0000</div>
<div class="t " style="left:1728px;top:1027px;font-size:11.4px;color:#000;">Grid Snap: 10</div>
<div class="t " style="left:1818px;top:1027px;font-size:11.4px;color:#000;">Obj. Snap: ON</div>
<div class="abs" style="left:1251px;top:1024px;width:1px;height:15px;background:#d4d4d4;"></div>
<div class="abs" style="left:1337px;top:1024px;width:1px;height:15px;background:#d4d4d4;"></div>
<div class="abs" style="left:1425px;top:1024px;width:1px;height:15px;background:#d4d4d4;"></div>
<div class="abs" style="left:1472px;top:1024px;width:1px;height:15px;background:#d4d4d4;"></div>
<div class="abs" style="left:1722px;top:1024px;width:1px;height:15px;background:#d4d4d4;"></div>
<div class="abs" style="left:1812px;top:1024px;width:1px;height:15px;background:#d4d4d4;"></div></body></html>
